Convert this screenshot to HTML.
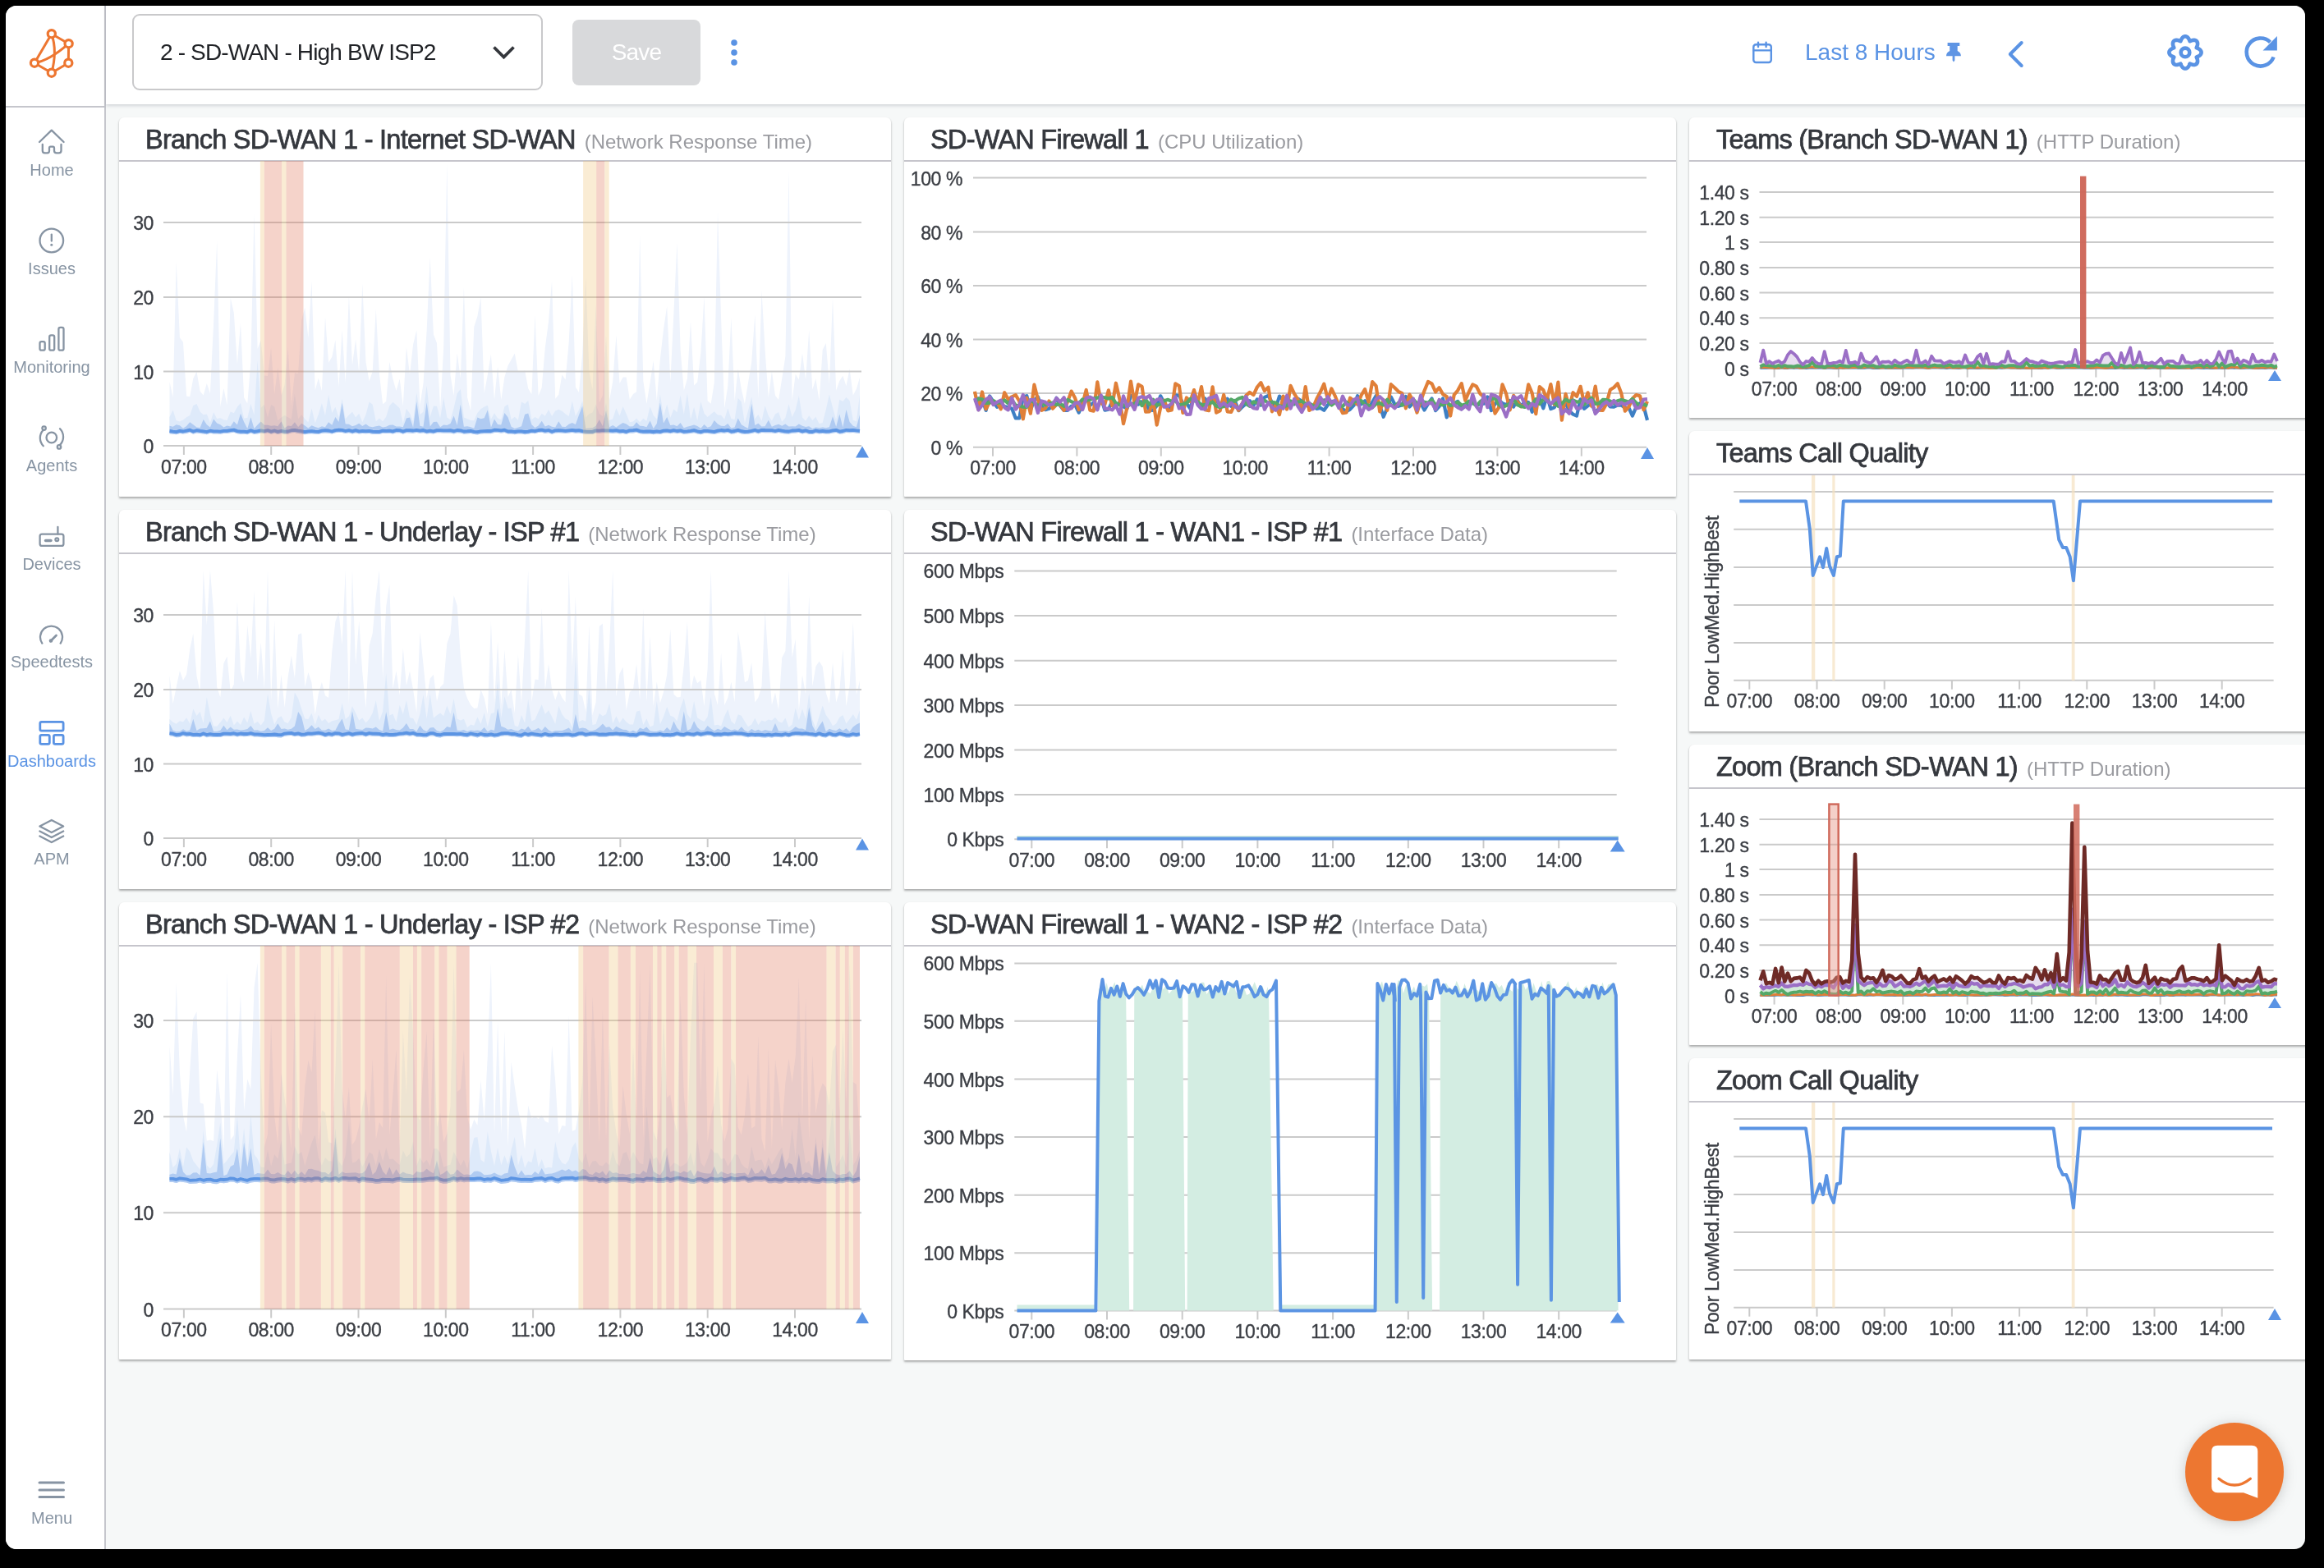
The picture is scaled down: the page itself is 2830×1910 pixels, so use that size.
<!DOCTYPE html>
<html><head><meta charset="utf-8"><style>
html,body{margin:0;padding:0;background:#000;width:2830px;height:1910px;overflow:hidden;font-family:"Liberation Sans",sans-serif}
#app{position:absolute;left:0;top:0;width:2830px;height:1910px;background:#f6f8f8;clip-path:inset(7px 23px 23px 7px round 13px)}
.abs{position:absolute}
#side{left:0;top:0;width:127px;height:1910px;background:#fff;border-right:2px solid #c5c6cc}
#logoline{left:0;top:129px;width:127px;height:2px;background:#c5c6cc}
#head{left:129px;top:0;width:2701px;height:127px;background:#fff;box-shadow:0 2px 4px rgba(30,35,60,0.16)}
.card{position:absolute;background:#fff;border-radius:6px 6px 1px 1px;box-shadow:0 2px 3px -0.5px rgba(0,0,0,0.24),0 1.5px 2px rgba(0,0,0,0.09)}
.hl{position:absolute;height:2px;background:#c6c5cc}
.nav{position:absolute;left:0;width:127px;text-align:center;font-size:20px;color:#8794a3}
svg text{font-family:"Liberation Sans",sans-serif}
svg{will-change:transform}
</style></head><body>
<div id="app">
<div id="side" class="abs"></div>
<div id="logoline" class="abs"></div>
<div id="head" class="abs"></div>
<div class="card" style="left:145px;top:143px;width:940px;height:462px"></div><div class="hl" style="left:145px;top:195px;width:940px"></div><div class="card" style="left:145px;top:621px;width:940px;height:462px"></div><div class="hl" style="left:145px;top:673px;width:940px"></div><div class="card" style="left:145px;top:1099px;width:940px;height:557px"></div><div class="hl" style="left:145px;top:1151px;width:940px"></div><div class="card" style="left:1101px;top:143px;width:940px;height:462px"></div><div class="hl" style="left:1101px;top:195px;width:940px"></div><div class="card" style="left:1101px;top:621px;width:940px;height:462px"></div><div class="hl" style="left:1101px;top:673px;width:940px"></div><div class="card" style="left:1101px;top:1099px;width:940px;height:558px"></div><div class="hl" style="left:1101px;top:1151px;width:940px"></div><div class="card" style="left:2057px;top:143px;width:760px;height:366px"></div><div class="hl" style="left:2057px;top:195px;width:760px"></div><div class="card" style="left:2057px;top:525px;width:760px;height:366px"></div><div class="hl" style="left:2057px;top:577px;width:760px"></div><div class="card" style="left:2057px;top:907px;width:760px;height:366px"></div><div class="hl" style="left:2057px;top:959px;width:760px"></div><div class="card" style="left:2057px;top:1289px;width:760px;height:367px"></div><div class="hl" style="left:2057px;top:1341px;width:760px"></div>
<svg class="abs" style="left:0;top:0" width="2830" height="1910" viewBox="0 0 2830 1910">
<text x="177.0" y="181.0" font-size="32.5" fill="#35383e" stroke="#35383e" stroke-width="0.75" letter-spacing="-0.75">Branch SD-WAN 1 - Internet SD-WAN<tspan dx="11" font-size="24" stroke="none" fill="#9a9ba0" letter-spacing="0">(Network Response Time)</tspan></text>
<polygon points="206.5,464.9 210.6,484.1 214.7,318.7 218.9,411.2 223.0,416.8 227.1,482.6 231.2,483.2 235.3,461.0 239.5,452.4 243.6,476.4 247.7,481.6 251.8,466.9 255.9,479.2 260.1,393.5 264.2,293.3 268.3,494.9 272.4,472.9 276.5,493.6 280.7,362.9 284.8,380.9 288.9,443.7 293.0,393.5 297.1,484.3 301.3,491.6 305.4,441.3 309.5,259.8 313.6,425.1 317.7,414.5 321.9,457.5 326.0,457.9 330.1,423.2 334.2,480.6 338.3,447.0 342.5,481.5 346.6,468.7 350.7,423.0 354.8,493.1 358.9,454.3 363.1,454.7 367.2,390.1 371.3,374.4 375.4,411.4 379.5,342.3 383.7,475.5 387.8,460.6 391.9,476.2 396.0,385.8 400.1,441.7 404.3,434.8 408.4,414.0 412.5,471.3 416.6,401.7 420.7,466.4 424.9,359.5 429.0,444.7 433.1,413.2 437.2,454.3 441.3,345.3 445.5,441.0 449.6,464.3 453.7,452.5 457.8,376.2 461.9,454.9 466.1,492.3 470.2,489.0 474.3,440.4 478.4,461.6 482.5,475.9 486.7,461.5 490.8,494.5 494.9,422.7 499.0,456.3 503.1,419.5 507.3,402.0 511.4,493.5 515.5,467.3 519.6,403.3 523.7,313.2 527.9,407.2 532.0,418.1 536.1,498.0 540.2,423.6 544.3,198.5 548.5,457.1 552.6,481.7 556.7,430.3 560.8,461.1 564.9,349.4 569.1,484.0 573.2,500.6 577.3,398.1 581.4,385.2 585.5,361.9 589.7,479.0 593.8,456.4 597.9,431.4 602.0,486.8 606.1,446.2 610.3,487.0 614.4,459.3 618.5,445.4 622.6,438.1 626.8,430.4 630.9,452.7 635.0,453.3 639.1,451.0 643.2,473.3 647.4,480.2 651.5,383.6 655.6,482.1 659.7,472.3 663.8,423.5 668.0,391.7 672.1,342.2 676.2,485.7 680.3,480.8 684.4,456.5 688.6,462.6 692.7,416.8 696.8,334.3 700.9,471.4 705.0,478.0 709.2,430.4 713.3,336.7 717.4,452.5 721.5,474.8 725.6,370.2 729.8,490.8 733.9,481.7 738.0,407.7 742.1,487.4 746.2,464.7 750.4,408.2 754.5,467.0 758.6,459.5 762.7,459.6 766.8,486.8 771.0,479.9 775.1,477.3 779.2,286.5 783.3,463.7 787.4,491.8 791.6,466.1 795.7,439.3 799.8,488.1 803.9,437.3 808.0,401.2 812.2,372.9 816.3,465.7 820.4,381.8 824.5,295.2 828.6,426.0 832.8,475.8 836.9,461.6 841.0,391.4 845.1,469.4 849.2,465.5 853.4,429.8 857.5,360.8 861.6,488.3 865.7,491.8 869.8,466.3 874.0,257.7 878.1,388.1 882.2,497.3 886.3,470.2 890.4,386.8 894.6,487.9 898.7,449.2 902.8,473.8 906.9,491.7 911.0,466.5 915.2,441.3 919.3,383.2 923.4,485.5 927.5,353.7 931.6,426.9 935.8,484.0 939.9,452.2 944.0,481.8 948.1,486.9 952.2,461.3 956.4,434.0 960.5,207.2 964.6,488.0 968.7,455.7 972.8,462.4 977.0,430.3 981.1,462.6 985.2,401.9 989.3,474.8 993.4,461.3 997.6,488.3 1001.7,426.1 1005.8,418.1 1009.9,467.7 1014.0,363.1 1018.2,475.7 1022.3,463.9 1026.4,457.7 1030.5,470.3 1034.6,448.9 1038.8,481.5 1042.9,473.8 1047.0,459.7 1047.0,528.0 1042.9,527.6 1038.8,527.0 1034.6,527.3 1030.5,526.9 1026.4,528.2 1022.3,528.8 1018.2,527.0 1014.0,527.5 1009.9,528.4 1005.8,528.6 1001.7,528.1 997.6,528.5 993.4,527.7 989.3,529.1 985.2,529.0 981.1,527.5 977.0,528.5 972.8,527.1 968.7,527.6 964.6,527.7 960.5,528.7 956.4,528.6 952.2,527.9 948.1,527.1 944.0,528.1 939.9,527.3 935.8,527.3 931.6,527.2 927.5,527.0 923.4,528.4 919.3,526.9 915.2,528.1 911.0,528.8 906.9,529.0 902.8,528.4 898.7,527.1 894.6,528.2 890.4,528.7 886.3,527.0 882.2,527.7 878.1,527.2 874.0,527.9 869.8,529.0 865.7,528.6 861.6,528.1 857.5,528.0 853.4,529.3 849.2,528.4 845.1,527.3 841.0,528.1 836.9,528.6 832.8,528.9 828.6,527.6 824.5,528.2 820.4,527.3 816.3,528.2 812.2,527.5 808.0,527.7 803.9,529.1 799.8,528.6 795.7,529.2 791.6,528.6 787.4,528.7 783.3,528.8 779.2,528.3 775.1,526.7 771.0,527.4 766.8,527.5 762.7,529.0 758.6,527.9 754.5,528.4 750.4,527.4 746.2,527.9 742.1,527.6 738.0,527.4 733.9,527.3 729.8,527.8 725.6,527.6 721.5,529.1 717.4,529.0 713.3,528.9 709.2,528.3 705.0,527.4 700.9,527.7 696.8,527.1 692.7,527.5 688.6,528.1 684.4,527.5 680.3,527.3 676.2,527.6 672.1,528.9 668.0,527.2 663.8,527.9 659.7,526.7 655.6,527.1 651.5,528.3 647.4,527.8 643.2,528.8 639.1,529.2 635.0,528.6 630.9,528.6 626.8,529.2 622.6,528.5 618.5,528.6 614.4,526.9 610.3,527.5 606.1,527.0 602.0,526.9 597.9,528.2 593.8,528.2 589.7,528.3 585.5,528.5 581.4,529.4 577.3,529.1 573.2,528.0 569.1,528.4 564.9,528.7 560.8,527.5 556.7,527.2 552.6,528.4 548.5,527.4 544.3,527.5 540.2,527.5 536.1,527.3 532.0,527.3 527.9,528.6 523.7,527.9 519.6,528.6 515.5,527.2 511.4,527.8 507.3,526.9 503.1,527.7 499.0,527.4 494.9,527.3 490.8,528.7 486.7,527.3 482.5,527.2 478.4,528.6 474.3,527.8 470.2,528.1 466.1,527.8 461.9,529.0 457.8,529.0 453.7,528.9 449.6,528.0 445.5,528.3 441.3,528.1 437.2,528.5 433.1,527.4 429.0,528.5 424.9,527.3 420.7,528.1 416.6,527.0 412.5,526.8 408.4,527.3 404.3,528.6 400.1,527.7 396.0,527.4 391.9,527.7 387.8,529.0 383.7,528.8 379.5,528.3 375.4,528.5 371.3,529.2 367.2,528.4 363.1,527.9 358.9,527.0 354.8,527.3 350.7,528.7 346.6,528.8 342.5,528.1 338.3,529.0 334.2,527.7 330.1,528.8 326.0,527.2 321.9,528.3 317.7,527.6 313.6,528.4 309.5,529.0 305.4,527.5 301.3,529.3 297.1,528.8 293.0,528.9 288.9,528.3 284.8,526.8 280.7,527.3 276.5,528.1 272.4,528.1 268.3,528.7 264.2,528.4 260.1,528.5 255.9,527.8 251.8,529.2 247.7,528.5 243.6,528.1 239.5,527.4 235.3,528.7 231.2,526.8 227.1,527.9 223.0,528.6 218.9,528.0 214.7,529.2 210.6,528.8 206.5,528.2" fill="#eef3fc" />
<polygon points="206.5,508.0 210.6,499.5 214.7,512.2 218.9,513.5 223.0,511.4 227.1,508.3 231.2,505.9 235.3,494.0 239.5,492.0 243.6,501.5 247.7,505.3 251.8,504.6 255.9,514.8 260.1,502.3 264.2,509.9 268.3,509.2 272.4,511.2 276.5,512.0 280.7,501.6 284.8,503.2 288.9,495.8 293.0,491.1 297.1,509.4 301.3,508.9 305.4,491.9 309.5,505.5 313.6,439.6 317.7,496.8 321.9,492.8 326.0,508.4 330.1,493.1 334.2,495.4 338.3,512.2 342.5,508.6 346.6,506.1 350.7,508.2 354.8,510.7 358.9,479.8 363.1,510.2 367.2,505.3 371.3,510.3 375.4,514.4 379.5,497.4 383.7,515.3 387.8,504.8 391.9,491.2 396.0,505.9 400.1,480.9 404.3,503.0 408.4,495.8 412.5,508.5 416.6,485.5 420.7,510.3 424.9,505.5 429.0,501.7 433.1,508.6 437.2,503.7 441.3,514.3 445.5,505.1 449.6,489.4 453.7,492.8 457.8,513.3 461.9,509.6 466.1,513.2 470.2,507.8 474.3,494.2 478.4,489.7 482.5,493.3 486.7,497.2 490.8,515.5 494.9,497.9 499.0,503.5 503.1,513.6 507.3,478.5 511.4,505.0 515.5,501.8 519.6,469.5 523.7,507.9 527.9,494.5 532.0,494.7 536.1,509.4 540.2,484.2 544.3,508.6 548.5,511.3 552.6,497.3 556.7,479.3 560.8,474.1 564.9,508.5 569.1,510.2 573.2,512.1 577.3,512.3 581.4,503.1 585.5,498.3 589.7,495.5 593.8,493.8 597.9,510.5 602.0,503.2 606.1,509.4 610.3,510.9 614.4,495.3 618.5,492.6 622.6,510.9 626.8,507.7 630.9,511.7 635.0,489.5 639.1,492.0 643.2,488.1 647.4,511.1 651.5,508.1 655.6,510.3 659.7,503.8 663.8,506.7 668.0,499.1 672.1,506.9 676.2,500.6 680.3,498.7 684.4,500.8 688.6,504.3 692.7,507.0 696.8,488.6 700.9,507.0 705.0,499.2 709.2,488.6 713.3,508.6 717.4,504.3 721.5,502.6 725.6,492.4 729.8,504.0 733.9,507.1 738.0,490.8 742.1,511.9 746.2,510.2 750.4,497.3 754.5,506.5 758.6,494.9 762.7,504.3 766.8,514.2 771.0,513.5 775.1,509.7 779.2,514.2 783.3,509.7 787.4,512.8 791.6,495.3 795.7,506.1 799.8,510.6 803.9,480.6 808.0,506.9 812.2,492.6 816.3,508.8 820.4,498.5 824.5,502.2 828.6,481.6 832.8,504.7 836.9,479.1 841.0,511.1 845.1,495.7 849.2,512.3 853.4,489.3 857.5,503.5 861.6,507.9 865.7,504.4 869.8,501.2 874.0,505.4 878.1,505.8 882.2,510.7 886.3,497.6 890.4,510.0 894.6,511.0 898.7,484.9 902.8,489.4 906.9,515.3 911.0,500.4 915.2,483.5 919.3,510.1 923.4,504.9 927.5,512.8 931.6,494.3 935.8,506.4 939.9,512.6 944.0,504.5 948.1,502.0 952.2,513.7 956.4,508.7 960.5,492.2 964.6,507.9 968.7,499.6 972.8,481.9 977.0,508.4 981.1,512.8 985.2,506.3 989.3,512.1 993.4,507.7 997.6,516.3 1001.7,514.9 1005.8,499.0 1009.9,480.5 1014.0,496.6 1018.2,511.6 1022.3,486.7 1026.4,489.1 1030.5,483.9 1034.6,487.9 1038.8,511.7 1042.9,513.3 1047.0,481.0 1047.0,528.0 1042.9,527.6 1038.8,527.0 1034.6,527.3 1030.5,526.9 1026.4,528.2 1022.3,528.8 1018.2,527.0 1014.0,527.5 1009.9,528.4 1005.8,528.6 1001.7,528.1 997.6,528.5 993.4,527.7 989.3,529.1 985.2,529.0 981.1,527.5 977.0,528.5 972.8,527.1 968.7,527.6 964.6,527.7 960.5,528.7 956.4,528.6 952.2,527.9 948.1,527.1 944.0,528.1 939.9,527.3 935.8,527.3 931.6,527.2 927.5,527.0 923.4,528.4 919.3,526.9 915.2,528.1 911.0,528.8 906.9,529.0 902.8,528.4 898.7,527.1 894.6,528.2 890.4,528.7 886.3,527.0 882.2,527.7 878.1,527.2 874.0,527.9 869.8,529.0 865.7,528.6 861.6,528.1 857.5,528.0 853.4,529.3 849.2,528.4 845.1,527.3 841.0,528.1 836.9,528.6 832.8,528.9 828.6,527.6 824.5,528.2 820.4,527.3 816.3,528.2 812.2,527.5 808.0,527.7 803.9,529.1 799.8,528.6 795.7,529.2 791.6,528.6 787.4,528.7 783.3,528.8 779.2,528.3 775.1,526.7 771.0,527.4 766.8,527.5 762.7,529.0 758.6,527.9 754.5,528.4 750.4,527.4 746.2,527.9 742.1,527.6 738.0,527.4 733.9,527.3 729.8,527.8 725.6,527.6 721.5,529.1 717.4,529.0 713.3,528.9 709.2,528.3 705.0,527.4 700.9,527.7 696.8,527.1 692.7,527.5 688.6,528.1 684.4,527.5 680.3,527.3 676.2,527.6 672.1,528.9 668.0,527.2 663.8,527.9 659.7,526.7 655.6,527.1 651.5,528.3 647.4,527.8 643.2,528.8 639.1,529.2 635.0,528.6 630.9,528.6 626.8,529.2 622.6,528.5 618.5,528.6 614.4,526.9 610.3,527.5 606.1,527.0 602.0,526.9 597.9,528.2 593.8,528.2 589.7,528.3 585.5,528.5 581.4,529.4 577.3,529.1 573.2,528.0 569.1,528.4 564.9,528.7 560.8,527.5 556.7,527.2 552.6,528.4 548.5,527.4 544.3,527.5 540.2,527.5 536.1,527.3 532.0,527.3 527.9,528.6 523.7,527.9 519.6,528.6 515.5,527.2 511.4,527.8 507.3,526.9 503.1,527.7 499.0,527.4 494.9,527.3 490.8,528.7 486.7,527.3 482.5,527.2 478.4,528.6 474.3,527.8 470.2,528.1 466.1,527.8 461.9,529.0 457.8,529.0 453.7,528.9 449.6,528.0 445.5,528.3 441.3,528.1 437.2,528.5 433.1,527.4 429.0,528.5 424.9,527.3 420.7,528.1 416.6,527.0 412.5,526.8 408.4,527.3 404.3,528.6 400.1,527.7 396.0,527.4 391.9,527.7 387.8,529.0 383.7,528.8 379.5,528.3 375.4,528.5 371.3,529.2 367.2,528.4 363.1,527.9 358.9,527.0 354.8,527.3 350.7,528.7 346.6,528.8 342.5,528.1 338.3,529.0 334.2,527.7 330.1,528.8 326.0,527.2 321.9,528.3 317.7,527.6 313.6,528.4 309.5,529.0 305.4,527.5 301.3,529.3 297.1,528.8 293.0,528.9 288.9,528.3 284.8,526.8 280.7,527.3 276.5,528.1 272.4,528.1 268.3,528.7 264.2,528.4 260.1,528.5 255.9,527.8 251.8,529.2 247.7,528.5 243.6,528.1 239.5,527.4 235.3,528.7 231.2,526.8 227.1,527.9 223.0,528.6 218.9,528.0 214.7,529.2 210.6,528.8 206.5,528.2" fill="#deeafa" />
<polygon points="206.5,518.7 210.6,519.7 214.7,517.2 218.9,518.2 223.0,521.7 227.1,518.9 231.2,514.2 235.3,517.3 239.5,520.6 243.6,521.1 247.7,511.1 251.8,517.3 255.9,520.6 260.1,510.5 264.2,515.5 268.3,517.2 272.4,520.4 276.5,518.6 280.7,519.6 284.8,513.2 288.9,517.6 293.0,503.8 297.1,514.1 301.3,521.9 305.4,508.2 309.5,522.1 313.6,517.4 317.7,513.5 321.9,517.8 326.0,517.7 330.1,518.8 334.2,518.2 338.3,519.3 342.5,513.2 346.6,521.4 350.7,518.4 354.8,519.0 358.9,514.2 363.1,520.0 367.2,515.8 371.3,518.5 375.4,521.6 379.5,518.3 383.7,520.0 387.8,521.2 391.9,519.3 396.0,520.2 400.1,514.2 404.3,517.8 408.4,508.0 412.5,513.9 416.6,490.7 420.7,516.4 424.9,516.8 429.0,519.3 433.1,518.0 437.2,515.7 441.3,519.1 445.5,516.4 449.6,519.5 453.7,520.3 457.8,519.2 461.9,518.5 466.1,520.6 470.2,519.8 474.3,517.7 478.4,517.5 482.5,519.6 486.7,519.5 490.8,520.2 494.9,509.5 499.0,508.4 503.1,520.4 507.3,489.2 511.4,518.7 515.5,519.7 519.6,490.2 523.7,519.4 527.9,514.1 532.0,513.7 536.1,520.2 540.2,517.6 544.3,518.0 548.5,516.0 552.6,506.5 556.7,517.9 560.8,492.8 564.9,519.8 569.1,519.2 573.2,520.2 577.3,521.8 581.4,508.4 585.5,510.2 589.7,509.2 593.8,499.6 597.9,520.4 602.0,510.4 606.1,517.1 610.3,517.5 614.4,503.0 618.5,508.3 622.6,519.7 626.8,522.0 630.9,520.8 635.0,519.3 639.1,504.8 643.2,503.4 647.4,517.2 651.5,521.1 655.6,518.5 659.7,512.8 663.8,519.5 668.0,517.8 672.1,519.8 676.2,520.6 680.3,513.3 684.4,519.8 688.6,520.0 692.7,516.8 696.8,515.1 700.9,517.0 705.0,505.6 709.2,494.4 713.3,521.9 717.4,521.5 721.5,521.2 725.6,518.7 729.8,511.0 733.9,518.9 738.0,500.0 742.1,520.3 746.2,517.9 750.4,520.5 754.5,517.6 758.6,515.0 762.7,516.6 766.8,519.6 771.0,519.2 775.1,514.3 779.2,518.8 783.3,519.0 787.4,520.3 791.6,512.6 795.7,521.9 799.8,516.1 803.9,490.7 808.0,515.5 812.2,507.9 816.3,518.1 820.4,517.5 824.5,519.2 828.6,515.0 832.8,521.2 836.9,519.8 841.0,518.7 845.1,517.6 849.2,518.9 853.4,521.8 857.5,517.0 861.6,520.8 865.7,519.2 869.8,512.1 874.0,516.6 878.1,518.7 882.2,519.1 886.3,516.0 890.4,521.5 894.6,520.5 898.7,509.5 902.8,517.3 906.9,519.8 911.0,521.7 915.2,491.7 919.3,518.1 923.4,515.8 927.5,519.5 931.6,519.2 935.8,511.7 939.9,519.8 944.0,517.9 948.1,516.8 952.2,518.7 956.4,516.6 960.5,519.4 964.6,519.3 968.7,519.4 972.8,516.6 977.0,518.8 981.1,519.9 985.2,519.3 989.3,522.3 993.4,520.6 997.6,521.2 1001.7,520.4 1005.8,521.3 1009.9,520.2 1014.0,507.2 1018.2,519.7 1022.3,504.4 1026.4,520.5 1030.5,498.9 1034.6,514.1 1038.8,518.7 1042.9,520.2 1047.0,505.3 1047.0,528.0 1042.9,527.6 1038.8,527.0 1034.6,527.3 1030.5,526.9 1026.4,528.2 1022.3,528.8 1018.2,527.0 1014.0,527.5 1009.9,528.4 1005.8,528.6 1001.7,528.1 997.6,528.5 993.4,527.7 989.3,529.1 985.2,529.0 981.1,527.5 977.0,528.5 972.8,527.1 968.7,527.6 964.6,527.7 960.5,528.7 956.4,528.6 952.2,527.9 948.1,527.1 944.0,528.1 939.9,527.3 935.8,527.3 931.6,527.2 927.5,527.0 923.4,528.4 919.3,526.9 915.2,528.1 911.0,528.8 906.9,529.0 902.8,528.4 898.7,527.1 894.6,528.2 890.4,528.7 886.3,527.0 882.2,527.7 878.1,527.2 874.0,527.9 869.8,529.0 865.7,528.6 861.6,528.1 857.5,528.0 853.4,529.3 849.2,528.4 845.1,527.3 841.0,528.1 836.9,528.6 832.8,528.9 828.6,527.6 824.5,528.2 820.4,527.3 816.3,528.2 812.2,527.5 808.0,527.7 803.9,529.1 799.8,528.6 795.7,529.2 791.6,528.6 787.4,528.7 783.3,528.8 779.2,528.3 775.1,526.7 771.0,527.4 766.8,527.5 762.7,529.0 758.6,527.9 754.5,528.4 750.4,527.4 746.2,527.9 742.1,527.6 738.0,527.4 733.9,527.3 729.8,527.8 725.6,527.6 721.5,529.1 717.4,529.0 713.3,528.9 709.2,528.3 705.0,527.4 700.9,527.7 696.8,527.1 692.7,527.5 688.6,528.1 684.4,527.5 680.3,527.3 676.2,527.6 672.1,528.9 668.0,527.2 663.8,527.9 659.7,526.7 655.6,527.1 651.5,528.3 647.4,527.8 643.2,528.8 639.1,529.2 635.0,528.6 630.9,528.6 626.8,529.2 622.6,528.5 618.5,528.6 614.4,526.9 610.3,527.5 606.1,527.0 602.0,526.9 597.9,528.2 593.8,528.2 589.7,528.3 585.5,528.5 581.4,529.4 577.3,529.1 573.2,528.0 569.1,528.4 564.9,528.7 560.8,527.5 556.7,527.2 552.6,528.4 548.5,527.4 544.3,527.5 540.2,527.5 536.1,527.3 532.0,527.3 527.9,528.6 523.7,527.9 519.6,528.6 515.5,527.2 511.4,527.8 507.3,526.9 503.1,527.7 499.0,527.4 494.9,527.3 490.8,528.7 486.7,527.3 482.5,527.2 478.4,528.6 474.3,527.8 470.2,528.1 466.1,527.8 461.9,529.0 457.8,529.0 453.7,528.9 449.6,528.0 445.5,528.3 441.3,528.1 437.2,528.5 433.1,527.4 429.0,528.5 424.9,527.3 420.7,528.1 416.6,527.0 412.5,526.8 408.4,527.3 404.3,528.6 400.1,527.7 396.0,527.4 391.9,527.7 387.8,529.0 383.7,528.8 379.5,528.3 375.4,528.5 371.3,529.2 367.2,528.4 363.1,527.9 358.9,527.0 354.8,527.3 350.7,528.7 346.6,528.8 342.5,528.1 338.3,529.0 334.2,527.7 330.1,528.8 326.0,527.2 321.9,528.3 317.7,527.6 313.6,528.4 309.5,529.0 305.4,527.5 301.3,529.3 297.1,528.8 293.0,528.9 288.9,528.3 284.8,526.8 280.7,527.3 276.5,528.1 272.4,528.1 268.3,528.7 264.2,528.4 260.1,528.5 255.9,527.8 251.8,529.2 247.7,528.5 243.6,528.1 239.5,527.4 235.3,528.7 231.2,526.8 227.1,527.9 223.0,528.6 218.9,528.0 214.7,529.2 210.6,528.8 206.5,528.2" fill="#b0cbf2" />
<polyline points="206.5,525.0 210.6,525.6 214.7,526.1 218.9,524.9 223.0,525.5 227.1,524.7 231.2,523.7 235.3,525.5 239.5,524.2 243.6,524.9 247.7,525.3 251.8,526.0 255.9,524.7 260.1,525.3 264.2,525.3 268.3,525.6 272.4,524.9 276.5,524.9 280.7,524.1 284.8,523.6 288.9,525.1 293.0,525.7 297.1,525.6 301.3,526.1 305.4,524.3 309.5,525.8 313.6,525.2 317.7,524.4 321.9,525.1 326.0,524.1 330.1,525.6 334.2,524.5 338.3,525.9 342.5,524.9 346.6,525.6 350.7,525.5 354.8,524.2 358.9,523.9 363.1,524.7 367.2,525.2 371.3,526.1 375.4,525.3 379.5,525.1 383.7,525.7 387.8,525.9 391.9,524.6 396.0,524.2 400.1,524.5 404.3,525.5 408.4,524.1 412.5,523.7 416.6,523.9 420.7,525.0 424.9,524.1 429.0,525.3 433.1,524.2 437.2,525.3 441.3,524.9 445.5,525.1 449.6,524.9 453.7,525.7 457.8,525.9 461.9,525.8 466.1,524.6 470.2,524.9 474.3,524.6 478.4,525.4 482.5,524.0 486.7,524.1 490.8,525.5 494.9,524.1 499.0,524.2 503.1,524.5 507.3,523.8 511.4,524.6 515.5,524.0 519.6,525.4 523.7,524.7 527.9,525.4 532.0,524.1 536.1,524.1 540.2,524.3 544.3,524.3 548.5,524.2 552.6,525.2 556.7,524.0 560.8,524.3 564.9,525.5 569.1,525.2 573.2,524.8 577.3,525.9 581.4,526.2 585.5,525.3 589.7,525.1 593.8,525.0 597.9,525.0 602.0,523.7 606.1,523.9 610.3,524.3 614.4,523.7 618.5,525.5 622.6,525.3 626.8,526.0 630.9,525.4 635.0,525.4 639.1,526.0 643.2,525.7 647.4,524.6 651.5,525.1 655.6,524.0 659.7,523.6 663.8,524.7 668.0,524.0 672.1,525.7 676.2,524.4 680.3,524.2 684.4,524.3 688.6,524.9 692.7,524.4 696.8,523.9 700.9,524.5 705.0,524.2 709.2,525.2 713.3,525.7 717.4,525.9 721.5,525.9 725.6,524.4 729.8,524.6 733.9,524.1 738.0,524.3 742.1,524.4 746.2,524.7 750.4,524.2 754.5,525.2 758.6,524.8 762.7,525.8 766.8,524.4 771.0,524.2 775.1,523.6 779.2,525.1 783.3,525.6 787.4,525.5 791.6,525.5 795.7,526.0 799.8,525.4 803.9,525.9 808.0,524.6 812.2,524.3 816.3,525.1 820.4,524.2 824.5,525.0 828.6,524.4 832.8,525.7 836.9,525.4 841.0,524.9 845.1,524.1 849.2,525.3 853.4,526.1 857.5,524.8 861.6,524.9 865.7,525.4 869.8,525.9 874.0,524.7 878.1,524.0 882.2,524.5 886.3,523.8 890.4,525.6 894.6,525.0 898.7,523.9 902.8,525.2 906.9,525.9 911.0,525.6 915.2,524.9 919.3,523.7 923.4,525.2 927.5,523.8 931.6,524.0 935.8,524.1 939.9,524.2 944.0,525.0 948.1,523.9 952.2,524.7 956.4,525.4 960.5,525.5 964.6,524.5 968.7,524.4 972.8,523.9 977.0,525.4 981.1,524.3 985.2,525.8 989.3,526.0 993.4,524.5 997.6,525.4 1001.7,525.0 1005.8,525.5 1009.9,525.3 1014.0,524.4 1018.2,523.8 1022.3,525.6 1026.4,525.0 1030.5,523.8 1034.6,524.1 1038.8,523.8 1042.9,524.4 1047.0,524.9" fill="none" stroke="#5b94e3" stroke-width="3.8" stroke-linejoin="round" />
<line x1="199.0" y1="543.0" x2="1049.0" y2="543.0" stroke="#cacaca" stroke-width="2"/>
<text x="187.0" y="552.0" font-size="23" fill="#3b3e44" stroke="#3b3e44" stroke-width="0.35" letter-spacing="-0.4" text-anchor="end" font-weight="normal" >0</text>
<line x1="199.0" y1="452.5" x2="1049.0" y2="452.5" stroke="#cacaca" stroke-width="2"/>
<text x="187.0" y="461.5" font-size="23" fill="#3b3e44" stroke="#3b3e44" stroke-width="0.35" letter-spacing="-0.4" text-anchor="end" font-weight="normal" >10</text>
<line x1="199.0" y1="362.0" x2="1049.0" y2="362.0" stroke="#cacaca" stroke-width="2"/>
<text x="187.0" y="371.0" font-size="23" fill="#3b3e44" stroke="#3b3e44" stroke-width="0.35" letter-spacing="-0.4" text-anchor="end" font-weight="normal" >20</text>
<line x1="199.0" y1="271.0" x2="1049.0" y2="271.0" stroke="#cacaca" stroke-width="2"/>
<text x="187.0" y="280.0" font-size="23" fill="#3b3e44" stroke="#3b3e44" stroke-width="0.35" letter-spacing="-0.4" text-anchor="end" font-weight="normal" >30</text>
<line x1="223.9" y1="543.0" x2="223.9" y2="554.0" stroke="#cacaca" stroke-width="2"/>
<text x="223.9" y="576.5" font-size="23" fill="#3b3e44" stroke="#3b3e44" stroke-width="0.35" letter-spacing="-0.4" text-anchor="middle" font-weight="normal" >07:00</text>
<line x1="330.2" y1="543.0" x2="330.2" y2="554.0" stroke="#cacaca" stroke-width="2"/>
<text x="330.2" y="576.5" font-size="23" fill="#3b3e44" stroke="#3b3e44" stroke-width="0.35" letter-spacing="-0.4" text-anchor="middle" font-weight="normal" >08:00</text>
<line x1="436.5" y1="543.0" x2="436.5" y2="554.0" stroke="#cacaca" stroke-width="2"/>
<text x="436.5" y="576.5" font-size="23" fill="#3b3e44" stroke="#3b3e44" stroke-width="0.35" letter-spacing="-0.4" text-anchor="middle" font-weight="normal" >09:00</text>
<line x1="542.8" y1="543.0" x2="542.8" y2="554.0" stroke="#cacaca" stroke-width="2"/>
<text x="542.8" y="576.5" font-size="23" fill="#3b3e44" stroke="#3b3e44" stroke-width="0.35" letter-spacing="-0.4" text-anchor="middle" font-weight="normal" >10:00</text>
<line x1="649.1" y1="543.0" x2="649.1" y2="554.0" stroke="#cacaca" stroke-width="2"/>
<text x="649.1" y="576.5" font-size="23" fill="#3b3e44" stroke="#3b3e44" stroke-width="0.35" letter-spacing="-0.4" text-anchor="middle" font-weight="normal" >11:00</text>
<line x1="755.4" y1="543.0" x2="755.4" y2="554.0" stroke="#cacaca" stroke-width="2"/>
<text x="755.4" y="576.5" font-size="23" fill="#3b3e44" stroke="#3b3e44" stroke-width="0.35" letter-spacing="-0.4" text-anchor="middle" font-weight="normal" >12:00</text>
<line x1="861.7" y1="543.0" x2="861.7" y2="554.0" stroke="#cacaca" stroke-width="2"/>
<text x="861.7" y="576.5" font-size="23" fill="#3b3e44" stroke="#3b3e44" stroke-width="0.35" letter-spacing="-0.4" text-anchor="middle" font-weight="normal" >13:00</text>
<line x1="968.0" y1="543.0" x2="968.0" y2="554.0" stroke="#cacaca" stroke-width="2"/>
<text x="968.0" y="576.5" font-size="23" fill="#3b3e44" stroke="#3b3e44" stroke-width="0.35" letter-spacing="-0.4" text-anchor="middle" font-weight="normal" >14:00</text>
<line x1="199" y1="543" x2="1049" y2="543" stroke="#cacaca" stroke-width="2"/>
<rect x="316.9" y="196.0" width="4.9" height="347.0" fill="rgba(239,196,121,0.32)"/>
<rect x="321.8" y="196.0" width="21.4" height="347.0" fill="rgba(224,118,89,0.32)"/>
<rect x="343.2" y="196.0" width="5.3" height="347.0" fill="rgba(239,196,121,0.32)"/>
<rect x="348.5" y="196.0" width="21.0" height="347.0" fill="rgba(224,118,89,0.32)"/>
<rect x="710.1" y="196.0" width="16.2" height="347.0" fill="rgba(239,196,121,0.32)"/>
<rect x="726.2" y="196.0" width="10.1" height="347.0" fill="rgba(224,118,89,0.32)"/>
<rect x="736.4" y="196.0" width="5.3" height="347.0" fill="rgba(239,196,121,0.32)"/>
<polygon points="1042.0,557.5 1050.0,543.5 1058.0,557.5" fill="#5a93e4"/>
<text x="177.0" y="659.0" font-size="32.5" fill="#35383e" stroke="#35383e" stroke-width="0.75" letter-spacing="-0.75">Branch SD-WAN 1 - Underlay - ISP #1<tspan dx="11" font-size="24" stroke="none" fill="#9a9ba0" letter-spacing="0">(Network Response Time)</tspan></text>
<polygon points="206.5,822.9 210.6,857.2 214.7,836.9 218.9,816.9 223.0,828.7 227.1,821.4 231.2,790.9 235.3,771.5 239.5,823.5 243.6,843.1 247.7,694.6 251.8,761.4 255.9,694.6 260.1,745.7 264.2,837.0 268.3,849.3 272.4,807.9 276.5,799.4 280.7,841.9 284.8,833.7 288.9,731.9 293.0,818.1 297.1,831.7 301.3,761.5 305.4,802.3 309.5,719.5 313.6,829.9 317.7,782.4 321.9,839.4 326.0,694.6 330.1,853.7 334.2,755.4 338.3,863.0 342.5,821.6 346.6,861.7 350.7,824.4 354.8,798.4 358.9,826.1 363.1,772.9 367.2,771.2 371.3,836.7 375.4,819.1 379.5,831.4 383.7,870.6 387.8,844.9 391.9,830.8 396.0,847.3 400.1,850.0 404.3,793.6 408.4,757.2 412.5,745.6 416.6,785.6 420.7,694.6 424.9,858.1 429.0,694.6 433.1,810.1 437.2,756.0 441.3,819.0 445.5,862.4 449.6,786.8 453.7,771.4 457.8,726.1 461.9,694.6 466.1,826.5 470.2,738.8 474.3,711.8 478.4,839.1 482.5,817.2 486.7,846.7 490.8,789.4 494.9,834.9 499.0,817.6 503.1,839.9 507.3,868.2 511.4,770.0 515.5,809.3 519.6,851.0 523.7,826.4 527.9,821.7 532.0,854.5 536.1,836.9 540.2,832.7 544.3,783.9 548.5,771.7 552.6,725.1 556.7,737.7 560.8,799.5 564.9,838.1 569.1,850.8 573.2,858.7 577.3,862.9 581.4,862.4 585.5,840.0 589.7,850.4 593.8,870.2 597.9,756.4 602.0,857.1 606.1,781.3 610.3,859.0 614.4,791.4 618.5,849.3 622.6,839.8 626.8,868.8 630.9,797.1 635.0,857.2 639.1,777.2 643.2,694.6 647.4,855.1 651.5,827.4 655.6,827.9 659.7,740.7 663.8,840.3 668.0,808.6 672.1,840.1 676.2,852.7 680.3,841.1 684.4,849.7 688.6,855.4 692.7,694.6 696.8,812.4 700.9,726.6 705.0,845.5 709.2,848.0 713.3,867.1 717.4,761.3 721.5,871.0 725.6,855.5 729.8,762.9 733.9,759.4 738.0,844.5 742.1,785.8 746.2,694.6 750.4,848.8 754.5,820.6 758.6,812.6 762.7,865.1 766.8,843.0 771.0,839.7 775.1,808.8 779.2,852.6 783.3,741.0 787.4,855.0 791.6,774.5 795.7,860.1 799.8,830.4 803.9,856.2 808.0,843.1 812.2,821.8 816.3,766.3 820.4,845.4 824.5,849.4 828.6,849.0 832.8,810.3 836.9,757.3 841.0,841.9 845.1,822.5 849.2,832.3 853.4,828.4 857.5,860.3 861.6,814.7 865.7,694.6 869.8,844.5 874.0,859.0 878.1,795.3 882.2,859.0 886.3,850.0 890.4,830.5 894.6,855.3 898.7,769.3 902.8,794.9 906.9,831.3 911.0,828.7 915.2,806.9 919.3,855.4 923.4,849.7 927.5,836.1 931.6,743.7 935.8,806.3 939.9,858.5 944.0,843.5 948.1,864.7 952.2,801.2 956.4,793.0 960.5,694.6 964.6,801.2 968.7,778.6 972.8,865.2 977.0,822.4 981.1,845.8 985.2,725.1 989.3,836.0 993.4,811.8 997.6,805.4 1001.7,812.1 1005.8,843.8 1009.9,856.8 1014.0,807.1 1018.2,855.6 1022.3,842.3 1026.4,790.3 1030.5,860.4 1034.6,835.6 1038.8,757.4 1042.9,846.3 1047.0,829.0 1047.0,897.1 1042.9,897.9 1038.8,897.2 1034.6,898.5 1030.5,898.5 1026.4,897.6 1022.3,896.6 1018.2,898.3 1014.0,898.0 1009.9,896.5 1005.8,898.4 1001.7,898.1 997.6,896.4 993.4,898.2 989.3,897.4 985.2,897.0 981.1,896.4 977.0,896.8 972.8,896.4 968.7,896.3 964.6,896.8 960.5,898.3 956.4,897.2 952.2,898.3 948.1,898.0 944.0,897.7 939.9,898.6 935.8,897.9 931.6,898.5 927.5,898.2 923.4,897.8 919.3,898.1 915.2,897.5 911.0,898.3 906.9,897.4 902.8,896.5 898.7,896.6 894.6,896.2 890.4,896.9 886.3,897.3 882.2,896.8 878.1,897.7 874.0,897.4 869.8,897.9 865.7,896.3 861.6,895.9 857.5,896.7 853.4,897.5 849.2,896.2 845.1,897.7 841.0,897.3 836.9,896.5 832.8,898.0 828.6,897.6 824.5,896.4 820.4,897.8 816.3,898.3 812.2,898.0 808.0,898.3 803.9,897.2 799.8,897.8 795.7,897.8 791.6,898.1 787.4,897.2 783.3,896.3 779.2,896.5 775.1,898.6 771.0,898.2 766.8,898.3 762.7,897.4 758.6,897.2 754.5,897.2 750.4,896.5 746.2,897.0 742.1,897.0 738.0,897.7 733.9,897.7 729.8,897.7 725.6,896.9 721.5,896.7 717.4,897.1 713.3,897.9 709.2,896.4 705.0,896.5 700.9,898.1 696.8,898.5 692.7,897.6 688.6,897.6 684.4,898.0 680.3,897.9 676.2,897.4 672.1,898.3 668.0,898.3 663.8,897.0 659.7,898.5 655.6,898.0 651.5,897.5 647.4,896.9 643.2,897.9 639.1,896.6 635.0,898.7 630.9,898.3 626.8,897.2 622.6,897.2 618.5,896.3 614.4,896.3 610.3,896.7 606.1,898.0 602.0,898.5 597.9,897.5 593.8,898.2 589.7,898.2 585.5,897.0 581.4,898.4 577.3,897.6 573.2,896.7 569.1,898.3 564.9,897.8 560.8,897.1 556.7,897.3 552.6,897.1 548.5,897.1 544.3,896.9 540.2,897.2 536.1,898.4 532.0,898.0 527.9,896.4 523.7,896.4 519.6,898.2 515.5,898.3 511.4,897.7 507.3,897.7 503.1,896.0 499.0,896.8 494.9,895.9 490.8,896.5 486.7,896.8 482.5,897.6 478.4,898.0 474.3,898.1 470.2,897.4 466.1,898.1 461.9,897.1 457.8,896.9 453.7,896.8 449.6,896.2 445.5,897.6 441.3,896.2 437.2,896.4 433.1,896.8 429.0,897.7 424.9,896.3 420.7,897.1 416.6,897.9 412.5,896.5 408.4,896.3 404.3,897.7 400.1,896.9 396.0,898.1 391.9,896.6 387.8,895.8 383.7,896.3 379.5,896.8 375.4,896.6 371.3,897.6 367.2,897.7 363.1,896.6 358.9,897.3 354.8,896.1 350.7,896.3 346.6,896.8 342.5,898.4 338.3,898.2 334.2,897.7 330.1,898.0 326.0,898.1 321.9,898.3 317.7,897.9 313.6,897.6 309.5,897.5 305.4,896.3 301.3,897.1 297.1,897.2 293.0,896.7 288.9,897.6 284.8,896.4 280.7,897.0 276.5,896.8 272.4,896.8 268.3,898.1 264.2,898.1 260.1,898.0 255.9,897.4 251.8,898.2 247.7,896.6 243.6,898.3 239.5,897.8 235.3,898.1 231.2,896.9 227.1,897.4 223.0,896.3 218.9,897.9 214.7,898.2 210.6,896.9 206.5,896.2" fill="#eef3fc" />
<polygon points="206.5,876.0 210.6,879.8 214.7,881.7 218.9,878.3 223.0,879.6 227.1,874.3 231.2,881.5 235.3,863.4 239.5,871.9 243.6,866.8 247.7,881.1 251.8,849.3 255.9,870.2 260.1,884.5 264.2,884.8 268.3,879.9 272.4,874.5 276.5,879.9 280.7,871.8 284.8,883.5 288.9,878.6 293.0,882.9 297.1,873.5 301.3,880.4 305.4,866.0 309.5,881.8 313.6,878.9 317.7,883.5 321.9,877.7 326.0,844.9 330.1,869.0 334.2,882.6 338.3,874.8 342.5,872.3 346.6,879.4 350.7,880.9 354.8,873.7 358.9,843.5 363.1,850.8 367.2,863.7 371.3,875.4 375.4,875.9 379.5,868.8 383.7,883.1 387.8,870.8 391.9,878.5 396.0,875.7 400.1,881.0 404.3,878.3 408.4,877.2 412.5,876.1 416.6,856.5 420.7,876.1 424.9,872.5 429.0,860.2 433.1,868.6 437.2,877.4 441.3,874.5 445.5,880.4 449.6,875.9 453.7,868.5 457.8,853.3 461.9,878.3 466.1,866.4 470.2,820.2 474.3,871.6 478.4,869.4 482.5,879.8 486.7,858.8 490.8,869.9 494.9,853.1 499.0,874.3 503.1,875.0 507.3,883.1 511.4,869.4 515.5,846.3 519.6,875.8 523.7,844.9 527.9,874.4 532.0,871.2 536.1,868.5 540.2,872.3 544.3,859.4 548.5,869.9 552.6,851.3 556.7,875.6 560.8,877.4 564.9,875.8 569.1,886.3 573.2,882.5 577.3,883.8 581.4,873.4 585.5,882.0 589.7,868.0 593.8,885.3 597.9,869.2 602.0,868.0 606.1,829.7 610.3,874.2 614.4,848.2 618.5,862.9 622.6,862.4 626.8,884.1 630.9,885.2 635.0,871.0 639.1,880.7 643.2,851.7 647.4,878.5 651.5,876.6 655.6,867.0 659.7,858.3 663.8,870.1 668.0,865.3 672.1,873.0 676.2,881.7 680.3,859.7 684.4,870.0 688.6,875.6 692.7,877.3 696.8,885.9 700.9,798.9 705.0,879.1 709.2,876.9 713.3,878.8 717.4,837.6 721.5,882.9 725.6,881.9 729.8,869.1 733.9,872.3 738.0,870.0 742.1,856.7 746.2,881.5 750.4,872.2 754.5,880.8 758.6,874.6 762.7,879.4 766.8,882.6 771.0,882.5 775.1,866.8 779.2,865.4 783.3,883.0 787.4,875.4 791.6,885.6 795.7,883.4 799.8,854.0 803.9,882.3 808.0,872.9 812.2,861.1 816.3,871.8 820.4,873.2 824.5,878.6 828.6,862.3 832.8,850.4 836.9,869.7 841.0,875.4 845.1,854.1 849.2,874.3 853.4,877.0 857.5,878.9 861.6,873.2 865.7,848.5 869.8,883.5 874.0,882.7 878.1,884.5 882.2,872.6 886.3,863.9 890.4,878.5 894.6,882.3 898.7,870.2 902.8,871.8 906.9,878.7 911.0,885.3 915.2,882.6 919.3,874.7 923.4,882.9 927.5,877.4 931.6,879.1 935.8,876.6 939.9,877.6 944.0,873.8 948.1,879.1 952.2,880.5 956.4,874.4 960.5,886.1 964.6,882.4 968.7,862.6 972.8,877.2 977.0,863.5 981.1,875.8 985.2,844.4 989.3,876.7 993.4,886.6 997.6,872.6 1001.7,859.4 1005.8,871.0 1009.9,876.4 1014.0,884.3 1018.2,881.5 1022.3,873.7 1026.4,870.9 1030.5,881.6 1034.6,876.0 1038.8,870.0 1042.9,876.7 1047.0,865.0 1047.0,897.1 1042.9,897.9 1038.8,897.2 1034.6,898.5 1030.5,898.5 1026.4,897.6 1022.3,896.6 1018.2,898.3 1014.0,898.0 1009.9,896.5 1005.8,898.4 1001.7,898.1 997.6,896.4 993.4,898.2 989.3,897.4 985.2,897.0 981.1,896.4 977.0,896.8 972.8,896.4 968.7,896.3 964.6,896.8 960.5,898.3 956.4,897.2 952.2,898.3 948.1,898.0 944.0,897.7 939.9,898.6 935.8,897.9 931.6,898.5 927.5,898.2 923.4,897.8 919.3,898.1 915.2,897.5 911.0,898.3 906.9,897.4 902.8,896.5 898.7,896.6 894.6,896.2 890.4,896.9 886.3,897.3 882.2,896.8 878.1,897.7 874.0,897.4 869.8,897.9 865.7,896.3 861.6,895.9 857.5,896.7 853.4,897.5 849.2,896.2 845.1,897.7 841.0,897.3 836.9,896.5 832.8,898.0 828.6,897.6 824.5,896.4 820.4,897.8 816.3,898.3 812.2,898.0 808.0,898.3 803.9,897.2 799.8,897.8 795.7,897.8 791.6,898.1 787.4,897.2 783.3,896.3 779.2,896.5 775.1,898.6 771.0,898.2 766.8,898.3 762.7,897.4 758.6,897.2 754.5,897.2 750.4,896.5 746.2,897.0 742.1,897.0 738.0,897.7 733.9,897.7 729.8,897.7 725.6,896.9 721.5,896.7 717.4,897.1 713.3,897.9 709.2,896.4 705.0,896.5 700.9,898.1 696.8,898.5 692.7,897.6 688.6,897.6 684.4,898.0 680.3,897.9 676.2,897.4 672.1,898.3 668.0,898.3 663.8,897.0 659.7,898.5 655.6,898.0 651.5,897.5 647.4,896.9 643.2,897.9 639.1,896.6 635.0,898.7 630.9,898.3 626.8,897.2 622.6,897.2 618.5,896.3 614.4,896.3 610.3,896.7 606.1,898.0 602.0,898.5 597.9,897.5 593.8,898.2 589.7,898.2 585.5,897.0 581.4,898.4 577.3,897.6 573.2,896.7 569.1,898.3 564.9,897.8 560.8,897.1 556.7,897.3 552.6,897.1 548.5,897.1 544.3,896.9 540.2,897.2 536.1,898.4 532.0,898.0 527.9,896.4 523.7,896.4 519.6,898.2 515.5,898.3 511.4,897.7 507.3,897.7 503.1,896.0 499.0,896.8 494.9,895.9 490.8,896.5 486.7,896.8 482.5,897.6 478.4,898.0 474.3,898.1 470.2,897.4 466.1,898.1 461.9,897.1 457.8,896.9 453.7,896.8 449.6,896.2 445.5,897.6 441.3,896.2 437.2,896.4 433.1,896.8 429.0,897.7 424.9,896.3 420.7,897.1 416.6,897.9 412.5,896.5 408.4,896.3 404.3,897.7 400.1,896.9 396.0,898.1 391.9,896.6 387.8,895.8 383.7,896.3 379.5,896.8 375.4,896.6 371.3,897.6 367.2,897.7 363.1,896.6 358.9,897.3 354.8,896.1 350.7,896.3 346.6,896.8 342.5,898.4 338.3,898.2 334.2,897.7 330.1,898.0 326.0,898.1 321.9,898.3 317.7,897.9 313.6,897.6 309.5,897.5 305.4,896.3 301.3,897.1 297.1,897.2 293.0,896.7 288.9,897.6 284.8,896.4 280.7,897.0 276.5,896.8 272.4,896.8 268.3,898.1 264.2,898.1 260.1,898.0 255.9,897.4 251.8,898.2 247.7,896.6 243.6,898.3 239.5,897.8 235.3,898.1 231.2,896.9 227.1,897.4 223.0,896.3 218.9,897.9 214.7,898.2 210.6,896.9 206.5,896.2" fill="#deeafa" />
<polygon points="206.5,881.4 210.6,889.7 214.7,891.2 218.9,890.9 223.0,888.3 227.1,890.4 231.2,889.6 235.3,875.7 239.5,890.1 243.6,887.4 247.7,887.3 251.8,886.8 255.9,878.5 260.1,891.0 264.2,891.0 268.3,889.8 272.4,883.8 276.5,889.2 280.7,885.4 284.8,888.8 288.9,888.6 293.0,889.5 297.1,888.9 301.3,888.1 305.4,884.1 309.5,889.6 313.6,889.3 317.7,890.8 321.9,889.9 326.0,886.2 330.1,890.0 334.2,887.8 338.3,881.2 342.5,888.0 346.6,887.5 350.7,888.8 354.8,887.7 358.9,884.6 363.1,867.0 367.2,873.3 371.3,890.0 375.4,887.5 379.5,883.2 383.7,888.1 387.8,885.4 391.9,889.6 396.0,889.5 400.1,887.6 404.3,890.0 408.4,889.4 412.5,881.7 416.6,875.4 420.7,888.4 424.9,888.9 429.0,866.2 433.1,887.7 437.2,888.4 441.3,889.1 445.5,886.4 449.6,886.8 453.7,887.6 457.8,885.4 461.9,889.1 466.1,890.6 470.2,867.3 474.3,889.1 478.4,887.6 482.5,889.1 486.7,889.5 490.8,886.4 494.9,881.1 499.0,888.0 503.1,887.9 507.3,890.9 511.4,883.8 515.5,888.9 519.6,891.1 523.7,886.4 527.9,886.0 532.0,890.0 536.1,891.2 540.2,889.3 544.3,884.9 548.5,886.3 552.6,867.6 556.7,889.8 560.8,890.0 564.9,889.0 569.1,890.9 573.2,889.4 577.3,890.1 581.4,889.5 585.5,890.2 589.7,885.9 593.8,891.2 597.9,888.8 602.0,889.8 606.1,862.7 610.3,884.8 614.4,886.2 618.5,888.8 622.6,888.1 626.8,889.7 630.9,890.6 635.0,887.4 639.1,889.0 643.2,884.8 647.4,890.0 651.5,889.0 655.6,886.8 659.7,890.0 663.8,884.9 668.0,889.2 672.1,891.4 676.2,890.0 680.3,890.0 684.4,890.1 688.6,888.5 692.7,886.6 696.8,891.3 700.9,869.8 705.0,887.4 709.2,886.4 713.3,887.3 717.4,890.1 721.5,889.9 725.6,888.8 729.8,885.8 733.9,881.6 738.0,886.1 742.1,885.2 746.2,889.6 750.4,884.8 754.5,887.0 758.6,888.7 762.7,889.1 766.8,891.4 771.0,889.8 775.1,891.7 779.2,886.6 783.3,888.2 787.4,885.6 791.6,890.3 795.7,891.0 799.8,890.9 803.9,889.6 808.0,890.8 812.2,886.0 816.3,890.1 820.4,878.4 824.5,886.8 828.6,890.8 832.8,866.6 836.9,889.7 841.0,887.9 845.1,878.3 849.2,885.9 853.4,889.8 857.5,889.4 861.6,884.0 865.7,887.4 869.8,890.2 874.0,887.7 878.1,889.2 882.2,884.9 886.3,887.4 890.4,889.5 894.6,888.4 898.7,889.7 902.8,885.2 906.9,889.8 911.0,891.4 915.2,887.9 919.3,890.3 923.4,888.8 927.5,890.8 931.6,889.0 935.8,889.9 939.9,890.4 944.0,881.1 948.1,890.4 952.2,890.6 956.4,889.9 960.5,890.9 964.6,888.7 968.7,885.2 972.8,887.6 977.0,887.6 981.1,889.2 985.2,861.4 989.3,883.9 993.4,891.3 997.6,884.3 1001.7,878.5 1005.8,890.9 1009.9,887.8 1014.0,889.2 1018.2,890.1 1022.3,887.2 1026.4,890.1 1030.5,887.3 1034.6,891.3 1038.8,885.6 1042.9,882.4 1047.0,880.4 1047.0,897.1 1042.9,897.9 1038.8,897.2 1034.6,898.5 1030.5,898.5 1026.4,897.6 1022.3,896.6 1018.2,898.3 1014.0,898.0 1009.9,896.5 1005.8,898.4 1001.7,898.1 997.6,896.4 993.4,898.2 989.3,897.4 985.2,897.0 981.1,896.4 977.0,896.8 972.8,896.4 968.7,896.3 964.6,896.8 960.5,898.3 956.4,897.2 952.2,898.3 948.1,898.0 944.0,897.7 939.9,898.6 935.8,897.9 931.6,898.5 927.5,898.2 923.4,897.8 919.3,898.1 915.2,897.5 911.0,898.3 906.9,897.4 902.8,896.5 898.7,896.6 894.6,896.2 890.4,896.9 886.3,897.3 882.2,896.8 878.1,897.7 874.0,897.4 869.8,897.9 865.7,896.3 861.6,895.9 857.5,896.7 853.4,897.5 849.2,896.2 845.1,897.7 841.0,897.3 836.9,896.5 832.8,898.0 828.6,897.6 824.5,896.4 820.4,897.8 816.3,898.3 812.2,898.0 808.0,898.3 803.9,897.2 799.8,897.8 795.7,897.8 791.6,898.1 787.4,897.2 783.3,896.3 779.2,896.5 775.1,898.6 771.0,898.2 766.8,898.3 762.7,897.4 758.6,897.2 754.5,897.2 750.4,896.5 746.2,897.0 742.1,897.0 738.0,897.7 733.9,897.7 729.8,897.7 725.6,896.9 721.5,896.7 717.4,897.1 713.3,897.9 709.2,896.4 705.0,896.5 700.9,898.1 696.8,898.5 692.7,897.6 688.6,897.6 684.4,898.0 680.3,897.9 676.2,897.4 672.1,898.3 668.0,898.3 663.8,897.0 659.7,898.5 655.6,898.0 651.5,897.5 647.4,896.9 643.2,897.9 639.1,896.6 635.0,898.7 630.9,898.3 626.8,897.2 622.6,897.2 618.5,896.3 614.4,896.3 610.3,896.7 606.1,898.0 602.0,898.5 597.9,897.5 593.8,898.2 589.7,898.2 585.5,897.0 581.4,898.4 577.3,897.6 573.2,896.7 569.1,898.3 564.9,897.8 560.8,897.1 556.7,897.3 552.6,897.1 548.5,897.1 544.3,896.9 540.2,897.2 536.1,898.4 532.0,898.0 527.9,896.4 523.7,896.4 519.6,898.2 515.5,898.3 511.4,897.7 507.3,897.7 503.1,896.0 499.0,896.8 494.9,895.9 490.8,896.5 486.7,896.8 482.5,897.6 478.4,898.0 474.3,898.1 470.2,897.4 466.1,898.1 461.9,897.1 457.8,896.9 453.7,896.8 449.6,896.2 445.5,897.6 441.3,896.2 437.2,896.4 433.1,896.8 429.0,897.7 424.9,896.3 420.7,897.1 416.6,897.9 412.5,896.5 408.4,896.3 404.3,897.7 400.1,896.9 396.0,898.1 391.9,896.6 387.8,895.8 383.7,896.3 379.5,896.8 375.4,896.6 371.3,897.6 367.2,897.7 363.1,896.6 358.9,897.3 354.8,896.1 350.7,896.3 346.6,896.8 342.5,898.4 338.3,898.2 334.2,897.7 330.1,898.0 326.0,898.1 321.9,898.3 317.7,897.9 313.6,897.6 309.5,897.5 305.4,896.3 301.3,897.1 297.1,897.2 293.0,896.7 288.9,897.6 284.8,896.4 280.7,897.0 276.5,896.8 272.4,896.8 268.3,898.1 264.2,898.1 260.1,898.0 255.9,897.4 251.8,898.2 247.7,896.6 243.6,898.3 239.5,897.8 235.3,898.1 231.2,896.9 227.1,897.4 223.0,896.3 218.9,897.9 214.7,898.2 210.6,896.9 206.5,896.2" fill="#b0cbf2" />
<polyline points="206.5,893.1 210.6,893.7 214.7,895.1 218.9,894.7 223.0,893.1 227.1,894.2 231.2,893.8 235.3,894.9 239.5,894.6 243.6,895.2 247.7,893.4 251.8,895.0 255.9,894.2 260.1,894.8 264.2,895.0 268.3,894.9 272.4,893.6 276.5,893.6 280.7,893.8 284.8,893.2 288.9,894.4 293.0,893.5 297.1,894.0 301.3,894.0 305.4,893.1 309.5,894.3 313.6,894.4 317.7,894.7 321.9,895.2 326.0,895.0 330.1,894.9 334.2,894.5 338.3,895.0 342.5,895.2 346.6,893.6 350.7,893.1 354.8,892.9 358.9,894.2 363.1,893.4 367.2,894.6 371.3,894.4 375.4,893.4 379.5,893.6 383.7,893.1 387.8,892.7 391.9,893.4 396.0,894.9 400.1,893.7 404.3,894.5 408.4,893.1 412.5,893.3 416.6,894.8 420.7,894.0 424.9,893.1 429.0,894.6 433.1,893.6 437.2,893.2 441.3,893.0 445.5,894.4 449.6,893.0 453.7,893.7 457.8,893.7 461.9,893.9 466.1,895.0 470.2,894.2 474.3,894.9 478.4,894.9 482.5,894.5 486.7,893.6 490.8,893.3 494.9,892.7 499.0,893.6 503.1,892.9 507.3,894.5 511.4,894.6 515.5,895.1 519.6,895.0 523.7,893.2 527.9,893.2 532.0,894.9 536.1,895.2 540.2,894.0 544.3,893.8 548.5,894.0 552.6,893.9 556.7,894.2 560.8,893.9 564.9,894.6 569.1,895.1 573.2,893.5 577.3,894.4 581.4,895.2 585.5,893.9 589.7,895.0 593.8,895.1 597.9,894.3 602.0,895.3 606.1,894.9 610.3,893.5 614.4,893.1 618.5,893.1 622.6,894.0 626.8,894.0 630.9,895.1 635.0,895.5 639.1,893.5 643.2,894.7 647.4,893.7 651.5,894.3 655.6,894.9 659.7,895.3 663.8,893.8 668.0,895.1 672.1,895.2 676.2,894.3 680.3,894.7 684.4,894.8 688.6,894.4 692.7,894.4 696.8,895.3 700.9,894.9 705.0,893.4 709.2,893.2 713.3,894.7 717.4,894.0 721.5,893.6 725.6,893.7 729.8,894.6 733.9,894.5 738.0,894.6 742.1,893.8 746.2,893.8 750.4,893.3 754.5,894.0 758.6,894.0 762.7,894.3 766.8,895.2 771.0,895.0 775.1,895.4 779.2,893.3 783.3,893.2 787.4,894.0 791.6,894.9 795.7,894.7 799.8,894.6 803.9,894.0 808.0,895.1 812.2,894.8 816.3,895.1 820.4,894.6 824.5,893.3 828.6,894.5 832.8,894.8 836.9,893.4 841.0,894.2 845.1,894.5 849.2,893.1 853.4,894.3 857.5,893.5 861.6,892.7 865.7,893.1 869.8,894.7 874.0,894.2 878.1,894.5 882.2,893.6 886.3,894.1 890.4,893.7 894.6,893.0 898.7,893.4 902.8,893.3 906.9,894.2 911.0,895.1 915.2,894.3 919.3,895.0 923.4,894.6 927.5,895.0 931.6,895.4 935.8,894.7 939.9,895.4 944.0,894.5 948.1,894.8 952.2,895.2 956.4,894.0 960.5,895.2 964.6,893.7 968.7,893.1 972.8,893.2 977.0,893.6 981.1,893.2 985.2,893.8 989.3,894.2 993.4,895.0 997.6,893.3 1001.7,895.0 1005.8,895.3 1009.9,893.3 1014.0,894.8 1018.2,895.1 1022.3,893.4 1026.4,894.4 1030.5,895.3 1034.6,895.3 1038.8,894.0 1042.9,894.8 1047.0,894.0" fill="none" stroke="#5b94e3" stroke-width="3.8" stroke-linejoin="round" />
<line x1="199.0" y1="1021.0" x2="1049.0" y2="1021.0" stroke="#cacaca" stroke-width="2"/>
<text x="187.0" y="1030.0" font-size="23" fill="#3b3e44" stroke="#3b3e44" stroke-width="0.35" letter-spacing="-0.4" text-anchor="end" font-weight="normal" >0</text>
<line x1="199.0" y1="930.5" x2="1049.0" y2="930.5" stroke="#cacaca" stroke-width="2"/>
<text x="187.0" y="939.5" font-size="23" fill="#3b3e44" stroke="#3b3e44" stroke-width="0.35" letter-spacing="-0.4" text-anchor="end" font-weight="normal" >10</text>
<line x1="199.0" y1="840.0" x2="1049.0" y2="840.0" stroke="#cacaca" stroke-width="2"/>
<text x="187.0" y="849.0" font-size="23" fill="#3b3e44" stroke="#3b3e44" stroke-width="0.35" letter-spacing="-0.4" text-anchor="end" font-weight="normal" >20</text>
<line x1="199.0" y1="749.0" x2="1049.0" y2="749.0" stroke="#cacaca" stroke-width="2"/>
<text x="187.0" y="758.0" font-size="23" fill="#3b3e44" stroke="#3b3e44" stroke-width="0.35" letter-spacing="-0.4" text-anchor="end" font-weight="normal" >30</text>
<line x1="223.9" y1="1021.0" x2="223.9" y2="1032.0" stroke="#cacaca" stroke-width="2"/>
<text x="223.9" y="1054.5" font-size="23" fill="#3b3e44" stroke="#3b3e44" stroke-width="0.35" letter-spacing="-0.4" text-anchor="middle" font-weight="normal" >07:00</text>
<line x1="330.2" y1="1021.0" x2="330.2" y2="1032.0" stroke="#cacaca" stroke-width="2"/>
<text x="330.2" y="1054.5" font-size="23" fill="#3b3e44" stroke="#3b3e44" stroke-width="0.35" letter-spacing="-0.4" text-anchor="middle" font-weight="normal" >08:00</text>
<line x1="436.5" y1="1021.0" x2="436.5" y2="1032.0" stroke="#cacaca" stroke-width="2"/>
<text x="436.5" y="1054.5" font-size="23" fill="#3b3e44" stroke="#3b3e44" stroke-width="0.35" letter-spacing="-0.4" text-anchor="middle" font-weight="normal" >09:00</text>
<line x1="542.8" y1="1021.0" x2="542.8" y2="1032.0" stroke="#cacaca" stroke-width="2"/>
<text x="542.8" y="1054.5" font-size="23" fill="#3b3e44" stroke="#3b3e44" stroke-width="0.35" letter-spacing="-0.4" text-anchor="middle" font-weight="normal" >10:00</text>
<line x1="649.1" y1="1021.0" x2="649.1" y2="1032.0" stroke="#cacaca" stroke-width="2"/>
<text x="649.1" y="1054.5" font-size="23" fill="#3b3e44" stroke="#3b3e44" stroke-width="0.35" letter-spacing="-0.4" text-anchor="middle" font-weight="normal" >11:00</text>
<line x1="755.4" y1="1021.0" x2="755.4" y2="1032.0" stroke="#cacaca" stroke-width="2"/>
<text x="755.4" y="1054.5" font-size="23" fill="#3b3e44" stroke="#3b3e44" stroke-width="0.35" letter-spacing="-0.4" text-anchor="middle" font-weight="normal" >12:00</text>
<line x1="861.7" y1="1021.0" x2="861.7" y2="1032.0" stroke="#cacaca" stroke-width="2"/>
<text x="861.7" y="1054.5" font-size="23" fill="#3b3e44" stroke="#3b3e44" stroke-width="0.35" letter-spacing="-0.4" text-anchor="middle" font-weight="normal" >13:00</text>
<line x1="968.0" y1="1021.0" x2="968.0" y2="1032.0" stroke="#cacaca" stroke-width="2"/>
<text x="968.0" y="1054.5" font-size="23" fill="#3b3e44" stroke="#3b3e44" stroke-width="0.35" letter-spacing="-0.4" text-anchor="middle" font-weight="normal" >14:00</text>
<polygon points="1042.0,1035.5 1050.0,1021.5 1058.0,1035.5" fill="#5a93e4"/>
<text x="177.0" y="1137.0" font-size="32.5" fill="#35383e" stroke="#35383e" stroke-width="0.75" letter-spacing="-0.75">Branch SD-WAN 1 - Underlay - ISP #2<tspan dx="11" font-size="24" stroke="none" fill="#9a9ba0" letter-spacing="0">(Network Response Time)</tspan></text>
<polygon points="206.5,1273.3 210.6,1334.2 214.7,1196.8 218.9,1306.4 223.0,1359.1 227.1,1379.0 231.2,1304.7 235.3,1240.4 239.5,1232.3 243.6,1343.2 247.7,1344.8 251.8,1389.8 255.9,1388.5 260.1,1389.9 264.2,1302.9 268.3,1339.3 272.4,1402.1 276.5,1182.7 280.7,1388.8 284.8,1383.0 288.9,1287.8 293.0,1210.8 297.1,1353.0 301.3,1314.6 305.4,1326.8 309.5,1203.3 313.6,1172.7 317.7,1308.8 321.9,1397.4 326.0,1381.4 330.1,1244.9 334.2,1359.2 338.3,1393.5 342.5,1306.8 346.6,1338.3 350.7,1366.3 354.8,1398.6 358.9,1222.8 363.1,1373.2 367.2,1383.5 371.3,1322.8 375.4,1291.4 379.5,1306.3 383.7,1228.4 387.8,1395.3 391.9,1352.3 396.0,1355.6 400.1,1391.2 404.3,1392.6 408.4,1305.9 412.5,1172.7 416.6,1325.8 420.7,1363.1 424.9,1323.9 429.0,1394.4 433.1,1388.2 437.2,1371.8 441.3,1348.1 445.5,1326.0 449.6,1367.1 453.7,1289.8 457.8,1388.0 461.9,1366.9 466.1,1374.1 470.2,1187.6 474.3,1382.7 478.4,1333.2 482.5,1277.8 486.7,1398.5 490.8,1255.0 494.9,1334.6 499.0,1189.8 503.1,1259.3 507.3,1356.7 511.4,1365.0 515.5,1302.8 519.6,1255.6 523.7,1399.0 527.9,1237.8 532.0,1373.3 536.1,1355.2 540.2,1391.6 544.3,1380.4 548.5,1347.5 552.6,1172.7 556.7,1330.0 560.8,1326.5 564.9,1278.4 569.1,1360.4 573.2,1376.1 577.3,1363.6 581.4,1370.7 585.5,1315.9 589.7,1365.8 593.8,1286.1 597.9,1172.7 602.0,1382.6 606.1,1243.5 610.3,1381.0 614.4,1255.6 618.5,1397.6 622.6,1293.6 626.8,1323.8 630.9,1351.7 635.0,1369.6 639.1,1400.6 643.2,1346.4 647.4,1362.6 651.5,1359.9 655.6,1362.9 659.7,1358.6 663.8,1365.7 668.0,1367.8 672.1,1273.5 676.2,1316.6 680.3,1381.6 684.4,1371.1 688.6,1371.8 692.7,1236.2 696.8,1378.1 700.9,1376.0 705.0,1351.9 709.2,1317.0 713.3,1192.6 717.4,1385.7 721.5,1212.4 725.6,1291.3 729.8,1393.8 733.9,1227.5 738.0,1388.7 742.1,1270.5 746.2,1350.1 750.4,1379.7 754.5,1397.2 758.6,1322.3 762.7,1357.4 766.8,1381.3 771.0,1272.9 775.1,1375.2 779.2,1181.0 783.3,1386.6 787.4,1280.4 791.6,1172.7 795.7,1378.1 799.8,1388.9 803.9,1352.1 808.0,1237.2 812.2,1337.0 816.3,1333.4 820.4,1362.4 824.5,1379.4 828.6,1210.9 832.8,1333.8 836.9,1381.9 841.0,1261.2 845.1,1172.7 849.2,1172.7 853.4,1331.0 857.5,1172.7 861.6,1391.7 865.7,1360.4 869.8,1342.7 874.0,1297.5 878.1,1368.9 882.2,1390.7 886.3,1374.7 890.4,1289.3 894.6,1296.8 898.7,1373.0 902.8,1382.2 906.9,1358.8 911.0,1306.3 915.2,1374.6 919.3,1371.7 923.4,1261.3 927.5,1387.3 931.6,1403.1 935.8,1275.8 939.9,1399.7 944.0,1290.5 948.1,1322.4 952.2,1376.5 956.4,1318.5 960.5,1289.3 964.6,1319.1 968.7,1286.6 972.8,1189.8 977.0,1367.0 981.1,1214.0 985.2,1389.9 989.3,1284.7 993.4,1356.5 997.6,1331.0 1001.7,1319.3 1005.8,1324.8 1009.9,1346.8 1014.0,1280.4 1018.2,1272.2 1022.3,1353.8 1026.4,1252.9 1030.5,1343.5 1034.6,1172.7 1038.8,1318.0 1042.9,1321.0 1047.0,1383.9 1047.0,1439.5 1042.9,1440.6 1038.8,1441.6 1034.6,1439.5 1030.5,1440.0 1026.4,1441.2 1022.3,1440.5 1018.2,1442.0 1014.0,1441.0 1009.9,1441.3 1005.8,1441.2 1001.7,1440.3 997.6,1442.0 993.4,1441.8 989.3,1441.2 985.2,1440.1 981.1,1441.3 977.0,1440.3 972.8,1441.4 968.7,1440.2 964.6,1441.1 960.5,1441.0 956.4,1439.8 952.2,1441.6 948.1,1441.4 944.0,1440.4 939.9,1441.3 935.8,1441.2 931.6,1438.8 927.5,1439.4 923.4,1439.2 919.3,1439.0 915.2,1440.2 911.0,1440.8 906.9,1438.6 902.8,1439.0 898.7,1440.0 894.6,1440.1 890.4,1438.9 886.3,1440.3 882.2,1441.4 878.1,1439.6 874.0,1440.6 869.8,1440.2 865.7,1439.4 861.6,1441.6 857.5,1441.8 853.4,1440.1 849.2,1440.2 845.1,1442.1 841.0,1441.8 836.9,1440.5 832.8,1440.3 828.6,1439.1 824.5,1438.8 820.4,1440.0 816.3,1441.0 812.2,1439.4 808.0,1440.9 803.9,1440.7 799.8,1441.1 795.7,1439.6 791.6,1440.0 787.4,1439.5 783.3,1441.3 779.2,1440.5 775.1,1440.2 771.0,1441.7 766.8,1441.0 762.7,1439.9 758.6,1439.9 754.5,1440.0 750.4,1440.3 746.2,1439.5 742.1,1440.8 738.0,1441.7 733.9,1440.3 729.8,1441.2 725.6,1439.3 721.5,1439.9 717.4,1439.7 713.3,1438.3 709.2,1438.6 705.0,1439.0 700.9,1439.9 696.8,1438.8 692.7,1439.1 688.6,1439.0 684.4,1439.4 680.3,1441.5 676.2,1440.9 672.1,1439.0 668.0,1439.4 663.8,1441.0 659.7,1439.1 655.6,1439.4 651.5,1439.7 647.4,1441.1 643.2,1441.0 639.1,1440.8 635.0,1441.0 630.9,1440.4 626.8,1439.8 622.6,1439.2 618.5,1441.0 614.4,1441.5 610.3,1441.9 606.1,1440.5 602.0,1439.1 597.9,1440.7 593.8,1440.2 589.7,1441.1 585.5,1439.6 581.4,1439.6 577.3,1440.1 573.2,1440.1 569.1,1439.7 564.9,1440.2 560.8,1439.3 556.7,1440.5 552.6,1439.1 548.5,1440.4 544.3,1441.6 540.2,1441.8 536.1,1440.8 532.0,1438.6 527.9,1439.4 523.7,1439.4 519.6,1440.1 515.5,1440.5 511.4,1440.8 507.3,1440.5 503.1,1441.1 499.0,1441.1 494.9,1440.9 490.8,1440.7 486.7,1439.7 482.5,1440.3 478.4,1441.4 474.3,1441.1 470.2,1441.0 466.1,1440.7 461.9,1441.8 457.8,1442.0 453.7,1441.1 449.6,1440.7 445.5,1440.3 441.3,1439.4 437.2,1441.5 433.1,1439.2 429.0,1439.5 424.9,1439.8 420.7,1439.0 416.6,1439.1 412.5,1440.8 408.4,1438.9 404.3,1440.2 400.1,1440.2 396.0,1439.2 391.9,1441.1 387.8,1439.2 383.7,1439.2 379.5,1440.4 375.4,1439.7 371.3,1440.8 367.2,1439.8 363.1,1439.7 358.9,1441.5 354.8,1440.1 350.7,1441.4 346.6,1440.2 342.5,1440.1 338.3,1440.4 334.2,1441.5 330.1,1441.3 326.0,1439.8 321.9,1439.8 317.7,1440.3 313.6,1440.0 309.5,1439.9 305.4,1440.4 301.3,1441.9 297.1,1441.1 293.0,1440.1 288.9,1441.6 284.8,1439.8 280.7,1439.4 276.5,1440.8 272.4,1441.2 268.3,1440.8 264.2,1442.2 260.1,1441.9 255.9,1440.8 251.8,1440.9 247.7,1441.9 243.6,1440.6 239.5,1441.5 235.3,1441.7 231.2,1441.9 227.1,1440.5 223.0,1440.0 218.9,1439.5 214.7,1440.9 210.6,1439.9 206.5,1439.9" fill="#eef3fc" />
<polygon points="206.5,1403.3 210.6,1422.3 214.7,1417.7 218.9,1399.1 223.0,1421.3 227.1,1397.6 231.2,1402.7 235.3,1414.2 239.5,1419.6 243.6,1424.8 247.7,1377.0 251.8,1419.2 255.9,1423.5 260.1,1417.9 264.2,1394.9 268.3,1367.5 272.4,1418.0 276.5,1413.5 280.7,1407.5 284.8,1402.9 288.9,1360.0 293.0,1411.5 297.1,1374.3 301.3,1415.5 305.4,1357.5 309.5,1406.0 313.6,1411.4 317.7,1421.5 321.9,1422.1 326.0,1400.8 330.1,1420.6 334.2,1405.9 338.3,1411.8 342.5,1389.2 346.6,1418.7 350.7,1417.2 354.8,1416.8 358.9,1396.0 363.1,1406.3 367.2,1403.1 371.3,1420.3 375.4,1405.7 379.5,1392.0 383.7,1382.3 387.8,1409.8 391.9,1419.5 396.0,1410.1 400.1,1414.2 404.3,1414.5 408.4,1374.4 412.5,1414.3 416.6,1420.6 420.7,1406.9 424.9,1364.9 429.0,1416.4 433.1,1415.2 437.2,1410.7 441.3,1421.0 445.5,1413.2 449.6,1403.4 453.7,1405.9 457.8,1419.8 461.9,1399.3 466.1,1414.4 470.2,1398.0 474.3,1412.1 478.4,1411.6 482.5,1415.6 486.7,1419.1 490.8,1401.4 494.9,1409.5 499.0,1405.8 503.1,1390.5 507.3,1420.6 511.4,1409.5 515.5,1416.9 519.6,1412.7 523.7,1420.4 527.9,1399.2 532.0,1399.3 536.1,1404.3 540.2,1421.7 544.3,1419.9 548.5,1418.6 552.6,1403.1 556.7,1411.2 560.8,1420.1 564.9,1412.8 569.1,1424.2 573.2,1403.6 577.3,1386.1 581.4,1385.1 585.5,1412.7 589.7,1416.0 593.8,1378.4 597.9,1402.2 602.0,1420.3 606.1,1397.9 610.3,1419.2 614.4,1407.2 618.5,1418.5 622.6,1400.8 626.8,1384.8 630.9,1419.7 635.0,1406.3 639.1,1422.8 643.2,1414.2 647.4,1416.1 651.5,1398.2 655.6,1421.6 659.7,1412.0 663.8,1423.2 668.0,1421.8 672.1,1422.5 676.2,1390.4 680.3,1409.5 684.4,1416.6 688.6,1418.5 692.7,1413.0 696.8,1397.5 700.9,1391.2 705.0,1411.2 709.2,1416.7 713.3,1403.8 717.4,1422.1 721.5,1414.6 725.6,1414.1 729.8,1419.4 733.9,1420.3 738.0,1415.8 742.1,1419.4 746.2,1401.2 750.4,1416.6 754.5,1420.4 758.6,1405.2 762.7,1403.0 766.8,1414.8 771.0,1403.1 775.1,1410.2 779.2,1417.1 783.3,1418.3 787.4,1347.3 791.6,1400.5 795.7,1411.9 799.8,1409.5 803.9,1419.3 808.0,1403.2 812.2,1397.4 816.3,1421.6 820.4,1416.6 824.5,1417.9 828.6,1421.3 832.8,1419.1 836.9,1415.7 841.0,1403.4 845.1,1421.1 849.2,1387.4 853.4,1416.3 857.5,1421.5 861.6,1411.5 865.7,1398.8 869.8,1404.2 874.0,1404.6 878.1,1411.7 882.2,1410.8 886.3,1420.5 890.4,1414.3 894.6,1405.7 898.7,1407.1 902.8,1417.6 906.9,1422.1 911.0,1423.8 915.2,1396.6 919.3,1414.6 923.4,1413.1 927.5,1412.8 931.6,1423.4 935.8,1409.3 939.9,1418.2 944.0,1410.8 948.1,1403.4 952.2,1397.5 956.4,1416.2 960.5,1410.3 964.6,1374.8 968.7,1409.6 972.8,1354.2 977.0,1388.0 981.1,1417.7 985.2,1413.4 989.3,1425.3 993.4,1384.6 997.6,1423.0 1001.7,1387.1 1005.8,1423.9 1009.9,1385.7 1014.0,1349.8 1018.2,1421.3 1022.3,1414.9 1026.4,1406.2 1030.5,1421.8 1034.6,1374.2 1038.8,1419.4 1042.9,1412.9 1047.0,1400.7 1047.0,1439.5 1042.9,1440.6 1038.8,1441.6 1034.6,1439.5 1030.5,1440.0 1026.4,1441.2 1022.3,1440.5 1018.2,1442.0 1014.0,1441.0 1009.9,1441.3 1005.8,1441.2 1001.7,1440.3 997.6,1442.0 993.4,1441.8 989.3,1441.2 985.2,1440.1 981.1,1441.3 977.0,1440.3 972.8,1441.4 968.7,1440.2 964.6,1441.1 960.5,1441.0 956.4,1439.8 952.2,1441.6 948.1,1441.4 944.0,1440.4 939.9,1441.3 935.8,1441.2 931.6,1438.8 927.5,1439.4 923.4,1439.2 919.3,1439.0 915.2,1440.2 911.0,1440.8 906.9,1438.6 902.8,1439.0 898.7,1440.0 894.6,1440.1 890.4,1438.9 886.3,1440.3 882.2,1441.4 878.1,1439.6 874.0,1440.6 869.8,1440.2 865.7,1439.4 861.6,1441.6 857.5,1441.8 853.4,1440.1 849.2,1440.2 845.1,1442.1 841.0,1441.8 836.9,1440.5 832.8,1440.3 828.6,1439.1 824.5,1438.8 820.4,1440.0 816.3,1441.0 812.2,1439.4 808.0,1440.9 803.9,1440.7 799.8,1441.1 795.7,1439.6 791.6,1440.0 787.4,1439.5 783.3,1441.3 779.2,1440.5 775.1,1440.2 771.0,1441.7 766.8,1441.0 762.7,1439.9 758.6,1439.9 754.5,1440.0 750.4,1440.3 746.2,1439.5 742.1,1440.8 738.0,1441.7 733.9,1440.3 729.8,1441.2 725.6,1439.3 721.5,1439.9 717.4,1439.7 713.3,1438.3 709.2,1438.6 705.0,1439.0 700.9,1439.9 696.8,1438.8 692.7,1439.1 688.6,1439.0 684.4,1439.4 680.3,1441.5 676.2,1440.9 672.1,1439.0 668.0,1439.4 663.8,1441.0 659.7,1439.1 655.6,1439.4 651.5,1439.7 647.4,1441.1 643.2,1441.0 639.1,1440.8 635.0,1441.0 630.9,1440.4 626.8,1439.8 622.6,1439.2 618.5,1441.0 614.4,1441.5 610.3,1441.9 606.1,1440.5 602.0,1439.1 597.9,1440.7 593.8,1440.2 589.7,1441.1 585.5,1439.6 581.4,1439.6 577.3,1440.1 573.2,1440.1 569.1,1439.7 564.9,1440.2 560.8,1439.3 556.7,1440.5 552.6,1439.1 548.5,1440.4 544.3,1441.6 540.2,1441.8 536.1,1440.8 532.0,1438.6 527.9,1439.4 523.7,1439.4 519.6,1440.1 515.5,1440.5 511.4,1440.8 507.3,1440.5 503.1,1441.1 499.0,1441.1 494.9,1440.9 490.8,1440.7 486.7,1439.7 482.5,1440.3 478.4,1441.4 474.3,1441.1 470.2,1441.0 466.1,1440.7 461.9,1441.8 457.8,1442.0 453.7,1441.1 449.6,1440.7 445.5,1440.3 441.3,1439.4 437.2,1441.5 433.1,1439.2 429.0,1439.5 424.9,1439.8 420.7,1439.0 416.6,1439.1 412.5,1440.8 408.4,1438.9 404.3,1440.2 400.1,1440.2 396.0,1439.2 391.9,1441.1 387.8,1439.2 383.7,1439.2 379.5,1440.4 375.4,1439.7 371.3,1440.8 367.2,1439.8 363.1,1439.7 358.9,1441.5 354.8,1440.1 350.7,1441.4 346.6,1440.2 342.5,1440.1 338.3,1440.4 334.2,1441.5 330.1,1441.3 326.0,1439.8 321.9,1439.8 317.7,1440.3 313.6,1440.0 309.5,1439.9 305.4,1440.4 301.3,1441.9 297.1,1441.1 293.0,1440.1 288.9,1441.6 284.8,1439.8 280.7,1439.4 276.5,1440.8 272.4,1441.2 268.3,1440.8 264.2,1442.2 260.1,1441.9 255.9,1440.8 251.8,1440.9 247.7,1441.9 243.6,1440.6 239.5,1441.5 235.3,1441.7 231.2,1441.9 227.1,1440.5 223.0,1440.0 218.9,1439.5 214.7,1440.9 210.6,1439.9 206.5,1439.9" fill="#deeafa" />
<polygon points="206.5,1430.7 210.6,1429.4 214.7,1430.5 218.9,1410.2 223.0,1427.6 227.1,1431.7 231.2,1431.6 235.3,1428.5 239.5,1428.2 243.6,1431.8 247.7,1391.1 251.8,1429.1 255.9,1429.4 260.1,1428.2 264.2,1427.4 268.3,1386.5 272.4,1432.3 276.5,1430.6 280.7,1421.1 284.8,1418.7 288.9,1399.1 293.0,1430.6 297.1,1391.6 301.3,1421.4 305.4,1398.5 309.5,1430.9 313.6,1429.1 317.7,1429.4 321.9,1430.0 326.0,1424.4 330.1,1429.9 334.2,1430.3 338.3,1428.0 342.5,1430.4 346.6,1431.2 350.7,1426.0 354.8,1430.8 358.9,1425.7 363.1,1430.8 367.2,1427.3 371.3,1431.2 375.4,1424.1 379.5,1423.7 383.7,1425.2 387.8,1426.0 391.9,1428.0 396.0,1428.0 400.1,1430.8 404.3,1425.9 408.4,1385.0 412.5,1430.8 416.6,1427.3 420.7,1429.1 424.9,1428.8 429.0,1428.6 433.1,1428.2 437.2,1429.6 441.3,1429.0 445.5,1425.4 449.6,1415.6 453.7,1430.9 457.8,1427.1 461.9,1415.1 466.1,1426.7 470.2,1431.3 474.3,1421.5 478.4,1431.3 482.5,1424.3 486.7,1430.4 490.8,1427.4 494.9,1429.6 499.0,1429.9 503.1,1431.2 507.3,1426.9 511.4,1428.1 515.5,1427.6 519.6,1423.7 523.7,1427.1 527.9,1429.3 532.0,1413.8 536.1,1430.9 540.2,1429.0 544.3,1425.8 548.5,1430.8 552.6,1430.0 556.7,1424.6 560.8,1428.2 564.9,1431.0 569.1,1430.4 573.2,1431.2 577.3,1427.1 581.4,1426.5 585.5,1427.7 589.7,1431.2 593.8,1431.0 597.9,1430.6 602.0,1428.5 606.1,1430.8 610.3,1432.0 614.4,1429.6 618.5,1428.8 622.6,1406.8 626.8,1421.2 630.9,1431.4 635.0,1425.4 639.1,1431.6 643.2,1431.1 647.4,1431.2 651.5,1427.0 655.6,1430.2 659.7,1422.9 663.8,1430.4 668.0,1429.7 672.1,1429.4 676.2,1428.2 680.3,1426.4 684.4,1424.4 688.6,1426.3 692.7,1423.9 696.8,1426.9 700.9,1425.4 705.0,1428.3 709.2,1423.9 713.3,1425.1 717.4,1430.1 721.5,1430.9 725.6,1427.5 729.8,1429.4 733.9,1426.5 738.0,1432.0 742.1,1425.6 746.2,1429.1 750.4,1428.3 754.5,1430.0 758.6,1429.8 762.7,1431.0 766.8,1430.0 771.0,1428.7 775.1,1430.0 779.2,1430.5 783.3,1426.1 787.4,1428.8 791.6,1410.1 795.7,1427.0 799.8,1429.4 803.9,1431.5 808.0,1424.9 812.2,1406.5 816.3,1427.5 820.4,1426.0 824.5,1427.2 828.6,1429.1 832.8,1426.5 836.9,1428.3 841.0,1425.0 845.1,1433.0 849.2,1425.9 853.4,1428.1 857.5,1429.0 861.6,1429.5 865.7,1429.4 869.8,1420.4 874.0,1430.8 878.1,1427.0 882.2,1428.7 886.3,1430.3 890.4,1428.4 894.6,1429.7 898.7,1429.1 902.8,1429.0 906.9,1428.4 911.0,1431.9 915.2,1422.0 919.3,1429.7 923.4,1428.8 927.5,1424.3 931.6,1429.9 935.8,1419.0 939.9,1430.7 944.0,1429.7 948.1,1422.2 952.2,1404.4 956.4,1423.9 960.5,1416.2 964.6,1418.6 968.7,1431.3 972.8,1405.5 977.0,1430.9 981.1,1427.7 985.2,1429.1 989.3,1432.2 993.4,1392.3 997.6,1430.6 1001.7,1396.8 1005.8,1430.8 1009.9,1403.4 1014.0,1426.2 1018.2,1430.3 1022.3,1431.4 1026.4,1430.1 1030.5,1430.0 1034.6,1426.3 1038.8,1432.7 1042.9,1425.9 1047.0,1408.3 1047.0,1439.5 1042.9,1440.6 1038.8,1441.6 1034.6,1439.5 1030.5,1440.0 1026.4,1441.2 1022.3,1440.5 1018.2,1442.0 1014.0,1441.0 1009.9,1441.3 1005.8,1441.2 1001.7,1440.3 997.6,1442.0 993.4,1441.8 989.3,1441.2 985.2,1440.1 981.1,1441.3 977.0,1440.3 972.8,1441.4 968.7,1440.2 964.6,1441.1 960.5,1441.0 956.4,1439.8 952.2,1441.6 948.1,1441.4 944.0,1440.4 939.9,1441.3 935.8,1441.2 931.6,1438.8 927.5,1439.4 923.4,1439.2 919.3,1439.0 915.2,1440.2 911.0,1440.8 906.9,1438.6 902.8,1439.0 898.7,1440.0 894.6,1440.1 890.4,1438.9 886.3,1440.3 882.2,1441.4 878.1,1439.6 874.0,1440.6 869.8,1440.2 865.7,1439.4 861.6,1441.6 857.5,1441.8 853.4,1440.1 849.2,1440.2 845.1,1442.1 841.0,1441.8 836.9,1440.5 832.8,1440.3 828.6,1439.1 824.5,1438.8 820.4,1440.0 816.3,1441.0 812.2,1439.4 808.0,1440.9 803.9,1440.7 799.8,1441.1 795.7,1439.6 791.6,1440.0 787.4,1439.5 783.3,1441.3 779.2,1440.5 775.1,1440.2 771.0,1441.7 766.8,1441.0 762.7,1439.9 758.6,1439.9 754.5,1440.0 750.4,1440.3 746.2,1439.5 742.1,1440.8 738.0,1441.7 733.9,1440.3 729.8,1441.2 725.6,1439.3 721.5,1439.9 717.4,1439.7 713.3,1438.3 709.2,1438.6 705.0,1439.0 700.9,1439.9 696.8,1438.8 692.7,1439.1 688.6,1439.0 684.4,1439.4 680.3,1441.5 676.2,1440.9 672.1,1439.0 668.0,1439.4 663.8,1441.0 659.7,1439.1 655.6,1439.4 651.5,1439.7 647.4,1441.1 643.2,1441.0 639.1,1440.8 635.0,1441.0 630.9,1440.4 626.8,1439.8 622.6,1439.2 618.5,1441.0 614.4,1441.5 610.3,1441.9 606.1,1440.5 602.0,1439.1 597.9,1440.7 593.8,1440.2 589.7,1441.1 585.5,1439.6 581.4,1439.6 577.3,1440.1 573.2,1440.1 569.1,1439.7 564.9,1440.2 560.8,1439.3 556.7,1440.5 552.6,1439.1 548.5,1440.4 544.3,1441.6 540.2,1441.8 536.1,1440.8 532.0,1438.6 527.9,1439.4 523.7,1439.4 519.6,1440.1 515.5,1440.5 511.4,1440.8 507.3,1440.5 503.1,1441.1 499.0,1441.1 494.9,1440.9 490.8,1440.7 486.7,1439.7 482.5,1440.3 478.4,1441.4 474.3,1441.1 470.2,1441.0 466.1,1440.7 461.9,1441.8 457.8,1442.0 453.7,1441.1 449.6,1440.7 445.5,1440.3 441.3,1439.4 437.2,1441.5 433.1,1439.2 429.0,1439.5 424.9,1439.8 420.7,1439.0 416.6,1439.1 412.5,1440.8 408.4,1438.9 404.3,1440.2 400.1,1440.2 396.0,1439.2 391.9,1441.1 387.8,1439.2 383.7,1439.2 379.5,1440.4 375.4,1439.7 371.3,1440.8 367.2,1439.8 363.1,1439.7 358.9,1441.5 354.8,1440.1 350.7,1441.4 346.6,1440.2 342.5,1440.1 338.3,1440.4 334.2,1441.5 330.1,1441.3 326.0,1439.8 321.9,1439.8 317.7,1440.3 313.6,1440.0 309.5,1439.9 305.4,1440.4 301.3,1441.9 297.1,1441.1 293.0,1440.1 288.9,1441.6 284.8,1439.8 280.7,1439.4 276.5,1440.8 272.4,1441.2 268.3,1440.8 264.2,1442.2 260.1,1441.9 255.9,1440.8 251.8,1440.9 247.7,1441.9 243.6,1440.6 239.5,1441.5 235.3,1441.7 231.2,1441.9 227.1,1440.5 223.0,1440.0 218.9,1439.5 214.7,1440.9 210.6,1439.9 206.5,1439.9" fill="#b0cbf2" />
<polyline points="206.5,1435.8 210.6,1435.8 214.7,1436.8 218.9,1435.4 223.0,1435.9 227.1,1436.4 231.2,1437.8 235.3,1437.6 239.5,1437.4 243.6,1436.5 247.7,1437.8 251.8,1436.8 255.9,1436.7 260.1,1437.8 264.2,1438.1 268.3,1436.7 272.4,1437.0 276.5,1436.7 280.7,1435.3 284.8,1435.7 288.9,1437.5 293.0,1436.0 297.1,1437.0 301.3,1437.8 305.4,1436.3 309.5,1435.8 313.6,1435.9 317.7,1436.2 321.9,1435.7 326.0,1435.7 330.1,1437.2 334.2,1437.4 338.3,1436.3 342.5,1436.0 346.6,1436.1 350.7,1437.3 354.8,1436.0 358.9,1437.4 363.1,1435.6 367.2,1435.7 371.3,1436.7 375.4,1435.6 379.5,1436.3 383.7,1435.1 387.8,1435.1 391.9,1437.0 396.0,1435.1 400.1,1436.1 404.3,1436.1 408.4,1434.8 412.5,1436.7 416.6,1435.0 420.7,1434.9 424.9,1435.7 429.0,1435.4 433.1,1435.1 437.2,1437.4 441.3,1435.3 445.5,1436.2 449.6,1436.6 453.7,1437.0 457.8,1437.9 461.9,1437.7 466.1,1436.6 470.2,1436.9 474.3,1437.0 478.4,1437.3 482.5,1436.2 486.7,1435.6 490.8,1436.6 494.9,1436.8 499.0,1437.0 503.1,1437.0 507.3,1436.4 511.4,1436.7 515.5,1436.4 519.6,1436.0 523.7,1435.3 527.9,1435.3 532.0,1434.5 536.1,1436.7 540.2,1437.7 544.3,1437.5 548.5,1436.3 552.6,1435.0 556.7,1436.4 560.8,1435.2 564.9,1436.1 569.1,1435.6 573.2,1436.0 577.3,1436.0 581.4,1435.5 585.5,1435.5 589.7,1437.0 593.8,1436.1 597.9,1436.6 602.0,1435.0 606.1,1436.4 610.3,1437.8 614.4,1437.4 618.5,1436.9 622.6,1435.1 626.8,1435.7 630.9,1436.3 635.0,1436.9 639.1,1436.7 643.2,1436.9 647.4,1437.0 651.5,1435.6 655.6,1435.3 659.7,1435.0 663.8,1436.9 668.0,1435.3 672.1,1434.9 676.2,1436.8 680.3,1437.4 684.4,1435.3 688.6,1434.9 692.7,1435.0 696.8,1434.7 700.9,1435.8 705.0,1434.9 709.2,1434.5 713.3,1434.2 717.4,1435.6 721.5,1435.8 725.6,1435.2 729.8,1437.1 733.9,1436.2 738.0,1437.6 742.1,1436.7 746.2,1435.4 750.4,1436.2 754.5,1435.9 758.6,1435.8 762.7,1435.8 766.8,1436.9 771.0,1437.6 775.1,1436.1 779.2,1436.4 783.3,1437.2 787.4,1435.4 791.6,1435.9 795.7,1435.5 799.8,1437.0 803.9,1436.6 808.0,1436.8 812.2,1435.3 816.3,1436.9 820.4,1435.9 824.5,1434.7 828.6,1435.0 832.8,1436.2 836.9,1436.4 841.0,1437.7 845.1,1438.0 849.2,1436.1 853.4,1436.0 857.5,1437.7 861.6,1437.5 865.7,1435.3 869.8,1436.1 874.0,1436.5 878.1,1435.5 882.2,1437.3 886.3,1436.2 890.4,1434.8 894.6,1436.0 898.7,1435.9 902.8,1434.9 906.9,1434.5 911.0,1436.7 915.2,1436.1 919.3,1434.9 923.4,1435.1 927.5,1435.2 931.6,1434.7 935.8,1437.1 939.9,1437.2 944.0,1436.3 948.1,1437.3 952.2,1437.5 956.4,1435.7 960.5,1436.9 964.6,1437.0 968.7,1436.1 972.8,1437.3 977.0,1436.2 981.1,1437.2 985.2,1436.0 989.3,1437.1 993.4,1437.7 997.6,1437.9 1001.7,1436.2 1005.8,1437.1 1009.9,1437.2 1014.0,1436.9 1018.2,1437.9 1022.3,1436.4 1026.4,1437.1 1030.5,1435.9 1034.6,1435.4 1038.8,1437.5 1042.9,1436.5 1047.0,1435.4" fill="none" stroke="#5b94e3" stroke-width="3.8" stroke-linejoin="round" />
<line x1="199.0" y1="1594.5" x2="1049.0" y2="1594.5" stroke="#cacaca" stroke-width="2"/>
<text x="187.0" y="1603.5" font-size="23" fill="#3b3e44" stroke="#3b3e44" stroke-width="0.35" letter-spacing="-0.4" text-anchor="end" font-weight="normal" >0</text>
<line x1="199.0" y1="1477.2" x2="1049.0" y2="1477.2" stroke="#cacaca" stroke-width="2"/>
<text x="187.0" y="1486.2" font-size="23" fill="#3b3e44" stroke="#3b3e44" stroke-width="0.35" letter-spacing="-0.4" text-anchor="end" font-weight="normal" >10</text>
<line x1="199.0" y1="1360.3" x2="1049.0" y2="1360.3" stroke="#cacaca" stroke-width="2"/>
<text x="187.0" y="1369.3" font-size="23" fill="#3b3e44" stroke="#3b3e44" stroke-width="0.35" letter-spacing="-0.4" text-anchor="end" font-weight="normal" >20</text>
<line x1="199.0" y1="1243.0" x2="1049.0" y2="1243.0" stroke="#cacaca" stroke-width="2"/>
<text x="187.0" y="1252.0" font-size="23" fill="#3b3e44" stroke="#3b3e44" stroke-width="0.35" letter-spacing="-0.4" text-anchor="end" font-weight="normal" >30</text>
<line x1="223.9" y1="1594.5" x2="223.9" y2="1605.5" stroke="#cacaca" stroke-width="2"/>
<text x="223.9" y="1628.0" font-size="23" fill="#3b3e44" stroke="#3b3e44" stroke-width="0.35" letter-spacing="-0.4" text-anchor="middle" font-weight="normal" >07:00</text>
<line x1="330.2" y1="1594.5" x2="330.2" y2="1605.5" stroke="#cacaca" stroke-width="2"/>
<text x="330.2" y="1628.0" font-size="23" fill="#3b3e44" stroke="#3b3e44" stroke-width="0.35" letter-spacing="-0.4" text-anchor="middle" font-weight="normal" >08:00</text>
<line x1="436.5" y1="1594.5" x2="436.5" y2="1605.5" stroke="#cacaca" stroke-width="2"/>
<text x="436.5" y="1628.0" font-size="23" fill="#3b3e44" stroke="#3b3e44" stroke-width="0.35" letter-spacing="-0.4" text-anchor="middle" font-weight="normal" >09:00</text>
<line x1="542.8" y1="1594.5" x2="542.8" y2="1605.5" stroke="#cacaca" stroke-width="2"/>
<text x="542.8" y="1628.0" font-size="23" fill="#3b3e44" stroke="#3b3e44" stroke-width="0.35" letter-spacing="-0.4" text-anchor="middle" font-weight="normal" >10:00</text>
<line x1="649.1" y1="1594.5" x2="649.1" y2="1605.5" stroke="#cacaca" stroke-width="2"/>
<text x="649.1" y="1628.0" font-size="23" fill="#3b3e44" stroke="#3b3e44" stroke-width="0.35" letter-spacing="-0.4" text-anchor="middle" font-weight="normal" >11:00</text>
<line x1="755.4" y1="1594.5" x2="755.4" y2="1605.5" stroke="#cacaca" stroke-width="2"/>
<text x="755.4" y="1628.0" font-size="23" fill="#3b3e44" stroke="#3b3e44" stroke-width="0.35" letter-spacing="-0.4" text-anchor="middle" font-weight="normal" >12:00</text>
<line x1="861.7" y1="1594.5" x2="861.7" y2="1605.5" stroke="#cacaca" stroke-width="2"/>
<text x="861.7" y="1628.0" font-size="23" fill="#3b3e44" stroke="#3b3e44" stroke-width="0.35" letter-spacing="-0.4" text-anchor="middle" font-weight="normal" >13:00</text>
<line x1="968.0" y1="1594.5" x2="968.0" y2="1605.5" stroke="#cacaca" stroke-width="2"/>
<text x="968.0" y="1628.0" font-size="23" fill="#3b3e44" stroke="#3b3e44" stroke-width="0.35" letter-spacing="-0.4" text-anchor="middle" font-weight="normal" >14:00</text>
<rect x="316.9" y="1152.0" width="4.9" height="442.5" fill="rgba(239,196,121,0.32)"/>
<rect x="321.8" y="1152.0" width="21.4" height="442.5" fill="rgba(224,118,89,0.32)"/>
<rect x="343.2" y="1152.0" width="5.3" height="442.5" fill="rgba(239,196,121,0.32)"/>
<rect x="348.5" y="1152.0" width="10.9" height="442.5" fill="rgba(224,118,89,0.32)"/>
<rect x="359.4" y="1152.0" width="5.3" height="442.5" fill="rgba(239,196,121,0.32)"/>
<rect x="364.6" y="1152.0" width="26.3" height="442.5" fill="rgba(224,118,89,0.32)"/>
<rect x="390.9" y="1152.0" width="11.7" height="442.5" fill="rgba(239,196,121,0.32)"/>
<rect x="402.7" y="1152.0" width="4.0" height="442.5" fill="rgba(224,118,89,0.32)"/>
<rect x="406.7" y="1152.0" width="10.5" height="442.5" fill="rgba(239,196,121,0.32)"/>
<rect x="417.2" y="1152.0" width="21.8" height="442.5" fill="rgba(224,118,89,0.32)"/>
<rect x="439.1" y="1152.0" width="5.3" height="442.5" fill="rgba(239,196,121,0.32)"/>
<rect x="444.3" y="1152.0" width="42.5" height="442.5" fill="rgba(224,118,89,0.32)"/>
<rect x="486.8" y="1152.0" width="16.2" height="442.5" fill="rgba(239,196,121,0.32)"/>
<rect x="503.0" y="1152.0" width="4.9" height="442.5" fill="rgba(224,118,89,0.32)"/>
<rect x="507.8" y="1152.0" width="5.3" height="442.5" fill="rgba(239,196,121,0.32)"/>
<rect x="513.1" y="1152.0" width="16.2" height="442.5" fill="rgba(224,118,89,0.32)"/>
<rect x="529.3" y="1152.0" width="5.3" height="442.5" fill="rgba(239,196,121,0.32)"/>
<rect x="534.5" y="1152.0" width="10.1" height="442.5" fill="rgba(224,118,89,0.32)"/>
<rect x="544.6" y="1152.0" width="10.9" height="442.5" fill="rgba(239,196,121,0.32)"/>
<rect x="555.5" y="1152.0" width="16.2" height="442.5" fill="rgba(224,118,89,0.32)"/>
<rect x="704.4" y="1152.0" width="5.7" height="442.5" fill="rgba(239,196,121,0.32)"/>
<rect x="710.1" y="1152.0" width="31.5" height="442.5" fill="rgba(224,118,89,0.32)"/>
<rect x="741.6" y="1152.0" width="10.9" height="442.5" fill="rgba(239,196,121,0.32)"/>
<rect x="752.5" y="1152.0" width="15.4" height="442.5" fill="rgba(224,118,89,0.32)"/>
<rect x="767.9" y="1152.0" width="6.1" height="442.5" fill="rgba(239,196,121,0.32)"/>
<rect x="774.0" y="1152.0" width="21.0" height="442.5" fill="rgba(224,118,89,0.32)"/>
<rect x="795.0" y="1152.0" width="5.3" height="442.5" fill="rgba(239,196,121,0.32)"/>
<rect x="800.3" y="1152.0" width="5.3" height="442.5" fill="rgba(224,118,89,0.32)"/>
<rect x="805.5" y="1152.0" width="5.7" height="442.5" fill="rgba(239,196,121,0.32)"/>
<rect x="811.2" y="1152.0" width="10.1" height="442.5" fill="rgba(224,118,89,0.32)"/>
<rect x="821.3" y="1152.0" width="5.3" height="442.5" fill="rgba(239,196,121,0.32)"/>
<rect x="826.6" y="1152.0" width="10.9" height="442.5" fill="rgba(224,118,89,0.32)"/>
<rect x="837.5" y="1152.0" width="10.5" height="442.5" fill="rgba(239,196,121,0.32)"/>
<rect x="848.0" y="1152.0" width="21.0" height="442.5" fill="rgba(224,118,89,0.32)"/>
<rect x="869.0" y="1152.0" width="10.9" height="442.5" fill="rgba(239,196,121,0.32)"/>
<rect x="879.9" y="1152.0" width="10.5" height="442.5" fill="rgba(224,118,89,0.32)"/>
<rect x="890.5" y="1152.0" width="5.7" height="442.5" fill="rgba(239,196,121,0.32)"/>
<rect x="896.1" y="1152.0" width="110.4" height="442.5" fill="rgba(224,118,89,0.32)"/>
<rect x="1006.5" y="1152.0" width="10.9" height="442.5" fill="rgba(239,196,121,0.32)"/>
<rect x="1017.5" y="1152.0" width="5.3" height="442.5" fill="rgba(224,118,89,0.32)"/>
<rect x="1022.7" y="1152.0" width="6.1" height="442.5" fill="rgba(239,196,121,0.32)"/>
<rect x="1028.8" y="1152.0" width="4.9" height="442.5" fill="rgba(224,118,89,0.32)"/>
<rect x="1033.6" y="1152.0" width="5.3" height="442.5" fill="rgba(239,196,121,0.32)"/>
<rect x="1038.9" y="1152.0" width="8.1" height="442.5" fill="rgba(224,118,89,0.32)"/>
<polygon points="1042.0,1612.0 1050.0,1598.0 1058.0,1612.0" fill="#5a93e4"/>
<text x="1133.0" y="181.0" font-size="32.5" fill="#35383e" stroke="#35383e" stroke-width="0.75" letter-spacing="-0.75">SD-WAN Firewall 1<tspan dx="11" font-size="24" stroke="none" fill="#9a9ba0" letter-spacing="0">(CPU Utilization)</tspan></text>
<line x1="1185.0" y1="544.7" x2="2005.0" y2="544.7" stroke="#cacaca" stroke-width="2"/>
<text x="1172.0" y="553.7" font-size="23" fill="#3b3e44" stroke="#3b3e44" stroke-width="0.35" letter-spacing="-0.4" text-anchor="end" font-weight="normal" >0 %</text>
<line x1="1185.0" y1="479.0" x2="2005.0" y2="479.0" stroke="#cacaca" stroke-width="2"/>
<text x="1172.0" y="488.0" font-size="23" fill="#3b3e44" stroke="#3b3e44" stroke-width="0.35" letter-spacing="-0.4" text-anchor="end" font-weight="normal" >20 %</text>
<line x1="1185.0" y1="413.6" x2="2005.0" y2="413.6" stroke="#cacaca" stroke-width="2"/>
<text x="1172.0" y="422.6" font-size="23" fill="#3b3e44" stroke="#3b3e44" stroke-width="0.35" letter-spacing="-0.4" text-anchor="end" font-weight="normal" >40 %</text>
<line x1="1185.0" y1="348.0" x2="2005.0" y2="348.0" stroke="#cacaca" stroke-width="2"/>
<text x="1172.0" y="357.0" font-size="23" fill="#3b3e44" stroke="#3b3e44" stroke-width="0.35" letter-spacing="-0.4" text-anchor="end" font-weight="normal" >60 %</text>
<line x1="1185.0" y1="282.6" x2="2005.0" y2="282.6" stroke="#cacaca" stroke-width="2"/>
<text x="1172.0" y="291.6" font-size="23" fill="#3b3e44" stroke="#3b3e44" stroke-width="0.35" letter-spacing="-0.4" text-anchor="end" font-weight="normal" >80 %</text>
<line x1="1185.0" y1="216.6" x2="2005.0" y2="216.6" stroke="#cacaca" stroke-width="2"/>
<text x="1172.0" y="225.6" font-size="23" fill="#3b3e44" stroke="#3b3e44" stroke-width="0.35" letter-spacing="-0.4" text-anchor="end" font-weight="normal" >100 %</text>
<line x1="1209.0" y1="544.7" x2="1209.0" y2="555.7" stroke="#cacaca" stroke-width="2"/>
<text x="1209.0" y="578.2" font-size="23" fill="#3b3e44" stroke="#3b3e44" stroke-width="0.35" letter-spacing="-0.4" text-anchor="middle" font-weight="normal" >07:00</text>
<line x1="1311.4" y1="544.7" x2="1311.4" y2="555.7" stroke="#cacaca" stroke-width="2"/>
<text x="1311.4" y="578.2" font-size="23" fill="#3b3e44" stroke="#3b3e44" stroke-width="0.35" letter-spacing="-0.4" text-anchor="middle" font-weight="normal" >08:00</text>
<line x1="1413.8" y1="544.7" x2="1413.8" y2="555.7" stroke="#cacaca" stroke-width="2"/>
<text x="1413.8" y="578.2" font-size="23" fill="#3b3e44" stroke="#3b3e44" stroke-width="0.35" letter-spacing="-0.4" text-anchor="middle" font-weight="normal" >09:00</text>
<line x1="1516.2" y1="544.7" x2="1516.2" y2="555.7" stroke="#cacaca" stroke-width="2"/>
<text x="1516.2" y="578.2" font-size="23" fill="#3b3e44" stroke="#3b3e44" stroke-width="0.35" letter-spacing="-0.4" text-anchor="middle" font-weight="normal" >10:00</text>
<line x1="1618.6" y1="544.7" x2="1618.6" y2="555.7" stroke="#cacaca" stroke-width="2"/>
<text x="1618.6" y="578.2" font-size="23" fill="#3b3e44" stroke="#3b3e44" stroke-width="0.35" letter-spacing="-0.4" text-anchor="middle" font-weight="normal" >11:00</text>
<line x1="1721.0" y1="544.7" x2="1721.0" y2="555.7" stroke="#cacaca" stroke-width="2"/>
<text x="1721.0" y="578.2" font-size="23" fill="#3b3e44" stroke="#3b3e44" stroke-width="0.35" letter-spacing="-0.4" text-anchor="middle" font-weight="normal" >12:00</text>
<line x1="1823.4" y1="544.7" x2="1823.4" y2="555.7" stroke="#cacaca" stroke-width="2"/>
<text x="1823.4" y="578.2" font-size="23" fill="#3b3e44" stroke="#3b3e44" stroke-width="0.35" letter-spacing="-0.4" text-anchor="middle" font-weight="normal" >13:00</text>
<line x1="1925.8" y1="544.7" x2="1925.8" y2="555.7" stroke="#cacaca" stroke-width="2"/>
<text x="1925.8" y="578.2" font-size="23" fill="#3b3e44" stroke="#3b3e44" stroke-width="0.35" letter-spacing="-0.4" text-anchor="middle" font-weight="normal" >14:00</text>
<polyline points="1187.0,488.6 1191.5,485.3 1196.0,486.3 1200.6,499.9 1205.1,482.5 1209.6,489.4 1214.1,495.7 1218.7,492.3 1223.2,495.1 1227.7,496.3 1232.2,497.8 1236.8,509.4 1241.3,509.3 1245.8,483.8 1250.3,482.1 1254.9,499.9 1259.4,487.3 1263.9,483.4 1268.4,495.4 1273.0,499.2 1277.5,497.8 1282.0,494.0 1286.5,484.8 1291.1,494.4 1295.6,499.8 1300.1,500.0 1304.6,494.7 1309.2,493.4 1313.7,502.6 1318.2,492.1 1322.7,482.7 1327.3,493.9 1331.8,490.4 1336.3,498.4 1340.8,485.2 1345.4,499.7 1349.9,498.7 1354.4,488.8 1358.9,493.9 1363.5,490.0 1368.0,495.4 1372.5,497.6 1377.0,482.1 1381.6,481.6 1386.1,492.7 1390.6,489.1 1395.1,491.7 1399.7,499.3 1404.2,499.8 1408.7,494.1 1413.2,482.3 1417.8,491.1 1422.3,497.6 1426.8,494.8 1431.3,481.4 1435.9,481.8 1440.4,491.1 1444.9,491.3 1449.4,497.7 1454.0,481.6 1458.5,488.5 1463.0,497.5 1467.5,485.5 1472.1,493.5 1476.6,485.7 1481.1,487.8 1485.6,493.5 1490.2,495.1 1494.7,485.8 1499.2,494.8 1503.7,488.0 1508.3,500.2 1512.8,495.6 1517.3,491.6 1521.8,488.1 1526.4,493.8 1530.9,486.4 1535.4,493.7 1539.9,483.9 1544.5,481.8 1549.0,490.5 1553.5,497.2 1558.0,482.6 1562.6,487.2 1567.1,496.7 1571.6,489.4 1576.1,492.4 1580.7,485.7 1585.2,488.8 1589.7,492.0 1594.2,496.2 1598.8,494.6 1603.3,497.9 1607.8,496.9 1612.3,499.7 1616.9,493.2 1621.4,489.2 1625.9,488.5 1630.4,495.1 1635.0,498.2 1639.5,501.3 1644.0,498.6 1648.5,493.9 1653.1,482.2 1657.6,492.4 1662.1,488.2 1666.6,497.7 1671.2,489.7 1675.7,482.0 1680.2,493.7 1684.7,507.8 1689.3,497.0 1693.8,483.4 1698.3,492.2 1702.8,494.9 1707.4,493.2 1711.9,483.0 1716.4,495.5 1720.9,491.0 1725.5,494.3 1730.0,491.0 1734.5,499.5 1739.0,492.0 1743.6,485.5 1748.1,500.2 1752.6,495.2 1757.1,485.5 1761.7,508.3 1766.2,494.8 1770.7,491.4 1775.2,488.9 1779.8,498.2 1784.3,494.7 1788.8,494.0 1793.3,490.3 1797.9,493.5 1802.4,492.5 1806.9,491.7 1811.4,483.5 1816.0,500.1 1820.5,492.3 1825.0,486.9 1829.5,491.2 1834.1,493.1 1838.6,488.1 1843.1,495.6 1847.6,487.2 1852.2,495.0 1856.7,489.4 1861.2,490.0 1865.7,501.8 1870.3,488.0 1874.8,484.8 1879.3,497.3 1883.8,481.8 1888.4,498.1 1892.9,496.2 1897.4,482.3 1901.9,497.8 1906.5,491.0 1911.0,500.7 1915.5,504.6 1920.0,506.6 1924.6,486.3 1929.1,497.9 1933.6,494.4 1938.1,491.1 1942.7,502.4 1947.2,497.5 1951.7,490.8 1956.2,489.8 1960.8,495.4 1965.3,495.6 1969.8,493.6 1974.3,493.3 1978.9,497.0 1983.4,496.7 1987.9,506.5 1992.4,495.9 1997.0,491.3 2001.5,494.8 2006.0,511.9" fill="none" stroke="#3d7fc4" stroke-width="4.2" stroke-linejoin="round" />
<polyline points="1187.0,476.9 1191.5,499.1 1196.0,477.5 1200.6,498.2 1205.1,489.7 1209.6,490.6 1214.1,490.0 1218.7,498.3 1223.2,478.2 1227.7,486.6 1232.2,483.3 1236.8,481.1 1241.3,488.7 1245.8,510.3 1250.3,484.7 1254.9,503.7 1259.4,468.7 1263.9,486.8 1268.4,499.8 1273.0,497.4 1277.5,488.5 1282.0,497.7 1286.5,492.8 1291.1,492.4 1295.6,499.9 1300.1,489.2 1304.6,476.6 1309.2,485.1 1313.7,499.0 1318.2,492.2 1322.7,475.0 1327.3,499.6 1331.8,500.6 1336.3,465.4 1340.8,491.4 1345.4,492.5 1349.9,475.4 1354.4,494.2 1358.9,466.7 1363.5,486.7 1368.0,516.2 1372.5,496.5 1377.0,464.7 1381.6,491.1 1386.1,468.3 1390.6,470.8 1395.1,501.7 1399.7,501.3 1404.2,487.6 1408.7,517.6 1413.2,496.6 1417.8,487.8 1422.3,500.4 1426.8,499.4 1431.3,467.4 1435.9,470.0 1440.4,503.0 1444.9,484.5 1449.4,488.9 1454.0,475.1 1458.5,491.6 1463.0,471.1 1467.5,499.1 1472.1,500.2 1476.6,471.4 1481.1,502.6 1485.6,500.4 1490.2,481.0 1494.7,501.3 1499.2,501.8 1503.7,492.4 1508.3,499.8 1512.8,491.3 1517.3,481.8 1521.8,477.9 1526.4,481.1 1530.9,471.5 1535.4,466.1 1539.9,476.1 1544.5,471.7 1549.0,501.3 1553.5,493.3 1558.0,505.0 1562.6,482.6 1567.1,498.6 1571.6,469.8 1576.1,479.6 1580.7,486.8 1585.2,500.3 1589.7,471.1 1594.2,499.9 1598.8,496.9 1603.3,486.1 1607.8,477.6 1612.3,467.7 1616.9,486.6 1621.4,473.5 1625.9,482.7 1630.4,493.6 1635.0,503.2 1639.5,502.4 1644.0,484.7 1648.5,488.2 1653.1,492.8 1657.6,481.5 1662.1,474.1 1666.6,489.8 1671.2,465.0 1675.7,470.2 1680.2,501.5 1684.7,487.2 1689.3,499.8 1693.8,468.2 1698.3,472.3 1702.8,476.8 1707.4,479.2 1711.9,497.3 1716.4,480.6 1720.9,488.4 1725.5,502.6 1730.0,488.6 1734.5,476.0 1739.0,465.0 1743.6,467.3 1748.1,477.3 1752.6,472.2 1757.1,480.3 1761.7,483.1 1766.2,506.5 1770.7,480.8 1775.2,475.6 1779.8,467.1 1784.3,487.9 1788.8,477.3 1793.3,468.4 1797.9,470.7 1802.4,479.6 1806.9,483.3 1811.4,494.3 1816.0,482.3 1820.5,503.6 1825.0,496.7 1829.5,468.3 1834.1,479.5 1838.6,499.4 1843.1,481.9 1847.6,489.0 1852.2,495.3 1856.7,493.1 1861.2,468.4 1865.7,478.8 1870.3,504.1 1874.8,471.0 1879.3,475.0 1883.8,486.9 1888.4,468.1 1892.9,492.6 1897.4,465.6 1901.9,511.7 1906.5,479.9 1911.0,496.2 1915.5,478.2 1920.0,482.9 1924.6,470.8 1929.1,491.1 1933.6,478.3 1938.1,494.7 1942.7,470.6 1947.2,499.7 1951.7,500.0 1956.2,491.9 1960.8,474.7 1965.3,472.0 1969.8,467.3 1974.3,479.1 1978.9,500.7 1983.4,495.6 1987.9,485.6 1992.4,481.1 1997.0,482.3 2001.5,499.1 2006.0,488.9" fill="none" stroke="#e07f38" stroke-width="4.2" stroke-linejoin="round" />
<polyline points="1187.0,490.3 1191.5,485.8 1196.0,486.3 1200.6,491.1 1205.1,490.7 1209.6,488.0 1214.1,490.8 1218.7,490.4 1223.2,487.4 1227.7,491.4 1232.2,487.1 1236.8,493.8 1241.3,494.0 1245.8,495.7 1250.3,495.9 1254.9,487.1 1259.4,490.4 1263.9,494.4 1268.4,491.9 1273.0,493.3 1277.5,491.6 1282.0,490.5 1286.5,493.1 1291.1,491.7 1295.6,494.9 1300.1,487.0 1304.6,489.2 1309.2,491.0 1313.7,491.1 1318.2,486.4 1322.7,487.8 1327.3,486.8 1331.8,485.4 1336.3,484.6 1340.8,483.5 1345.4,484.3 1349.9,485.6 1354.4,484.1 1358.9,491.3 1363.5,492.9 1368.0,493.2 1372.5,494.9 1377.0,492.1 1381.6,492.0 1386.1,486.9 1390.6,494.1 1395.1,486.7 1399.7,492.9 1404.2,486.8 1408.7,493.9 1413.2,492.1 1417.8,488.2 1422.3,486.8 1426.8,489.0 1431.3,487.8 1435.9,493.4 1440.4,492.5 1444.9,491.1 1449.4,485.8 1454.0,488.2 1458.5,489.2 1463.0,493.6 1467.5,492.7 1472.1,491.8 1476.6,489.6 1481.1,494.5 1485.6,496.2 1490.2,494.9 1494.7,492.2 1499.2,486.5 1503.7,488.8 1508.3,485.4 1512.8,483.9 1517.3,491.7 1521.8,494.9 1526.4,489.3 1530.9,491.1 1535.4,492.5 1539.9,487.6 1544.5,490.9 1549.0,489.8 1553.5,490.6 1558.0,494.5 1562.6,495.1 1567.1,494.1 1571.6,488.5 1576.1,492.1 1580.7,489.5 1585.2,488.7 1589.7,492.2 1594.2,491.4 1598.8,493.9 1603.3,495.9 1607.8,491.5 1612.3,487.3 1616.9,488.3 1621.4,493.5 1625.9,490.1 1630.4,493.0 1635.0,495.0 1639.5,489.8 1644.0,494.5 1648.5,490.0 1653.1,487.9 1657.6,488.1 1662.1,493.4 1666.6,493.6 1671.2,496.3 1675.7,491.9 1680.2,491.1 1684.7,493.4 1689.3,486.7 1693.8,493.3 1698.3,495.4 1702.8,490.6 1707.4,493.6 1711.9,491.3 1716.4,491.1 1720.9,486.3 1725.5,491.4 1730.0,490.2 1734.5,489.7 1739.0,490.9 1743.6,487.0 1748.1,493.2 1752.6,492.6 1757.1,493.3 1761.7,489.7 1766.2,494.0 1770.7,493.0 1775.2,489.7 1779.8,493.7 1784.3,492.5 1788.8,488.6 1793.3,490.7 1797.9,494.5 1802.4,489.3 1806.9,486.2 1811.4,491.0 1816.0,486.0 1820.5,485.0 1825.0,492.7 1829.5,496.3 1834.1,494.2 1838.6,491.3 1843.1,486.0 1847.6,493.0 1852.2,495.0 1856.7,495.9 1861.2,491.5 1865.7,492.9 1870.3,486.3 1874.8,492.0 1879.3,486.5 1883.8,487.8 1888.4,491.3 1892.9,490.2 1897.4,494.8 1901.9,491.9 1906.5,486.5 1911.0,489.1 1915.5,487.4 1920.0,489.7 1924.6,489.0 1929.1,492.9 1933.6,488.7 1938.1,484.8 1942.7,491.9 1947.2,491.3 1951.7,486.9 1956.2,487.2 1960.8,488.5 1965.3,491.2 1969.8,488.3 1974.3,487.0 1978.9,488.3 1983.4,489.8 1987.9,485.9 1992.4,490.6 1997.0,494.1 2001.5,492.2 2006.0,494.6" fill="none" stroke="#55a868" stroke-width="4.2" stroke-linejoin="round" />
<polyline points="1187.0,485.0 1191.5,499.4 1196.0,493.5 1200.6,486.8 1205.1,483.5 1209.6,493.0 1214.1,489.8 1218.7,487.7 1223.2,496.4 1227.7,499.4 1232.2,484.7 1236.8,498.6 1241.3,493.0 1245.8,480.9 1250.3,494.9 1254.9,487.0 1259.4,487.2 1263.9,502.8 1268.4,488.4 1273.0,489.8 1277.5,493.6 1282.0,492.3 1286.5,485.0 1291.1,489.8 1295.6,484.2 1300.1,499.1 1304.6,497.4 1309.2,491.1 1313.7,490.4 1318.2,499.0 1322.7,484.8 1327.3,483.5 1331.8,485.8 1336.3,499.3 1340.8,481.5 1345.4,497.8 1349.9,497.7 1354.4,499.4 1358.9,493.7 1363.5,504.5 1368.0,482.4 1372.5,495.3 1377.0,490.8 1381.6,498.9 1386.1,484.8 1390.6,483.1 1395.1,484.9 1399.7,482.0 1404.2,491.5 1408.7,486.9 1413.2,485.8 1417.8,495.8 1422.3,494.7 1426.8,491.8 1431.3,483.4 1435.9,497.6 1440.4,496.3 1444.9,504.9 1449.4,504.6 1454.0,481.2 1458.5,493.2 1463.0,498.0 1467.5,498.3 1472.1,485.0 1476.6,484.1 1481.1,481.9 1485.6,494.8 1490.2,491.0 1494.7,495.1 1499.2,490.9 1503.7,495.2 1508.3,497.7 1512.8,491.7 1517.3,483.1 1521.8,493.5 1526.4,497.1 1530.9,497.9 1535.4,482.0 1539.9,498.6 1544.5,490.5 1549.0,496.5 1553.5,499.7 1558.0,494.8 1562.6,497.7 1567.1,481.7 1571.6,497.6 1576.1,485.9 1580.7,495.4 1585.2,502.0 1589.7,493.2 1594.2,490.8 1598.8,498.3 1603.3,494.0 1607.8,483.8 1612.3,492.8 1616.9,483.3 1621.4,490.8 1625.9,487.7 1630.4,497.1 1635.0,482.7 1639.5,492.5 1644.0,494.0 1648.5,486.9 1653.1,485.0 1657.6,506.4 1662.1,494.0 1666.6,498.8 1671.2,496.3 1675.7,486.2 1680.2,483.2 1684.7,487.6 1689.3,496.0 1693.8,493.3 1698.3,497.3 1702.8,492.4 1707.4,481.5 1711.9,492.0 1716.4,490.3 1720.9,485.6 1725.5,499.5 1730.0,481.7 1734.5,494.6 1739.0,491.1 1743.6,490.8 1748.1,498.7 1752.6,486.9 1757.1,489.9 1761.7,489.8 1766.2,484.6 1770.7,493.0 1775.2,496.3 1779.8,498.6 1784.3,494.2 1788.8,498.6 1793.3,480.6 1797.9,495.2 1802.4,501.3 1806.9,480.7 1811.4,496.2 1816.0,480.5 1820.5,481.9 1825.0,484.5 1829.5,496.2 1834.1,507.6 1838.6,494.1 1843.1,483.3 1847.6,485.5 1852.2,482.1 1856.7,492.1 1861.2,497.5 1865.7,491.8 1870.3,494.7 1874.8,481.2 1879.3,483.5 1883.8,488.1 1888.4,491.9 1892.9,487.4 1897.4,484.4 1901.9,504.2 1906.5,499.0 1911.0,503.8 1915.5,488.3 1920.0,497.6 1924.6,497.2 1929.1,486.0 1933.6,490.2 1938.1,487.4 1942.7,504.0 1947.2,498.8 1951.7,492.8 1956.2,489.5 1960.8,493.7 1965.3,487.9 1969.8,493.5 1974.3,490.5 1978.9,493.0 1983.4,490.1 1987.9,488.3 1992.4,497.4 1997.0,496.4 2001.5,486.7 2006.0,486.2" fill="none" stroke="#9b6fc6" stroke-width="4.2" stroke-linejoin="round" />
<polygon points="1998.0,559.0 2006.0,545.0 2014.0,559.0" fill="#5a93e4"/>
<text x="1133.0" y="659.0" font-size="32.5" fill="#35383e" stroke="#35383e" stroke-width="0.75" letter-spacing="-0.75">SD-WAN Firewall 1 - WAN1 - ISP #1<tspan dx="11" font-size="24" stroke="none" fill="#9a9ba0" letter-spacing="0">(Interface Data)</tspan></text>
<line x1="1235.3" y1="1022.3" x2="1968.7" y2="1022.3" stroke="#cacaca" stroke-width="2"/>
<text x="1222.4" y="1031.3" font-size="23" fill="#3b3e44" stroke="#3b3e44" stroke-width="0.35" letter-spacing="-0.4" text-anchor="end" font-weight="normal" >0 Kbps</text>
<line x1="1235.3" y1="968.0" x2="1968.7" y2="968.0" stroke="#cacaca" stroke-width="2"/>
<text x="1222.4" y="977.0" font-size="23" fill="#3b3e44" stroke="#3b3e44" stroke-width="0.35" letter-spacing="-0.4" text-anchor="end" font-weight="normal" >100 Mbps</text>
<line x1="1235.3" y1="913.5" x2="1968.7" y2="913.5" stroke="#cacaca" stroke-width="2"/>
<text x="1222.4" y="922.5" font-size="23" fill="#3b3e44" stroke="#3b3e44" stroke-width="0.35" letter-spacing="-0.4" text-anchor="end" font-weight="normal" >200 Mbps</text>
<line x1="1235.3" y1="858.9" x2="1968.7" y2="858.9" stroke="#cacaca" stroke-width="2"/>
<text x="1222.4" y="867.9" font-size="23" fill="#3b3e44" stroke="#3b3e44" stroke-width="0.35" letter-spacing="-0.4" text-anchor="end" font-weight="normal" >300 Mbps</text>
<line x1="1235.3" y1="804.7" x2="1968.7" y2="804.7" stroke="#cacaca" stroke-width="2"/>
<text x="1222.4" y="813.7" font-size="23" fill="#3b3e44" stroke="#3b3e44" stroke-width="0.35" letter-spacing="-0.4" text-anchor="end" font-weight="normal" >400 Mbps</text>
<line x1="1235.3" y1="750.0" x2="1968.7" y2="750.0" stroke="#cacaca" stroke-width="2"/>
<text x="1222.4" y="759.0" font-size="23" fill="#3b3e44" stroke="#3b3e44" stroke-width="0.35" letter-spacing="-0.4" text-anchor="end" font-weight="normal" >500 Mbps</text>
<line x1="1235.3" y1="695.4" x2="1968.7" y2="695.4" stroke="#cacaca" stroke-width="2"/>
<text x="1222.4" y="704.4" font-size="23" fill="#3b3e44" stroke="#3b3e44" stroke-width="0.35" letter-spacing="-0.4" text-anchor="end" font-weight="normal" >600 Mbps</text>
<line x1="1256.3" y1="1022.3" x2="1256.3" y2="1033.3" stroke="#cacaca" stroke-width="2"/>
<text x="1256.3" y="1055.8" font-size="23" fill="#3b3e44" stroke="#3b3e44" stroke-width="0.35" letter-spacing="-0.4" text-anchor="middle" font-weight="normal" >07:00</text>
<line x1="1348.0" y1="1022.3" x2="1348.0" y2="1033.3" stroke="#cacaca" stroke-width="2"/>
<text x="1348.0" y="1055.8" font-size="23" fill="#3b3e44" stroke="#3b3e44" stroke-width="0.35" letter-spacing="-0.4" text-anchor="middle" font-weight="normal" >08:00</text>
<line x1="1439.7" y1="1022.3" x2="1439.7" y2="1033.3" stroke="#cacaca" stroke-width="2"/>
<text x="1439.7" y="1055.8" font-size="23" fill="#3b3e44" stroke="#3b3e44" stroke-width="0.35" letter-spacing="-0.4" text-anchor="middle" font-weight="normal" >09:00</text>
<line x1="1531.4" y1="1022.3" x2="1531.4" y2="1033.3" stroke="#cacaca" stroke-width="2"/>
<text x="1531.4" y="1055.8" font-size="23" fill="#3b3e44" stroke="#3b3e44" stroke-width="0.35" letter-spacing="-0.4" text-anchor="middle" font-weight="normal" >10:00</text>
<line x1="1623.1" y1="1022.3" x2="1623.1" y2="1033.3" stroke="#cacaca" stroke-width="2"/>
<text x="1623.1" y="1055.8" font-size="23" fill="#3b3e44" stroke="#3b3e44" stroke-width="0.35" letter-spacing="-0.4" text-anchor="middle" font-weight="normal" >11:00</text>
<line x1="1714.8" y1="1022.3" x2="1714.8" y2="1033.3" stroke="#cacaca" stroke-width="2"/>
<text x="1714.8" y="1055.8" font-size="23" fill="#3b3e44" stroke="#3b3e44" stroke-width="0.35" letter-spacing="-0.4" text-anchor="middle" font-weight="normal" >12:00</text>
<line x1="1806.5" y1="1022.3" x2="1806.5" y2="1033.3" stroke="#cacaca" stroke-width="2"/>
<text x="1806.5" y="1055.8" font-size="23" fill="#3b3e44" stroke="#3b3e44" stroke-width="0.35" letter-spacing="-0.4" text-anchor="middle" font-weight="normal" >13:00</text>
<line x1="1898.2" y1="1022.3" x2="1898.2" y2="1033.3" stroke="#cacaca" stroke-width="2"/>
<text x="1898.2" y="1055.8" font-size="23" fill="#3b3e44" stroke="#3b3e44" stroke-width="0.35" letter-spacing="-0.4" text-anchor="middle" font-weight="normal" >14:00</text>
<line x1="1238.5" y1="1019" x2="1970.7" y2="1019" stroke="#cfeadf" stroke-width="2"/>
<line x1="1238.5" y1="1021.5" x2="1970.7" y2="1021.5" stroke="#5b94e3" stroke-width="4"/>
<polygon points="1960.7,1037.5 1969.7,1023.5 1978.7,1037.5" fill="#5a93e4"/>
<text x="1133.0" y="1137.0" font-size="32.5" fill="#35383e" stroke="#35383e" stroke-width="0.75" letter-spacing="-0.75">SD-WAN Firewall 1 - WAN2 - ISP #2<tspan dx="11" font-size="24" stroke="none" fill="#9a9ba0" letter-spacing="0">(Interface Data)</tspan></text>
<line x1="1235.3" y1="1596.5" x2="1968.7" y2="1596.5" stroke="#cacaca" stroke-width="2"/>
<text x="1222.4" y="1605.5" font-size="23" fill="#3b3e44" stroke="#3b3e44" stroke-width="0.35" letter-spacing="-0.4" text-anchor="end" font-weight="normal" >0 Kbps</text>
<line x1="1235.3" y1="1526.2" x2="1968.7" y2="1526.2" stroke="#cacaca" stroke-width="2"/>
<text x="1222.4" y="1535.2" font-size="23" fill="#3b3e44" stroke="#3b3e44" stroke-width="0.35" letter-spacing="-0.4" text-anchor="end" font-weight="normal" >100 Mbps</text>
<line x1="1235.3" y1="1455.8" x2="1968.7" y2="1455.8" stroke="#cacaca" stroke-width="2"/>
<text x="1222.4" y="1464.8" font-size="23" fill="#3b3e44" stroke="#3b3e44" stroke-width="0.35" letter-spacing="-0.4" text-anchor="end" font-weight="normal" >200 Mbps</text>
<line x1="1235.3" y1="1385.0" x2="1968.7" y2="1385.0" stroke="#cacaca" stroke-width="2"/>
<text x="1222.4" y="1394.0" font-size="23" fill="#3b3e44" stroke="#3b3e44" stroke-width="0.35" letter-spacing="-0.4" text-anchor="end" font-weight="normal" >300 Mbps</text>
<line x1="1235.3" y1="1314.6" x2="1968.7" y2="1314.6" stroke="#cacaca" stroke-width="2"/>
<text x="1222.4" y="1323.6" font-size="23" fill="#3b3e44" stroke="#3b3e44" stroke-width="0.35" letter-spacing="-0.4" text-anchor="end" font-weight="normal" >400 Mbps</text>
<line x1="1235.3" y1="1243.8" x2="1968.7" y2="1243.8" stroke="#cacaca" stroke-width="2"/>
<text x="1222.4" y="1252.8" font-size="23" fill="#3b3e44" stroke="#3b3e44" stroke-width="0.35" letter-spacing="-0.4" text-anchor="end" font-weight="normal" >500 Mbps</text>
<line x1="1235.3" y1="1173.4" x2="1968.7" y2="1173.4" stroke="#cacaca" stroke-width="2"/>
<text x="1222.4" y="1182.4" font-size="23" fill="#3b3e44" stroke="#3b3e44" stroke-width="0.35" letter-spacing="-0.4" text-anchor="end" font-weight="normal" >600 Mbps</text>
<line x1="1256.3" y1="1596.5" x2="1256.3" y2="1607.5" stroke="#cacaca" stroke-width="2"/>
<text x="1256.3" y="1630.0" font-size="23" fill="#3b3e44" stroke="#3b3e44" stroke-width="0.35" letter-spacing="-0.4" text-anchor="middle" font-weight="normal" >07:00</text>
<line x1="1348.0" y1="1596.5" x2="1348.0" y2="1607.5" stroke="#cacaca" stroke-width="2"/>
<text x="1348.0" y="1630.0" font-size="23" fill="#3b3e44" stroke="#3b3e44" stroke-width="0.35" letter-spacing="-0.4" text-anchor="middle" font-weight="normal" >08:00</text>
<line x1="1439.7" y1="1596.5" x2="1439.7" y2="1607.5" stroke="#cacaca" stroke-width="2"/>
<text x="1439.7" y="1630.0" font-size="23" fill="#3b3e44" stroke="#3b3e44" stroke-width="0.35" letter-spacing="-0.4" text-anchor="middle" font-weight="normal" >09:00</text>
<line x1="1531.4" y1="1596.5" x2="1531.4" y2="1607.5" stroke="#cacaca" stroke-width="2"/>
<text x="1531.4" y="1630.0" font-size="23" fill="#3b3e44" stroke="#3b3e44" stroke-width="0.35" letter-spacing="-0.4" text-anchor="middle" font-weight="normal" >10:00</text>
<line x1="1623.1" y1="1596.5" x2="1623.1" y2="1607.5" stroke="#cacaca" stroke-width="2"/>
<text x="1623.1" y="1630.0" font-size="23" fill="#3b3e44" stroke="#3b3e44" stroke-width="0.35" letter-spacing="-0.4" text-anchor="middle" font-weight="normal" >11:00</text>
<line x1="1714.8" y1="1596.5" x2="1714.8" y2="1607.5" stroke="#cacaca" stroke-width="2"/>
<text x="1714.8" y="1630.0" font-size="23" fill="#3b3e44" stroke="#3b3e44" stroke-width="0.35" letter-spacing="-0.4" text-anchor="middle" font-weight="normal" >12:00</text>
<line x1="1806.5" y1="1596.5" x2="1806.5" y2="1607.5" stroke="#cacaca" stroke-width="2"/>
<text x="1806.5" y="1630.0" font-size="23" fill="#3b3e44" stroke="#3b3e44" stroke-width="0.35" letter-spacing="-0.4" text-anchor="middle" font-weight="normal" >13:00</text>
<line x1="1898.2" y1="1596.5" x2="1898.2" y2="1607.5" stroke="#cacaca" stroke-width="2"/>
<text x="1898.2" y="1630.0" font-size="23" fill="#3b3e44" stroke="#3b3e44" stroke-width="0.35" letter-spacing="-0.4" text-anchor="middle" font-weight="normal" >14:00</text>
<polygon points="1336.8,1596.5 1338.0,1201.6 1338.0,1204.0 1341.3,1205.6 1344.5,1209.7 1347.7,1196.9 1351.0,1212.1 1354.2,1203.3 1357.4,1196.3 1360.7,1210.7 1363.9,1202.4 1367.1,1201.3 1370.4,1211.4 1371.2,1215.7 1375.2,1596.5" fill="#d3ede2" />
<polygon points="1380.1,1596.5 1381.3,1201.6 1381.3,1205.5 1384.5,1199.8 1387.8,1204.2 1391.0,1199.4 1394.2,1209.4 1397.5,1208.0 1400.7,1210.2 1404.0,1203.2 1407.2,1195.9 1410.4,1201.8 1413.7,1198.5 1416.9,1205.4 1420.1,1199.0 1423.4,1210.4 1426.6,1207.0 1429.8,1200.3 1433.1,1199.4 1436.3,1204.7 1439.6,1210.6 1440.0,1215.7 1443.2,1596.5" fill="#d3ede2" />
<polygon points="1445.6,1596.5 1446.8,1201.6 1446.8,1207.5 1450.1,1208.5 1453.3,1207.2 1456.5,1197.9 1459.8,1208.6 1463.0,1196.5 1466.2,1196.7 1469.5,1211.2 1472.7,1205.5 1476.0,1203.5 1479.2,1211.8 1482.4,1204.7 1485.7,1196.2 1488.9,1210.2 1492.1,1201.6 1495.4,1210.0 1498.6,1202.0 1501.8,1196.4 1505.1,1208.6 1508.3,1212.0 1511.5,1210.7 1514.8,1202.6 1518.0,1211.9 1521.3,1210.7 1524.5,1203.4 1527.7,1195.9 1531.0,1204.8 1534.2,1205.1 1537.4,1200.9 1540.7,1210.5 1543.9,1201.9 1545.1,1215.7 1550.8,1596.5" fill="#d3ede2" />
<polygon points="1675.4,1596.5 1676.6,1201.6 1676.6,1209.1 1679.8,1201.4 1683.0,1195.3 1686.3,1211.2 1689.5,1202.4 1692.8,1201.5 1696.0,1209.5 1699.2,1207.4 1702.5,1194.6 1705.7,1194.6 1708.9,1210.0 1712.2,1199.7 1715.4,1195.4 1718.6,1208.0 1721.9,1201.4 1725.1,1211.4 1728.4,1205.7 1731.6,1200.3 1734.8,1201.8 1738.1,1198.5 1740.1,1215.7 1744.1,1596.5" fill="#d3ede2" />
<polygon points="1753.0,1596.5 1754.2,1201.6 1754.2,1210.6 1757.5,1206.0 1760.7,1196.9 1763.9,1201.9 1767.2,1204.2 1770.4,1205.1 1773.7,1194.8 1776.9,1202.0 1780.1,1211.8 1783.4,1198.1 1786.6,1206.4 1789.8,1204.5 1793.1,1208.4 1796.3,1204.3 1799.5,1206.4 1802.8,1210.6 1806.0,1201.1 1809.2,1210.3 1812.5,1198.3 1815.7,1211.7 1819.0,1198.4 1822.2,1197.9 1825.4,1203.4 1828.7,1199.7 1831.9,1207.8 1835.1,1199.2 1838.4,1204.7 1841.6,1208.1 1844.8,1195.2 1848.1,1205.1 1851.3,1205.6 1854.5,1197.0 1857.8,1205.7 1861.0,1200.4 1864.3,1209.2 1867.5,1197.3 1870.7,1207.6 1874.0,1211.3 1877.2,1195.0 1880.4,1209.1 1883.7,1195.5 1886.9,1194.8 1890.1,1201.5 1893.4,1212.0 1896.6,1211.1 1899.9,1208.5 1903.1,1205.3 1906.3,1201.4 1909.6,1195.1 1912.8,1205.9 1916.0,1209.7 1919.3,1202.3 1922.5,1209.7 1925.7,1210.6 1929.0,1202.4 1932.2,1199.9 1935.4,1211.0 1938.7,1204.2 1941.9,1199.8 1945.2,1198.7 1948.4,1205.4 1951.6,1196.5 1954.9,1209.2 1958.1,1199.6 1961.3,1198.6 1964.6,1196.6 1967.8,1203.4 1968.6,1215.7 1970.6,1596.5" fill="#d3ede2" />
<polygon points="1238.5,1596.5 1238.5,1589.4 1334.4,1589.4 1334.4,1596.5" fill="#d3ede2" />
<polygon points="1559.3,1596.5 1559.3,1589.4 1674.6,1589.4 1674.6,1596.5" fill="#d3ede2" />
<polyline points="1238.5,1596.5 1334.4,1596.5 1338.4,1219.2 1342.5,1193.1 1345.7,1213.5 1349.4,1214.6 1353.0,1203.8 1356.6,1211.8 1360.3,1201.5 1363.9,1213.8 1367.6,1198.1 1371.2,1210.7 1374.8,1215.4 1378.5,1211.7 1382.1,1205.4 1385.8,1203.1 1389.4,1206.9 1393.0,1211.8 1396.7,1204.8 1400.3,1194.3 1404.0,1203.6 1407.6,1194.5 1411.2,1215.0 1414.9,1193.3 1418.5,1195.6 1422.2,1203.4 1425.8,1203.9 1429.4,1203.6 1433.1,1195.2 1436.7,1214.2 1440.4,1201.2 1444.0,1203.5 1447.6,1208.9 1451.3,1199.3 1454.9,1199.4 1458.6,1213.4 1462.2,1199.9 1465.8,1205.5 1469.5,1204.6 1473.1,1201.3 1476.8,1214.5 1480.4,1202.1 1484.0,1207.3 1487.7,1195.9 1491.3,1210.5 1495.0,1197.1 1498.6,1199.2 1502.2,1201.6 1505.9,1195.9 1509.5,1214.9 1513.2,1202.2 1516.8,1201.9 1520.4,1200.4 1524.1,1206.5 1527.7,1214.1 1531.4,1211.4 1535.0,1202.0 1538.6,1211.6 1542.3,1214.2 1545.9,1207.7 1549.6,1205.1 1554.0,1194.5 1559.3,1596.5 1674.6,1596.5 1677.4,1198.1 1680.6,1205.2 1684.3,1218.5 1687.9,1199.0 1691.5,1210.5 1695.2,1198.8 1698.8,1219.0 1697.6,1198.9 1700.8,1585.9 1704.1,1202.6 1707.3,1193.7 1711.0,1193.5 1714.6,1197.5 1718.2,1216.4 1721.9,1210.1 1725.5,1213.2 1729.2,1198.9 1730.0,1212.3 1733.2,1581.0 1736.4,1208.6 1739.7,1216.3 1743.3,1216.1 1747.0,1194.7 1750.6,1193.7 1754.2,1209.5 1757.9,1199.9 1761.5,1207.0 1765.2,1205.6 1768.8,1209.6 1772.4,1202.7 1776.1,1213.1 1779.7,1212.5 1783.4,1205.7 1787.0,1214.1 1790.6,1207.8 1794.3,1194.6 1797.9,1218.6 1801.6,1216.5 1805.2,1198.3 1808.8,1217.7 1812.5,1212.7 1816.1,1197.0 1819.8,1203.4 1823.4,1213.5 1827.0,1217.7 1830.7,1212.0 1834.3,1211.4 1838.0,1198.3 1841.6,1193.8 1845.2,1198.7 1844.8,1199.8 1848.1,1564.8 1851.3,1197.1 1854.5,1196.3 1858.2,1195.2 1861.8,1194.0 1865.5,1216.8 1869.1,1210.9 1872.8,1212.8 1876.4,1203.5 1880.0,1206.4 1883.7,1210.2 1885.7,1200.9 1888.9,1583.8 1892.2,1205.7 1895.4,1213.8 1899.0,1212.0 1902.7,1207.2 1906.3,1203.3 1910.0,1204.4 1913.6,1207.7 1917.2,1214.4 1920.9,1208.7 1924.5,1210.7 1928.2,1214.8 1931.8,1205.0 1935.4,1214.3 1939.1,1200.7 1942.7,1202.0 1946.4,1215.6 1950.0,1202.9 1953.6,1210.4 1957.3,1207.6 1960.9,1203.4 1964.6,1199.3 1967.8,1212.2 1971.8,1585.9" fill="none" stroke="#5b94e3" stroke-width="4" stroke-linejoin="round" />
<polygon points="1960.7,1611.6 1969.7,1598.6 1978.7,1611.6" fill="#5a93e4"/>
<text x="2090.0" y="181.0" font-size="32.5" fill="#35383e" stroke="#35383e" stroke-width="0.75" letter-spacing="-0.75">Teams (Branch SD-WAN 1)<tspan dx="11" font-size="24" stroke="none" fill="#9a9ba0" letter-spacing="0">(HTTP Duration)</tspan></text>
<line x1="2142.5" y1="448.6" x2="2768.6" y2="448.6" stroke="#cacaca" stroke-width="2"/>
<text x="2129.6" y="457.6" font-size="23" fill="#3b3e44" stroke="#3b3e44" stroke-width="0.35" letter-spacing="-0.4" text-anchor="end" font-weight="normal" >0 s</text>
<line x1="2142.5" y1="418.0" x2="2768.6" y2="418.0" stroke="#cacaca" stroke-width="2"/>
<text x="2129.6" y="427.0" font-size="23" fill="#3b3e44" stroke="#3b3e44" stroke-width="0.35" letter-spacing="-0.4" text-anchor="end" font-weight="normal" >0.20 s</text>
<line x1="2142.5" y1="387.3" x2="2768.6" y2="387.3" stroke="#cacaca" stroke-width="2"/>
<text x="2129.6" y="396.3" font-size="23" fill="#3b3e44" stroke="#3b3e44" stroke-width="0.35" letter-spacing="-0.4" text-anchor="end" font-weight="normal" >0.40 s</text>
<line x1="2142.5" y1="356.6" x2="2768.6" y2="356.6" stroke="#cacaca" stroke-width="2"/>
<text x="2129.6" y="365.6" font-size="23" fill="#3b3e44" stroke="#3b3e44" stroke-width="0.35" letter-spacing="-0.4" text-anchor="end" font-weight="normal" >0.60 s</text>
<line x1="2142.5" y1="326.0" x2="2768.6" y2="326.0" stroke="#cacaca" stroke-width="2"/>
<text x="2129.6" y="335.0" font-size="23" fill="#3b3e44" stroke="#3b3e44" stroke-width="0.35" letter-spacing="-0.4" text-anchor="end" font-weight="normal" >0.80 s</text>
<line x1="2142.5" y1="295.0" x2="2768.6" y2="295.0" stroke="#cacaca" stroke-width="2"/>
<text x="2129.6" y="304.0" font-size="23" fill="#3b3e44" stroke="#3b3e44" stroke-width="0.35" letter-spacing="-0.4" text-anchor="end" font-weight="normal" >1 s</text>
<line x1="2142.5" y1="264.7" x2="2768.6" y2="264.7" stroke="#cacaca" stroke-width="2"/>
<text x="2129.6" y="273.7" font-size="23" fill="#3b3e44" stroke="#3b3e44" stroke-width="0.35" letter-spacing="-0.4" text-anchor="end" font-weight="normal" >1.20 s</text>
<line x1="2142.5" y1="234.0" x2="2768.6" y2="234.0" stroke="#cacaca" stroke-width="2"/>
<text x="2129.6" y="243.0" font-size="23" fill="#3b3e44" stroke="#3b3e44" stroke-width="0.35" letter-spacing="-0.4" text-anchor="end" font-weight="normal" >1.40 s</text>
<line x1="2160.6" y1="448.6" x2="2160.6" y2="459.6" stroke="#cacaca" stroke-width="2"/>
<text x="2160.6" y="482.1" font-size="23" fill="#3b3e44" stroke="#3b3e44" stroke-width="0.35" letter-spacing="-0.4" text-anchor="middle" font-weight="normal" >07:00</text>
<line x1="2238.9" y1="448.6" x2="2238.9" y2="459.6" stroke="#cacaca" stroke-width="2"/>
<text x="2238.9" y="482.1" font-size="23" fill="#3b3e44" stroke="#3b3e44" stroke-width="0.35" letter-spacing="-0.4" text-anchor="middle" font-weight="normal" >08:00</text>
<line x1="2317.3" y1="448.6" x2="2317.3" y2="459.6" stroke="#cacaca" stroke-width="2"/>
<text x="2317.3" y="482.1" font-size="23" fill="#3b3e44" stroke="#3b3e44" stroke-width="0.35" letter-spacing="-0.4" text-anchor="middle" font-weight="normal" >09:00</text>
<line x1="2395.7" y1="448.6" x2="2395.7" y2="459.6" stroke="#cacaca" stroke-width="2"/>
<text x="2395.7" y="482.1" font-size="23" fill="#3b3e44" stroke="#3b3e44" stroke-width="0.35" letter-spacing="-0.4" text-anchor="middle" font-weight="normal" >10:00</text>
<line x1="2474.0" y1="448.6" x2="2474.0" y2="459.6" stroke="#cacaca" stroke-width="2"/>
<text x="2474.0" y="482.1" font-size="23" fill="#3b3e44" stroke="#3b3e44" stroke-width="0.35" letter-spacing="-0.4" text-anchor="middle" font-weight="normal" >11:00</text>
<line x1="2552.3" y1="448.6" x2="2552.3" y2="459.6" stroke="#cacaca" stroke-width="2"/>
<text x="2552.3" y="482.1" font-size="23" fill="#3b3e44" stroke="#3b3e44" stroke-width="0.35" letter-spacing="-0.4" text-anchor="middle" font-weight="normal" >12:00</text>
<line x1="2630.7" y1="448.6" x2="2630.7" y2="459.6" stroke="#cacaca" stroke-width="2"/>
<text x="2630.7" y="482.1" font-size="23" fill="#3b3e44" stroke="#3b3e44" stroke-width="0.35" letter-spacing="-0.4" text-anchor="middle" font-weight="normal" >13:00</text>
<line x1="2709.0" y1="448.6" x2="2709.0" y2="459.6" stroke="#cacaca" stroke-width="2"/>
<text x="2709.0" y="482.1" font-size="23" fill="#3b3e44" stroke="#3b3e44" stroke-width="0.35" letter-spacing="-0.4" text-anchor="middle" font-weight="normal" >14:00</text>
<polygon points="2143.5,441.8 2147.2,426.6 2150.9,442.7 2154.7,440.2 2158.4,443.0 2162.1,440.9 2165.8,439.4 2169.6,442.7 2173.3,440.1 2177.0,432.2 2180.7,428.0 2184.5,430.9 2188.2,434.6 2191.9,440.9 2195.6,444.3 2199.4,440.0 2203.1,440.7 2206.8,435.9 2210.5,440.6 2214.3,443.0 2218.0,443.1 2221.7,428.1 2225.4,442.4 2229.2,442.9 2232.9,441.9 2236.6,441.6 2240.3,439.6 2244.1,441.8 2247.8,426.9 2251.5,442.0 2255.2,442.0 2259.0,440.7 2262.7,443.8 2266.4,430.5 2270.1,439.5 2273.9,441.1 2277.6,442.4 2281.3,439.2 2285.0,434.4 2288.8,443.6 2292.5,440.6 2296.2,440.8 2299.9,440.3 2303.7,443.0 2307.4,438.8 2311.1,441.7 2314.8,442.8 2318.6,440.5 2322.3,438.8 2326.0,441.9 2329.7,441.8 2333.5,426.7 2337.2,441.8 2340.9,442.1 2344.6,439.5 2348.4,443.6 2352.1,433.8 2355.8,439.4 2359.5,439.6 2363.3,439.5 2367.0,443.1 2370.7,441.4 2374.4,439.8 2378.2,441.1 2381.9,441.6 2385.6,440.2 2389.3,443.2 2393.1,432.5 2396.8,441.5 2400.5,442.5 2404.2,441.3 2408.0,434.6 2411.7,431.6 2415.4,443.0 2419.1,430.7 2422.9,443.8 2426.6,443.2 2430.3,443.7 2434.0,443.7 2437.8,440.3 2441.5,440.8 2445.2,428.1 2448.9,439.9 2452.7,439.8 2456.4,443.0 2460.1,443.7 2463.8,440.7 2467.6,437.0 2471.3,439.8 2475.0,440.4 2478.7,441.7 2482.5,442.8 2486.2,439.5 2489.9,440.9 2493.6,442.1 2497.4,442.9 2501.1,442.3 2504.8,441.5 2508.5,440.8 2512.3,441.2 2516.0,442.7 2519.7,441.1 2523.4,441.5 2527.2,426.0 2530.9,442.8 2534.6,440.6 2538.3,441.1 2542.1,440.1 2545.8,441.9 2549.5,441.9 2553.2,438.4 2557.0,441.5 2560.7,433.2 2564.4,430.8 2568.1,430.5 2571.9,436.6 2575.6,442.2 2579.3,444.4 2583.0,429.9 2586.8,442.0 2590.5,433.4 2594.2,423.5 2597.9,443.8 2601.7,440.3 2605.4,428.7 2609.1,442.1 2612.8,441.8 2616.6,442.9 2620.3,441.2 2624.0,443.4 2627.7,440.6 2631.5,436.7 2635.2,443.4 2638.9,440.2 2642.6,439.9 2646.4,439.9 2650.1,442.9 2653.8,443.1 2657.5,433.0 2661.3,441.1 2665.0,441.2 2668.7,442.5 2672.4,441.2 2676.2,441.5 2679.9,438.9 2683.6,443.4 2687.3,438.9 2691.1,443.1 2694.8,442.9 2698.5,437.6 2702.2,428.4 2706.0,437.1 2709.7,442.0 2713.4,428.2 2717.1,427.6 2720.9,441.2 2724.6,436.5 2728.3,443.1 2732.0,438.8 2735.8,440.3 2739.5,443.3 2743.2,431.7 2746.9,440.2 2750.7,440.7 2754.4,438.8 2758.1,441.1 2761.8,440.2 2765.6,440.6 2769.3,431.5 2773.0,440.0 2773.0,445.6 2769.3,446.8 2765.6,444.9 2761.8,445.9 2758.1,445.2 2754.4,444.8 2750.7,445.5 2746.9,445.3 2743.2,446.6 2739.5,446.7 2735.8,445.9 2732.0,444.8 2728.3,446.8 2724.6,440.2 2720.9,444.8 2717.1,444.1 2713.4,445.4 2709.7,446.9 2706.0,442.4 2702.2,446.6 2698.5,441.5 2694.8,445.4 2691.1,446.4 2687.3,444.4 2683.6,446.4 2679.9,444.8 2676.2,444.6 2672.4,445.6 2668.7,446.9 2665.0,445.7 2661.3,446.3 2657.5,446.4 2653.8,447.3 2650.1,446.6 2646.4,445.9 2642.6,445.8 2638.9,442.8 2635.2,447.0 2631.5,447.0 2627.7,446.7 2624.0,446.1 2620.3,445.6 2616.6,445.4 2612.8,447.2 2609.1,445.0 2605.4,445.8 2601.7,445.1 2597.9,446.8 2594.2,445.3 2590.5,446.4 2586.8,446.2 2583.0,444.9 2579.3,446.7 2575.6,446.9 2571.9,441.8 2568.1,445.4 2564.4,445.5 2560.7,445.4 2557.0,445.1 2553.2,444.3 2549.5,445.4 2545.8,445.6 2542.1,445.9 2538.3,445.9 2534.6,446.3 2530.9,446.5 2527.2,445.1 2523.4,444.9 2519.7,445.5 2516.0,445.1 2512.3,447.1 2508.5,446.4 2504.8,445.8 2501.1,445.2 2497.4,446.9 2493.6,446.1 2489.9,444.7 2486.2,445.6 2482.5,445.8 2478.7,446.0 2475.0,445.0 2471.3,445.7 2467.6,441.1 2463.8,446.4 2460.1,446.0 2456.4,446.4 2452.7,445.3 2448.9,445.2 2445.2,445.6 2441.5,446.6 2437.8,445.0 2434.0,446.2 2430.3,447.6 2426.6,446.4 2422.9,446.5 2419.1,446.3 2415.4,445.4 2411.7,445.8 2408.0,440.7 2404.2,446.6 2400.5,445.0 2396.8,445.8 2393.1,446.7 2389.3,446.4 2385.6,445.5 2381.9,445.7 2378.2,446.6 2374.4,444.2 2370.7,445.4 2367.0,446.0 2363.3,445.2 2359.5,445.6 2355.8,444.6 2352.1,445.5 2348.4,446.3 2344.6,444.7 2340.9,445.7 2337.2,445.2 2333.5,445.6 2329.7,445.2 2326.0,444.5 2322.3,444.7 2318.6,446.3 2314.8,446.6 2311.1,445.8 2307.4,444.6 2303.7,446.9 2299.9,446.2 2296.2,446.9 2292.5,445.7 2288.8,446.5 2285.0,446.8 2281.3,445.3 2277.6,445.6 2273.9,445.9 2270.1,444.6 2266.4,446.7 2262.7,446.4 2259.0,444.8 2255.2,445.1 2251.5,446.5 2247.8,446.0 2244.1,445.4 2240.3,444.8 2236.6,446.3 2232.9,445.1 2229.2,445.5 2225.4,445.4 2221.7,447.4 2218.0,445.7 2214.3,446.0 2210.5,445.9 2206.8,441.1 2203.1,445.2 2199.4,446.0 2195.6,446.7 2191.9,445.7 2188.2,445.6 2184.5,446.7 2180.7,446.2 2177.0,446.3 2173.3,445.2 2169.6,446.7 2165.8,445.0 2162.1,446.5 2158.4,445.6 2154.7,445.4 2150.9,445.1 2147.2,444.5 2143.5,446.8" fill="#e8dff0" />
<polygon points="2143.5,446.8 2147.2,444.5 2150.9,445.1 2154.7,445.4 2158.4,445.6 2162.1,446.5 2165.8,445.0 2169.6,446.7 2173.3,445.2 2177.0,446.3 2180.7,446.2 2184.5,446.7 2188.2,445.6 2191.9,445.7 2195.6,446.7 2199.4,446.0 2203.1,445.2 2206.8,441.1 2210.5,445.9 2214.3,446.0 2218.0,445.7 2221.7,447.4 2225.4,445.4 2229.2,445.5 2232.9,445.1 2236.6,446.3 2240.3,444.8 2244.1,445.4 2247.8,446.0 2251.5,446.5 2255.2,445.1 2259.0,444.8 2262.7,446.4 2266.4,446.7 2270.1,444.6 2273.9,445.9 2277.6,445.6 2281.3,445.3 2285.0,446.8 2288.8,446.5 2292.5,445.7 2296.2,446.9 2299.9,446.2 2303.7,446.9 2307.4,444.6 2311.1,445.8 2314.8,446.6 2318.6,446.3 2322.3,444.7 2326.0,444.5 2329.7,445.2 2333.5,445.6 2337.2,445.2 2340.9,445.7 2344.6,444.7 2348.4,446.3 2352.1,445.5 2355.8,444.6 2359.5,445.6 2363.3,445.2 2367.0,446.0 2370.7,445.4 2374.4,444.2 2378.2,446.6 2381.9,445.7 2385.6,445.5 2389.3,446.4 2393.1,446.7 2396.8,445.8 2400.5,445.0 2404.2,446.6 2408.0,440.7 2411.7,445.8 2415.4,445.4 2419.1,446.3 2422.9,446.5 2426.6,446.4 2430.3,447.6 2434.0,446.2 2437.8,445.0 2441.5,446.6 2445.2,445.6 2448.9,445.2 2452.7,445.3 2456.4,446.4 2460.1,446.0 2463.8,446.4 2467.6,441.1 2471.3,445.7 2475.0,445.0 2478.7,446.0 2482.5,445.8 2486.2,445.6 2489.9,444.7 2493.6,446.1 2497.4,446.9 2501.1,445.2 2504.8,445.8 2508.5,446.4 2512.3,447.1 2516.0,445.1 2519.7,445.5 2523.4,444.9 2527.2,445.1 2530.9,446.5 2534.6,446.3 2538.3,445.9 2542.1,445.9 2545.8,445.6 2549.5,445.4 2553.2,444.3 2557.0,445.1 2560.7,445.4 2564.4,445.5 2568.1,445.4 2571.9,441.8 2575.6,446.9 2579.3,446.7 2583.0,444.9 2586.8,446.2 2590.5,446.4 2594.2,445.3 2597.9,446.8 2601.7,445.1 2605.4,445.8 2609.1,445.0 2612.8,447.2 2616.6,445.4 2620.3,445.6 2624.0,446.1 2627.7,446.7 2631.5,447.0 2635.2,447.0 2638.9,442.8 2642.6,445.8 2646.4,445.9 2650.1,446.6 2653.8,447.3 2657.5,446.4 2661.3,446.3 2665.0,445.7 2668.7,446.9 2672.4,445.6 2676.2,444.6 2679.9,444.8 2683.6,446.4 2687.3,444.4 2691.1,446.4 2694.8,445.4 2698.5,441.5 2702.2,446.6 2706.0,442.4 2709.7,446.9 2713.4,445.4 2717.1,444.1 2720.9,444.8 2724.6,440.2 2728.3,446.8 2732.0,444.8 2735.8,445.9 2739.5,446.7 2743.2,446.6 2746.9,445.3 2750.7,445.5 2754.4,444.8 2758.1,445.2 2761.8,445.9 2765.6,444.9 2769.3,446.8 2773.0,445.6 2773.0,448.0 2769.3,448.1 2765.6,447.5 2761.8,447.5 2758.1,448.1 2754.4,447.4 2750.7,447.9 2746.9,448.2 2743.2,448.0 2739.5,447.6 2735.8,447.2 2732.0,447.8 2728.3,448.1 2724.6,447.8 2720.9,447.3 2717.1,447.1 2713.4,448.2 2709.7,447.6 2706.0,448.0 2702.2,447.3 2698.5,448.2 2694.8,447.7 2691.1,447.8 2687.3,447.0 2683.6,447.6 2679.9,447.7 2676.2,447.1 2672.4,448.0 2668.7,447.8 2665.0,447.9 2661.3,448.1 2657.5,447.5 2653.8,448.0 2650.1,448.2 2646.4,448.3 2642.6,447.6 2638.9,448.2 2635.2,448.1 2631.5,447.6 2627.7,448.3 2624.0,447.2 2620.3,447.3 2616.6,447.9 2612.8,447.9 2609.1,447.1 2605.4,447.3 2601.7,447.5 2597.9,447.9 2594.2,447.7 2590.5,447.8 2586.8,447.8 2583.0,447.2 2579.3,447.7 2575.6,447.7 2571.9,447.3 2568.1,447.8 2564.4,448.2 2560.7,448.0 2557.0,447.5 2553.2,447.2 2549.5,448.1 2545.8,448.0 2542.1,447.3 2538.3,447.8 2534.6,447.5 2530.9,447.3 2527.2,447.7 2523.4,447.7 2519.7,447.5 2516.0,447.3 2512.3,447.8 2508.5,447.5 2504.8,447.7 2501.1,447.4 2497.4,447.6 2493.6,448.2 2489.9,447.5 2486.2,447.9 2482.5,447.9 2478.7,447.9 2475.0,447.9 2471.3,448.2 2467.6,448.2 2463.8,447.5 2460.1,447.9 2456.4,448.0 2452.7,447.4 2448.9,447.8 2445.2,447.2 2441.5,447.7 2437.8,447.5 2434.0,447.0 2430.3,448.5 2426.6,447.9 2422.9,448.4 2419.1,447.7 2415.4,447.9 2411.7,447.6 2408.0,448.0 2404.2,447.8 2400.5,447.4 2396.8,448.3 2393.1,447.4 2389.3,447.8 2385.6,447.7 2381.9,447.8 2378.2,448.1 2374.4,447.1 2370.7,447.7 2367.0,447.1 2363.3,447.3 2359.5,447.6 2355.8,447.0 2352.1,447.3 2348.4,448.3 2344.6,447.7 2340.9,447.0 2337.2,447.4 2333.5,447.0 2329.7,447.7 2326.0,447.5 2322.3,447.5 2318.6,447.2 2314.8,447.9 2311.1,447.8 2307.4,447.5 2303.7,448.0 2299.9,447.9 2296.2,447.5 2292.5,447.7 2288.8,447.9 2285.0,447.6 2281.3,447.7 2277.6,446.9 2273.9,447.1 2270.1,447.4 2266.4,447.8 2262.7,447.5 2259.0,447.5 2255.2,447.4 2251.5,447.7 2247.8,447.7 2244.1,447.9 2240.3,447.5 2236.6,448.1 2232.9,447.7 2229.2,447.3 2225.4,447.2 2221.7,448.3 2218.0,447.1 2214.3,447.0 2210.5,447.7 2206.8,446.9 2203.1,447.2 2199.4,447.6 2195.6,448.0 2191.9,448.0 2188.2,447.0 2184.5,447.8 2180.7,447.3 2177.0,448.0 2173.3,448.0 2169.6,447.6 2165.8,447.9 2162.1,448.3 2158.4,447.9 2154.7,447.7 2150.9,447.5 2147.2,447.5 2143.5,447.6" fill="#d4ecd9" />
<polyline points="2143.5,448.4 2147.2,448.1 2150.9,448.3 2154.7,448.0 2158.4,448.0 2162.1,448.5 2165.8,448.6 2169.6,447.8 2173.3,448.4 2177.0,448.4 2180.7,447.7 2184.5,448.2 2188.2,447.8 2191.9,448.2 2195.6,448.0 2199.4,448.5 2203.1,448.0 2206.8,447.8 2210.5,448.1 2214.3,447.9 2218.0,448.0 2221.7,448.5 2225.4,447.9 2229.2,448.1 2232.9,448.3 2236.6,448.6 2240.3,447.8 2244.1,448.2 2247.8,447.9 2251.5,447.8 2255.2,447.9 2259.0,447.8 2262.7,448.2 2266.4,447.9 2270.1,448.2 2273.9,447.7 2277.6,447.8 2281.3,448.5 2285.0,448.5 2288.8,448.4 2292.5,447.7 2296.2,448.2 2299.9,448.0 2303.7,448.3 2307.4,448.1 2311.1,448.2 2314.8,448.3 2318.6,448.1 2322.3,448.1 2326.0,447.8 2329.7,448.0 2333.5,447.7 2337.2,447.8 2340.9,447.7 2344.6,448.0 2348.4,448.4 2352.1,447.8 2355.8,447.7 2359.5,447.8 2363.3,448.1 2367.0,447.9 2370.7,448.4 2374.4,447.8 2378.2,448.1 2381.9,448.3 2385.6,448.5 2389.3,447.8 2393.1,447.7 2396.8,448.5 2400.5,447.9 2404.2,448.2 2408.0,448.5 2411.7,448.3 2415.4,447.9 2419.1,447.8 2422.9,448.6 2426.6,448.0 2430.3,448.6 2434.0,447.9 2437.8,448.3 2441.5,447.8 2445.2,447.7 2448.9,448.1 2452.7,447.7 2456.4,448.3 2460.1,448.5 2463.8,448.0 2467.6,448.6 2471.3,448.4 2475.0,448.2 2478.7,448.0 2482.5,448.5 2486.2,448.6 2489.9,447.8 2493.6,448.3 2497.4,447.7 2501.1,447.8 2504.8,448.3 2508.5,448.2 2512.3,448.1 2516.0,448.0 2519.7,448.1 2523.4,448.1 2527.2,448.0 2530.9,447.7 2534.6,448.1 2538.3,448.2 2542.1,447.9 2545.8,448.4 2549.5,448.3 2553.2,447.7 2557.0,448.1 2560.7,448.1 2564.4,448.6 2568.1,448.2 2571.9,448.1 2575.6,448.6 2579.3,448.0 2583.0,448.0 2586.8,448.5 2590.5,448.0 2594.2,448.2 2597.9,448.0 2601.7,448.3 2605.4,447.9 2609.1,447.9 2612.8,448.6 2616.6,448.5 2620.3,448.0 2624.0,447.7 2627.7,448.4 2631.5,448.2 2635.2,448.1 2638.9,448.3 2642.6,448.3 2646.4,448.3 2650.1,448.3 2653.8,448.1 2657.5,448.3 2661.3,448.3 2665.0,447.9 2668.7,448.6 2672.4,448.1 2676.2,447.9 2679.9,448.3 2683.6,448.4 2687.3,447.9 2691.1,448.4 2694.8,448.4 2698.5,448.2 2702.2,448.0 2706.0,448.5 2709.7,448.3 2713.4,448.3 2717.1,447.8 2720.9,448.2 2724.6,447.8 2728.3,448.4 2732.0,448.3 2735.8,448.0 2739.5,447.8 2743.2,448.2 2746.9,448.4 2750.7,448.5 2754.4,448.1 2758.1,448.4 2761.8,447.9 2765.6,447.8 2769.3,448.4 2773.0,448.3" fill="none" stroke="#3d7fc4" stroke-width="3" stroke-linejoin="round" />
<polyline points="2143.5,447.6 2147.2,447.5 2150.9,447.5 2154.7,447.7 2158.4,447.9 2162.1,448.3 2165.8,447.9 2169.6,447.6 2173.3,448.0 2177.0,448.0 2180.7,447.3 2184.5,447.8 2188.2,447.0 2191.9,448.0 2195.6,448.0 2199.4,447.6 2203.1,447.2 2206.8,446.9 2210.5,447.7 2214.3,447.0 2218.0,447.1 2221.7,448.3 2225.4,447.2 2229.2,447.3 2232.9,447.7 2236.6,448.1 2240.3,447.5 2244.1,447.9 2247.8,447.7 2251.5,447.7 2255.2,447.4 2259.0,447.5 2262.7,447.5 2266.4,447.8 2270.1,447.4 2273.9,447.1 2277.6,446.9 2281.3,447.7 2285.0,447.6 2288.8,447.9 2292.5,447.7 2296.2,447.5 2299.9,447.9 2303.7,448.0 2307.4,447.5 2311.1,447.8 2314.8,447.9 2318.6,447.2 2322.3,447.5 2326.0,447.5 2329.7,447.7 2333.5,447.0 2337.2,447.4 2340.9,447.0 2344.6,447.7 2348.4,448.3 2352.1,447.3 2355.8,447.0 2359.5,447.6 2363.3,447.3 2367.0,447.1 2370.7,447.7 2374.4,447.1 2378.2,448.1 2381.9,447.8 2385.6,447.7 2389.3,447.8 2393.1,447.4 2396.8,448.3 2400.5,447.4 2404.2,447.8 2408.0,448.0 2411.7,447.6 2415.4,447.9 2419.1,447.7 2422.9,448.4 2426.6,447.9 2430.3,448.5 2434.0,447.0 2437.8,447.5 2441.5,447.7 2445.2,447.2 2448.9,447.8 2452.7,447.4 2456.4,448.0 2460.1,447.9 2463.8,447.5 2467.6,448.2 2471.3,448.2 2475.0,447.9 2478.7,447.9 2482.5,447.9 2486.2,447.9 2489.9,447.5 2493.6,448.2 2497.4,447.6 2501.1,447.4 2504.8,447.7 2508.5,447.5 2512.3,447.8 2516.0,447.3 2519.7,447.5 2523.4,447.7 2527.2,447.7 2530.9,447.3 2534.6,447.5 2538.3,447.8 2542.1,447.3 2545.8,448.0 2549.5,448.1 2553.2,447.2 2557.0,447.5 2560.7,448.0 2564.4,448.2 2568.1,447.8 2571.9,447.3 2575.6,447.7 2579.3,447.7 2583.0,447.2 2586.8,447.8 2590.5,447.8 2594.2,447.7 2597.9,447.9 2601.7,447.5 2605.4,447.3 2609.1,447.1 2612.8,447.9 2616.6,447.9 2620.3,447.3 2624.0,447.2 2627.7,448.3 2631.5,447.6 2635.2,448.1 2638.9,448.2 2642.6,447.6 2646.4,448.3 2650.1,448.2 2653.8,448.0 2657.5,447.5 2661.3,448.1 2665.0,447.9 2668.7,447.8 2672.4,448.0 2676.2,447.1 2679.9,447.7 2683.6,447.6 2687.3,447.0 2691.1,447.8 2694.8,447.7 2698.5,448.2 2702.2,447.3 2706.0,448.0 2709.7,447.6 2713.4,448.2 2717.1,447.1 2720.9,447.3 2724.6,447.8 2728.3,448.1 2732.0,447.8 2735.8,447.2 2739.5,447.6 2743.2,448.0 2746.9,448.2 2750.7,447.9 2754.4,447.4 2758.1,448.1 2761.8,447.5 2765.6,447.5 2769.3,448.1 2773.0,448.0" fill="none" stroke="#e07f38" stroke-width="3" stroke-linejoin="round" />
<polyline points="2143.5,446.8 2147.2,444.5 2150.9,445.1 2154.7,445.4 2158.4,445.6 2162.1,446.5 2165.8,445.0 2169.6,446.7 2173.3,445.2 2177.0,446.3 2180.7,446.2 2184.5,446.7 2188.2,445.6 2191.9,445.7 2195.6,446.7 2199.4,446.0 2203.1,445.2 2206.8,441.1 2210.5,445.9 2214.3,446.0 2218.0,445.7 2221.7,447.4 2225.4,445.4 2229.2,445.5 2232.9,445.1 2236.6,446.3 2240.3,444.8 2244.1,445.4 2247.8,446.0 2251.5,446.5 2255.2,445.1 2259.0,444.8 2262.7,446.4 2266.4,446.7 2270.1,444.6 2273.9,445.9 2277.6,445.6 2281.3,445.3 2285.0,446.8 2288.8,446.5 2292.5,445.7 2296.2,446.9 2299.9,446.2 2303.7,446.9 2307.4,444.6 2311.1,445.8 2314.8,446.6 2318.6,446.3 2322.3,444.7 2326.0,444.5 2329.7,445.2 2333.5,445.6 2337.2,445.2 2340.9,445.7 2344.6,444.7 2348.4,446.3 2352.1,445.5 2355.8,444.6 2359.5,445.6 2363.3,445.2 2367.0,446.0 2370.7,445.4 2374.4,444.2 2378.2,446.6 2381.9,445.7 2385.6,445.5 2389.3,446.4 2393.1,446.7 2396.8,445.8 2400.5,445.0 2404.2,446.6 2408.0,440.7 2411.7,445.8 2415.4,445.4 2419.1,446.3 2422.9,446.5 2426.6,446.4 2430.3,447.6 2434.0,446.2 2437.8,445.0 2441.5,446.6 2445.2,445.6 2448.9,445.2 2452.7,445.3 2456.4,446.4 2460.1,446.0 2463.8,446.4 2467.6,441.1 2471.3,445.7 2475.0,445.0 2478.7,446.0 2482.5,445.8 2486.2,445.6 2489.9,444.7 2493.6,446.1 2497.4,446.9 2501.1,445.2 2504.8,445.8 2508.5,446.4 2512.3,447.1 2516.0,445.1 2519.7,445.5 2523.4,444.9 2527.2,445.1 2530.9,446.5 2534.6,446.3 2538.3,445.9 2542.1,445.9 2545.8,445.6 2549.5,445.4 2553.2,444.3 2557.0,445.1 2560.7,445.4 2564.4,445.5 2568.1,445.4 2571.9,441.8 2575.6,446.9 2579.3,446.7 2583.0,444.9 2586.8,446.2 2590.5,446.4 2594.2,445.3 2597.9,446.8 2601.7,445.1 2605.4,445.8 2609.1,445.0 2612.8,447.2 2616.6,445.4 2620.3,445.6 2624.0,446.1 2627.7,446.7 2631.5,447.0 2635.2,447.0 2638.9,442.8 2642.6,445.8 2646.4,445.9 2650.1,446.6 2653.8,447.3 2657.5,446.4 2661.3,446.3 2665.0,445.7 2668.7,446.9 2672.4,445.6 2676.2,444.6 2679.9,444.8 2683.6,446.4 2687.3,444.4 2691.1,446.4 2694.8,445.4 2698.5,441.5 2702.2,446.6 2706.0,442.4 2709.7,446.9 2713.4,445.4 2717.1,444.1 2720.9,444.8 2724.6,440.2 2728.3,446.8 2732.0,444.8 2735.8,445.9 2739.5,446.7 2743.2,446.6 2746.9,445.3 2750.7,445.5 2754.4,444.8 2758.1,445.2 2761.8,445.9 2765.6,444.9 2769.3,446.8 2773.0,445.6" fill="none" stroke="#55a868" stroke-width="4" stroke-linejoin="round" />
<polyline points="2143.5,441.8 2147.2,426.6 2150.9,442.7 2154.7,440.2 2158.4,443.0 2162.1,440.9 2165.8,439.4 2169.6,442.7 2173.3,440.1 2177.0,432.2 2180.7,428.0 2184.5,430.9 2188.2,434.6 2191.9,440.9 2195.6,444.3 2199.4,440.0 2203.1,440.7 2206.8,435.9 2210.5,440.6 2214.3,443.0 2218.0,443.1 2221.7,428.1 2225.4,442.4 2229.2,442.9 2232.9,441.9 2236.6,441.6 2240.3,439.6 2244.1,441.8 2247.8,426.9 2251.5,442.0 2255.2,442.0 2259.0,440.7 2262.7,443.8 2266.4,430.5 2270.1,439.5 2273.9,441.1 2277.6,442.4 2281.3,439.2 2285.0,434.4 2288.8,443.6 2292.5,440.6 2296.2,440.8 2299.9,440.3 2303.7,443.0 2307.4,438.8 2311.1,441.7 2314.8,442.8 2318.6,440.5 2322.3,438.8 2326.0,441.9 2329.7,441.8 2333.5,426.7 2337.2,441.8 2340.9,442.1 2344.6,439.5 2348.4,443.6 2352.1,433.8 2355.8,439.4 2359.5,439.6 2363.3,439.5 2367.0,443.1 2370.7,441.4 2374.4,439.8 2378.2,441.1 2381.9,441.6 2385.6,440.2 2389.3,443.2 2393.1,432.5 2396.8,441.5 2400.5,442.5 2404.2,441.3 2408.0,434.6 2411.7,431.6 2415.4,443.0 2419.1,430.7 2422.9,443.8 2426.6,443.2 2430.3,443.7 2434.0,443.7 2437.8,440.3 2441.5,440.8 2445.2,428.1 2448.9,439.9 2452.7,439.8 2456.4,443.0 2460.1,443.7 2463.8,440.7 2467.6,437.0 2471.3,439.8 2475.0,440.4 2478.7,441.7 2482.5,442.8 2486.2,439.5 2489.9,440.9 2493.6,442.1 2497.4,442.9 2501.1,442.3 2504.8,441.5 2508.5,440.8 2512.3,441.2 2516.0,442.7 2519.7,441.1 2523.4,441.5 2527.2,426.0 2530.9,442.8 2534.6,440.6 2538.3,441.1 2542.1,440.1 2545.8,441.9 2549.5,441.9 2553.2,438.4 2557.0,441.5 2560.7,433.2 2564.4,430.8 2568.1,430.5 2571.9,436.6 2575.6,442.2 2579.3,444.4 2583.0,429.9 2586.8,442.0 2590.5,433.4 2594.2,423.5 2597.9,443.8 2601.7,440.3 2605.4,428.7 2609.1,442.1 2612.8,441.8 2616.6,442.9 2620.3,441.2 2624.0,443.4 2627.7,440.6 2631.5,436.7 2635.2,443.4 2638.9,440.2 2642.6,439.9 2646.4,439.9 2650.1,442.9 2653.8,443.1 2657.5,433.0 2661.3,441.1 2665.0,441.2 2668.7,442.5 2672.4,441.2 2676.2,441.5 2679.9,438.9 2683.6,443.4 2687.3,438.9 2691.1,443.1 2694.8,442.9 2698.5,437.6 2702.2,428.4 2706.0,437.1 2709.7,442.0 2713.4,428.2 2717.1,427.6 2720.9,441.2 2724.6,436.5 2728.3,443.1 2732.0,438.8 2735.8,440.3 2739.5,443.3 2743.2,431.7 2746.9,440.2 2750.7,440.7 2754.4,438.8 2758.1,441.1 2761.8,440.2 2765.6,440.6 2769.3,431.5 2773.0,440.0" fill="none" stroke="#9b6fc6" stroke-width="3.8" stroke-linejoin="round" />
<rect x="2533" y="214.6" width="7.4" height="234" fill="#cd6455" fill-opacity="0.95"/>
<polygon points="2762.0,464.0 2770.0,451.0 2778.0,464.0" fill="#5a93e4"/>
<text x="2090.0" y="945.0" font-size="32.5" fill="#35383e" stroke="#35383e" stroke-width="0.75" letter-spacing="-0.75">Zoom (Branch SD-WAN 1)<tspan dx="11" font-size="24" stroke="none" fill="#9a9ba0" letter-spacing="0">(HTTP Duration)</tspan></text>
<line x1="2142.5" y1="1212.6" x2="2768.6" y2="1212.6" stroke="#cacaca" stroke-width="2"/>
<text x="2129.6" y="1221.6" font-size="23" fill="#3b3e44" stroke="#3b3e44" stroke-width="0.35" letter-spacing="-0.4" text-anchor="end" font-weight="normal" >0 s</text>
<line x1="2142.5" y1="1182.0" x2="2768.6" y2="1182.0" stroke="#cacaca" stroke-width="2"/>
<text x="2129.6" y="1191.0" font-size="23" fill="#3b3e44" stroke="#3b3e44" stroke-width="0.35" letter-spacing="-0.4" text-anchor="end" font-weight="normal" >0.20 s</text>
<line x1="2142.5" y1="1151.3" x2="2768.6" y2="1151.3" stroke="#cacaca" stroke-width="2"/>
<text x="2129.6" y="1160.3" font-size="23" fill="#3b3e44" stroke="#3b3e44" stroke-width="0.35" letter-spacing="-0.4" text-anchor="end" font-weight="normal" >0.40 s</text>
<line x1="2142.5" y1="1120.6" x2="2768.6" y2="1120.6" stroke="#cacaca" stroke-width="2"/>
<text x="2129.6" y="1129.6" font-size="23" fill="#3b3e44" stroke="#3b3e44" stroke-width="0.35" letter-spacing="-0.4" text-anchor="end" font-weight="normal" >0.60 s</text>
<line x1="2142.5" y1="1090.0" x2="2768.6" y2="1090.0" stroke="#cacaca" stroke-width="2"/>
<text x="2129.6" y="1099.0" font-size="23" fill="#3b3e44" stroke="#3b3e44" stroke-width="0.35" letter-spacing="-0.4" text-anchor="end" font-weight="normal" >0.80 s</text>
<line x1="2142.5" y1="1059.0" x2="2768.6" y2="1059.0" stroke="#cacaca" stroke-width="2"/>
<text x="2129.6" y="1068.0" font-size="23" fill="#3b3e44" stroke="#3b3e44" stroke-width="0.35" letter-spacing="-0.4" text-anchor="end" font-weight="normal" >1 s</text>
<line x1="2142.5" y1="1028.7" x2="2768.6" y2="1028.7" stroke="#cacaca" stroke-width="2"/>
<text x="2129.6" y="1037.7" font-size="23" fill="#3b3e44" stroke="#3b3e44" stroke-width="0.35" letter-spacing="-0.4" text-anchor="end" font-weight="normal" >1.20 s</text>
<line x1="2142.5" y1="998.0" x2="2768.6" y2="998.0" stroke="#cacaca" stroke-width="2"/>
<text x="2129.6" y="1007.0" font-size="23" fill="#3b3e44" stroke="#3b3e44" stroke-width="0.35" letter-spacing="-0.4" text-anchor="end" font-weight="normal" >1.40 s</text>
<line x1="2160.6" y1="1212.6" x2="2160.6" y2="1223.6" stroke="#cacaca" stroke-width="2"/>
<text x="2160.6" y="1246.1" font-size="23" fill="#3b3e44" stroke="#3b3e44" stroke-width="0.35" letter-spacing="-0.4" text-anchor="middle" font-weight="normal" >07:00</text>
<line x1="2238.9" y1="1212.6" x2="2238.9" y2="1223.6" stroke="#cacaca" stroke-width="2"/>
<text x="2238.9" y="1246.1" font-size="23" fill="#3b3e44" stroke="#3b3e44" stroke-width="0.35" letter-spacing="-0.4" text-anchor="middle" font-weight="normal" >08:00</text>
<line x1="2317.3" y1="1212.6" x2="2317.3" y2="1223.6" stroke="#cacaca" stroke-width="2"/>
<text x="2317.3" y="1246.1" font-size="23" fill="#3b3e44" stroke="#3b3e44" stroke-width="0.35" letter-spacing="-0.4" text-anchor="middle" font-weight="normal" >09:00</text>
<line x1="2395.7" y1="1212.6" x2="2395.7" y2="1223.6" stroke="#cacaca" stroke-width="2"/>
<text x="2395.7" y="1246.1" font-size="23" fill="#3b3e44" stroke="#3b3e44" stroke-width="0.35" letter-spacing="-0.4" text-anchor="middle" font-weight="normal" >10:00</text>
<line x1="2474.0" y1="1212.6" x2="2474.0" y2="1223.6" stroke="#cacaca" stroke-width="2"/>
<text x="2474.0" y="1246.1" font-size="23" fill="#3b3e44" stroke="#3b3e44" stroke-width="0.35" letter-spacing="-0.4" text-anchor="middle" font-weight="normal" >11:00</text>
<line x1="2552.3" y1="1212.6" x2="2552.3" y2="1223.6" stroke="#cacaca" stroke-width="2"/>
<text x="2552.3" y="1246.1" font-size="23" fill="#3b3e44" stroke="#3b3e44" stroke-width="0.35" letter-spacing="-0.4" text-anchor="middle" font-weight="normal" >12:00</text>
<line x1="2630.7" y1="1212.6" x2="2630.7" y2="1223.6" stroke="#cacaca" stroke-width="2"/>
<text x="2630.7" y="1246.1" font-size="23" fill="#3b3e44" stroke="#3b3e44" stroke-width="0.35" letter-spacing="-0.4" text-anchor="middle" font-weight="normal" >13:00</text>
<line x1="2709.0" y1="1212.6" x2="2709.0" y2="1223.6" stroke="#cacaca" stroke-width="2"/>
<text x="2709.0" y="1246.1" font-size="23" fill="#3b3e44" stroke="#3b3e44" stroke-width="0.35" letter-spacing="-0.4" text-anchor="middle" font-weight="normal" >14:00</text>
<polygon points="2143.5,1194.2 2147.2,1183.3 2150.9,1198.1 2154.7,1196.9 2158.4,1198.3 2162.1,1179.9 2165.8,1197.1 2169.6,1178.5 2173.3,1195.4 2177.0,1185.6 2180.7,1195.3 2184.5,1191.9 2188.2,1191.4 2191.9,1190.6 2195.6,1195.3 2199.4,1181.9 2203.1,1185.5 2206.8,1194.8 2210.5,1199.3 2214.3,1194.8 2218.0,1198.4 2221.7,1196.1 2225.4,1195.3 2229.2,1196.5 2232.9,1195.4 2236.6,1190.7 2240.3,1190.1 2244.1,1197.5 2247.8,1194.8 2251.5,1196.2 2255.2,1169.7 2259.0,1040.9 2262.7,1161.1 2266.4,1190.4 2270.1,1194.8 2273.9,1190.1 2277.6,1192.1 2281.3,1191.2 2285.0,1196.8 2288.8,1191.0 2292.5,1181.9 2296.2,1195.0 2299.9,1188.0 2303.7,1189.4 2307.4,1193.2 2311.1,1191.7 2314.8,1188.5 2318.6,1192.9 2322.3,1197.4 2326.0,1197.9 2329.7,1193.4 2333.5,1192.1 2337.2,1180.2 2340.9,1191.6 2344.6,1189.4 2348.4,1195.5 2352.1,1191.4 2355.8,1188.7 2359.5,1195.8 2363.3,1194.0 2367.0,1192.4 2370.7,1194.7 2374.4,1190.8 2378.2,1196.4 2381.9,1189.2 2385.6,1191.6 2389.3,1194.5 2393.1,1198.5 2396.8,1195.3 2400.5,1189.1 2404.2,1191.5 2408.0,1190.9 2411.7,1194.1 2415.4,1196.9 2419.1,1196.1 2422.9,1193.3 2426.6,1197.0 2430.3,1197.2 2434.0,1188.5 2437.8,1195.4 2441.5,1198.5 2445.2,1191.0 2448.9,1191.9 2452.7,1191.0 2456.4,1194.8 2460.1,1194.1 2463.8,1195.8 2467.6,1188.0 2471.3,1191.0 2475.0,1192.5 2478.7,1178.9 2482.5,1184.6 2486.2,1193.4 2489.9,1181.4 2493.6,1193.3 2497.4,1185.1 2501.1,1196.1 2504.8,1162.0 2508.5,1194.7 2512.3,1191.2 2516.0,1194.4 2519.7,1160.1 2523.4,1002.6 2527.2,1149.6 2530.9,1196.9 2534.6,1167.4 2538.3,1031.7 2542.1,1158.3 2545.8,1196.5 2549.5,1196.7 2553.2,1198.5 2557.0,1188.4 2560.7,1193.3 2564.4,1193.1 2568.1,1196.4 2571.9,1190.9 2575.6,1185.2 2579.3,1182.9 2583.0,1193.7 2586.8,1193.8 2590.5,1177.3 2594.2,1192.8 2597.9,1195.7 2601.7,1197.1 2605.4,1196.0 2609.1,1190.8 2612.8,1175.8 2616.6,1197.9 2620.3,1194.4 2624.0,1190.7 2627.7,1198.4 2631.5,1191.9 2635.2,1193.5 2638.9,1193.8 2642.6,1197.2 2646.4,1192.7 2650.1,1192.2 2653.8,1181.1 2657.5,1177.3 2661.3,1194.6 2665.0,1193.2 2668.7,1191.4 2672.4,1191.4 2676.2,1192.7 2679.9,1193.4 2683.6,1195.3 2687.3,1191.1 2691.1,1196.6 2694.8,1195.3 2698.5,1192.3 2702.2,1151.3 2706.0,1194.2 2709.7,1188.7 2713.4,1191.5 2717.1,1194.3 2720.9,1200.0 2724.6,1192.5 2728.3,1194.7 2732.0,1195.4 2735.8,1193.1 2739.5,1195.6 2743.2,1194.7 2746.9,1188.7 2750.7,1178.9 2754.4,1194.8 2758.1,1193.6 2761.8,1196.7 2765.6,1195.4 2769.3,1192.8 2773.0,1193.9 2773.0,1198.3 2769.3,1198.1 2765.6,1202.2 2761.8,1201.8 2758.1,1201.8 2754.4,1202.6 2750.7,1195.3 2746.9,1196.8 2743.2,1200.4 2739.5,1201.4 2735.8,1200.3 2732.0,1204.3 2728.3,1203.8 2724.6,1199.5 2720.9,1203.3 2717.1,1201.1 2713.4,1199.1 2709.7,1202.2 2706.0,1202.5 2702.2,1181.9 2698.5,1200.8 2694.8,1199.3 2691.1,1200.5 2687.3,1199.5 2683.6,1200.4 2679.9,1198.2 2676.2,1200.1 2672.4,1199.1 2668.7,1199.6 2665.0,1197.1 2661.3,1200.5 2657.5,1200.3 2653.8,1200.3 2650.1,1200.0 2646.4,1200.1 2642.6,1202.7 2638.9,1199.0 2635.2,1199.8 2631.5,1198.8 2627.7,1201.6 2624.0,1195.2 2620.3,1200.5 2616.6,1203.6 2612.8,1199.3 2609.1,1196.9 2605.4,1200.3 2601.7,1202.0 2597.9,1201.7 2594.2,1199.7 2590.5,1196.3 2586.8,1202.2 2583.0,1199.6 2579.3,1201.6 2575.6,1193.2 2571.9,1198.8 2568.1,1201.1 2564.4,1197.8 2560.7,1201.2 2557.0,1194.9 2553.2,1203.0 2549.5,1200.6 2545.8,1200.1 2542.1,1202.5 2538.3,1122.2 2534.6,1197.9 2530.9,1201.6 2527.2,1199.1 2523.4,1107.6 2519.7,1202.1 2516.0,1201.8 2512.3,1199.5 2508.5,1200.2 2504.8,1187.3 2501.1,1202.7 2497.4,1193.4 2493.6,1199.4 2489.9,1199.2 2486.2,1202.2 2482.5,1202.7 2478.7,1204.4 2475.0,1200.4 2471.3,1200.1 2467.6,1201.3 2463.8,1202.5 2460.1,1200.2 2456.4,1198.7 2452.7,1198.0 2448.9,1199.1 2445.2,1199.4 2441.5,1202.0 2437.8,1199.3 2434.0,1204.0 2430.3,1200.7 2426.6,1201.3 2422.9,1200.8 2419.1,1201.0 2415.4,1200.2 2411.7,1202.3 2408.0,1198.2 2404.2,1198.7 2400.5,1197.1 2396.8,1201.7 2393.1,1201.8 2389.3,1201.5 2385.6,1200.7 2381.9,1198.0 2378.2,1203.4 2374.4,1197.8 2370.7,1201.1 2367.0,1200.7 2363.3,1201.1 2359.5,1201.8 2355.8,1194.4 2352.1,1197.9 2348.4,1200.8 2344.6,1194.6 2340.9,1197.5 2337.2,1199.9 2333.5,1197.6 2329.7,1200.2 2326.0,1201.9 2322.3,1201.1 2318.6,1201.7 2314.8,1197.0 2311.1,1199.6 2307.4,1201.6 2303.7,1196.1 2299.9,1195.1 2296.2,1200.6 2292.5,1201.1 2288.8,1197.8 2285.0,1202.0 2281.3,1196.6 2277.6,1197.1 2273.9,1197.8 2270.1,1200.2 2266.4,1197.7 2262.7,1194.6 2259.0,1126.8 2255.2,1199.5 2251.5,1203.1 2247.8,1200.1 2244.1,1203.7 2240.3,1194.1 2236.6,1196.6 2232.9,1203.3 2229.2,1200.4 2225.4,1200.1 2221.7,1199.8 2218.0,1202.1 2214.3,1200.5 2210.5,1202.7 2206.8,1199.5 2203.1,1198.9 2199.4,1197.2 2195.6,1199.9 2191.9,1199.0 2188.2,1200.1 2184.5,1199.8 2180.7,1200.8 2177.0,1201.8 2173.3,1201.5 2169.6,1197.5 2165.8,1201.9 2162.1,1200.5 2158.4,1201.8 2154.7,1203.1 2150.9,1202.1 2147.2,1204.4 2143.5,1200.0" fill="#e6dcef" />
<polygon points="2143.5,1200.0 2147.2,1204.4 2150.9,1202.1 2154.7,1203.1 2158.4,1201.8 2162.1,1200.5 2165.8,1201.9 2169.6,1197.5 2173.3,1201.5 2177.0,1201.8 2180.7,1200.8 2184.5,1199.8 2188.2,1200.1 2191.9,1199.0 2195.6,1199.9 2199.4,1197.2 2203.1,1198.9 2206.8,1199.5 2210.5,1202.7 2214.3,1200.5 2218.0,1202.1 2221.7,1199.8 2225.4,1200.1 2229.2,1200.4 2232.9,1203.3 2236.6,1196.6 2240.3,1194.1 2244.1,1203.7 2247.8,1200.1 2251.5,1203.1 2255.2,1199.5 2259.0,1126.8 2262.7,1194.6 2266.4,1197.7 2270.1,1200.2 2273.9,1197.8 2277.6,1197.1 2281.3,1196.6 2285.0,1202.0 2288.8,1197.8 2292.5,1201.1 2296.2,1200.6 2299.9,1195.1 2303.7,1196.1 2307.4,1201.6 2311.1,1199.6 2314.8,1197.0 2318.6,1201.7 2322.3,1201.1 2326.0,1201.9 2329.7,1200.2 2333.5,1197.6 2337.2,1199.9 2340.9,1197.5 2344.6,1194.6 2348.4,1200.8 2352.1,1197.9 2355.8,1194.4 2359.5,1201.8 2363.3,1201.1 2367.0,1200.7 2370.7,1201.1 2374.4,1197.8 2378.2,1203.4 2381.9,1198.0 2385.6,1200.7 2389.3,1201.5 2393.1,1201.8 2396.8,1201.7 2400.5,1197.1 2404.2,1198.7 2408.0,1198.2 2411.7,1202.3 2415.4,1200.2 2419.1,1201.0 2422.9,1200.8 2426.6,1201.3 2430.3,1200.7 2434.0,1204.0 2437.8,1199.3 2441.5,1202.0 2445.2,1199.4 2448.9,1199.1 2452.7,1198.0 2456.4,1198.7 2460.1,1200.2 2463.8,1202.5 2467.6,1201.3 2471.3,1200.1 2475.0,1200.4 2478.7,1204.4 2482.5,1202.7 2486.2,1202.2 2489.9,1199.2 2493.6,1199.4 2497.4,1193.4 2501.1,1202.7 2504.8,1187.3 2508.5,1200.2 2512.3,1199.5 2516.0,1201.8 2519.7,1202.1 2523.4,1107.6 2527.2,1199.1 2530.9,1201.6 2534.6,1197.9 2538.3,1122.2 2542.1,1202.5 2545.8,1200.1 2549.5,1200.6 2553.2,1203.0 2557.0,1194.9 2560.7,1201.2 2564.4,1197.8 2568.1,1201.1 2571.9,1198.8 2575.6,1193.2 2579.3,1201.6 2583.0,1199.6 2586.8,1202.2 2590.5,1196.3 2594.2,1199.7 2597.9,1201.7 2601.7,1202.0 2605.4,1200.3 2609.1,1196.9 2612.8,1199.3 2616.6,1203.6 2620.3,1200.5 2624.0,1195.2 2627.7,1201.6 2631.5,1198.8 2635.2,1199.8 2638.9,1199.0 2642.6,1202.7 2646.4,1200.1 2650.1,1200.0 2653.8,1200.3 2657.5,1200.3 2661.3,1200.5 2665.0,1197.1 2668.7,1199.6 2672.4,1199.1 2676.2,1200.1 2679.9,1198.2 2683.6,1200.4 2687.3,1199.5 2691.1,1200.5 2694.8,1199.3 2698.5,1200.8 2702.2,1181.9 2706.0,1202.5 2709.7,1202.2 2713.4,1199.1 2717.1,1201.1 2720.9,1203.3 2724.6,1199.5 2728.3,1203.8 2732.0,1204.3 2735.8,1200.3 2739.5,1201.4 2743.2,1200.4 2746.9,1196.8 2750.7,1195.3 2754.4,1202.6 2758.1,1201.8 2761.8,1201.8 2765.6,1202.2 2769.3,1198.1 2773.0,1198.3 2773.0,1207.7 2769.3,1208.8 2765.6,1208.9 2761.8,1210.6 2758.1,1209.5 2754.4,1210.6 2750.7,1201.7 2746.9,1206.5 2743.2,1207.7 2739.5,1207.7 2735.8,1207.3 2732.0,1210.7 2728.3,1210.1 2724.6,1207.6 2720.9,1210.8 2717.1,1209.3 2713.4,1207.1 2709.7,1209.8 2706.0,1210.4 2702.2,1185.0 2698.5,1209.7 2694.8,1207.9 2691.1,1207.1 2687.3,1207.9 2683.6,1210.7 2679.9,1207.7 2676.2,1206.8 2672.4,1207.4 2668.7,1209.2 2665.0,1207.4 2661.3,1208.7 2657.5,1208.8 2653.8,1207.2 2650.1,1208.5 2646.4,1209.6 2642.6,1209.0 2638.9,1208.6 2635.2,1210.4 2631.5,1205.8 2627.7,1209.3 2624.0,1203.6 2620.3,1209.4 2616.6,1209.8 2612.8,1206.6 2609.1,1206.7 2605.4,1209.9 2601.7,1209.4 2597.9,1208.3 2594.2,1206.2 2590.5,1209.4 2586.8,1209.2 2583.0,1208.7 2579.3,1209.5 2575.6,1203.7 2571.9,1208.5 2568.1,1211.0 2564.4,1205.2 2560.7,1210.0 2557.0,1207.2 2553.2,1210.2 2549.5,1208.4 2545.8,1208.6 2542.1,1210.8 2538.3,1131.2 2534.6,1208.2 2530.9,1209.7 2527.2,1209.0 2523.4,1118.1 2519.7,1211.2 2516.0,1208.3 2512.3,1207.9 2508.5,1207.3 2504.8,1189.8 2501.1,1210.4 2497.4,1207.7 2493.6,1208.5 2489.9,1209.6 2486.2,1210.9 2482.5,1210.5 2478.7,1210.6 2475.0,1210.2 2471.3,1211.0 2467.6,1207.7 2463.8,1209.7 2460.1,1209.7 2456.4,1210.2 2452.7,1206.8 2448.9,1209.0 2445.2,1209.1 2441.5,1208.3 2437.8,1209.4 2434.0,1210.2 2430.3,1209.8 2426.6,1210.3 2422.9,1210.0 2419.1,1211.2 2415.4,1209.8 2411.7,1210.0 2408.0,1208.6 2404.2,1208.4 2400.5,1207.7 2396.8,1210.4 2393.1,1209.1 2389.3,1208.3 2385.6,1210.3 2381.9,1207.7 2378.2,1209.6 2374.4,1204.5 2370.7,1209.2 2367.0,1208.5 2363.3,1209.5 2359.5,1209.0 2355.8,1203.5 2352.1,1204.2 2348.4,1208.2 2344.6,1203.6 2340.9,1207.7 2337.2,1208.0 2333.5,1207.6 2329.7,1210.4 2326.0,1208.5 2322.3,1209.1 2318.6,1210.9 2314.8,1207.2 2311.1,1209.1 2307.4,1208.3 2303.7,1207.6 2299.9,1207.9 2296.2,1208.8 2292.5,1209.5 2288.8,1207.4 2285.0,1208.1 2281.3,1204.3 2277.6,1207.8 2273.9,1207.3 2270.1,1210.9 2266.4,1207.4 2262.7,1208.8 2259.0,1135.3 2255.2,1207.5 2251.5,1210.4 2247.8,1208.7 2244.1,1209.9 2240.3,1207.5 2236.6,1211.1 2232.9,1210.9 2229.2,1210.5 2225.4,1209.2 2221.7,1207.2 2218.0,1209.2 2214.3,1208.0 2210.5,1210.2 2206.8,1207.7 2203.1,1208.3 2199.4,1207.7 2195.6,1208.7 2191.9,1207.6 2188.2,1208.4 2184.5,1208.8 2180.7,1209.4 2177.0,1211.4 2173.3,1209.1 2169.6,1206.1 2165.8,1208.8 2162.1,1206.9 2158.4,1208.5 2154.7,1210.5 2150.9,1209.7 2147.2,1211.0 2143.5,1208.1" fill="#d3ead9" />
<polyline points="2143.5,1212.4 2147.2,1212.5 2150.9,1212.2 2154.7,1212.5 2158.4,1212.5 2162.1,1212.2 2165.8,1211.8 2169.6,1211.9 2173.3,1211.9 2177.0,1212.4 2180.7,1212.1 2184.5,1212.3 2188.2,1212.4 2191.9,1212.5 2195.6,1212.4 2199.4,1211.7 2203.1,1211.8 2206.8,1211.9 2210.5,1211.9 2214.3,1212.4 2218.0,1212.3 2221.7,1212.0 2225.4,1211.9 2229.2,1211.8 2232.9,1211.8 2236.6,1212.5 2240.3,1212.0 2244.1,1212.0 2247.8,1212.1 2251.5,1212.4 2255.2,1212.2 2259.0,1212.5 2262.7,1211.7 2266.4,1211.8 2270.1,1212.1 2273.9,1212.3 2277.6,1211.8 2281.3,1212.1 2285.0,1211.8 2288.8,1211.8 2292.5,1212.1 2296.2,1212.2 2299.9,1212.0 2303.7,1212.2 2307.4,1212.5 2311.1,1212.3 2314.8,1211.9 2318.6,1212.6 2322.3,1212.6 2326.0,1212.0 2329.7,1212.3 2333.5,1212.1 2337.2,1212.2 2340.9,1212.3 2344.6,1211.7 2348.4,1212.4 2352.1,1212.2 2355.8,1212.4 2359.5,1212.0 2363.3,1212.3 2367.0,1212.3 2370.7,1211.9 2374.4,1212.3 2378.2,1212.1 2381.9,1211.8 2385.6,1212.5 2389.3,1212.5 2393.1,1212.4 2396.8,1211.9 2400.5,1212.0 2404.2,1212.4 2408.0,1212.3 2411.7,1212.4 2415.4,1212.2 2419.1,1212.6 2422.9,1212.0 2426.6,1211.8 2430.3,1211.7 2434.0,1211.9 2437.8,1211.7 2441.5,1212.6 2445.2,1212.3 2448.9,1211.7 2452.7,1211.9 2456.4,1212.2 2460.1,1211.7 2463.8,1212.0 2467.6,1211.8 2471.3,1212.3 2475.0,1212.4 2478.7,1212.2 2482.5,1212.5 2486.2,1212.2 2489.9,1211.7 2493.6,1212.3 2497.4,1212.6 2501.1,1212.6 2504.8,1212.4 2508.5,1211.9 2512.3,1212.3 2516.0,1212.3 2519.7,1212.5 2523.4,1211.7 2527.2,1212.2 2530.9,1212.4 2534.6,1212.5 2538.3,1212.5 2542.1,1212.4 2545.8,1212.0 2549.5,1212.5 2553.2,1212.6 2557.0,1212.1 2560.7,1212.4 2564.4,1211.7 2568.1,1212.5 2571.9,1212.1 2575.6,1211.9 2579.3,1212.2 2583.0,1211.7 2586.8,1212.2 2590.5,1212.4 2594.2,1212.2 2597.9,1212.6 2601.7,1212.2 2605.4,1212.4 2609.1,1211.8 2612.8,1211.8 2616.6,1212.1 2620.3,1212.6 2624.0,1212.4 2627.7,1212.4 2631.5,1212.4 2635.2,1212.4 2638.9,1211.8 2642.6,1212.5 2646.4,1212.6 2650.1,1211.7 2653.8,1212.1 2657.5,1211.7 2661.3,1212.2 2665.0,1211.8 2668.7,1212.0 2672.4,1211.9 2676.2,1211.9 2679.9,1212.1 2683.6,1212.5 2687.3,1212.4 2691.1,1211.8 2694.8,1211.8 2698.5,1211.7 2702.2,1212.3 2706.0,1212.0 2709.7,1211.9 2713.4,1212.0 2717.1,1211.9 2720.9,1212.1 2724.6,1212.0 2728.3,1212.0 2732.0,1212.4 2735.8,1211.8 2739.5,1211.7 2743.2,1212.5 2746.9,1211.7 2750.7,1211.7 2754.4,1212.0 2758.1,1212.6 2761.8,1211.8 2765.6,1212.5 2769.3,1211.7 2773.0,1212.0" fill="none" stroke="#3d7fc4" stroke-width="3" stroke-linejoin="round" />
<polyline points="2143.5,1212.3 2147.2,1212.4 2150.9,1211.7 2154.7,1211.9 2158.4,1211.9 2162.1,1211.4 2165.8,1211.6 2169.6,1211.9 2173.3,1211.0 2177.0,1212.4 2180.7,1211.3 2184.5,1212.2 2188.2,1211.7 2191.9,1211.8 2195.6,1211.6 2199.4,1211.2 2203.1,1211.0 2206.8,1211.7 2210.5,1211.2 2214.3,1212.1 2218.0,1211.5 2221.7,1211.3 2225.4,1211.5 2229.2,1211.3 2232.9,1211.8 2236.6,1212.5 2240.3,1211.5 2244.1,1211.5 2247.8,1211.3 2251.5,1211.9 2255.2,1212.0 2259.0,1212.2 2262.7,1211.0 2266.4,1211.3 2270.1,1212.1 2273.9,1211.6 2277.6,1211.0 2281.3,1212.0 2285.0,1211.3 2288.8,1211.5 2292.5,1211.4 2296.2,1211.9 2299.9,1211.8 2303.7,1211.8 2307.4,1211.6 2311.1,1212.2 2314.8,1211.7 2318.6,1212.0 2322.3,1211.7 2326.0,1211.6 2329.7,1211.9 2333.5,1211.3 2337.2,1211.5 2340.9,1212.2 2344.6,1210.9 2348.4,1212.2 2352.1,1211.9 2355.8,1211.6 2359.5,1211.6 2363.3,1211.6 2367.0,1212.1 2370.7,1211.1 2374.4,1212.1 2378.2,1211.9 2381.9,1211.3 2385.6,1212.2 2389.3,1212.0 2393.1,1211.6 2396.8,1211.2 2400.5,1212.0 2404.2,1212.1 2408.0,1211.8 2411.7,1212.0 2415.4,1211.5 2419.1,1212.1 2422.9,1211.9 2426.6,1211.6 2430.3,1210.9 2434.0,1211.6 2437.8,1211.0 2441.5,1211.7 2445.2,1211.8 2448.9,1211.1 2452.7,1211.3 2456.4,1211.9 2460.1,1210.9 2463.8,1211.6 2467.6,1211.0 2471.3,1212.0 2475.0,1211.6 2478.7,1211.5 2482.5,1211.9 2486.2,1211.8 2489.9,1211.6 2493.6,1211.6 2497.4,1212.3 2501.1,1211.9 2504.8,1212.3 2508.5,1211.8 2512.3,1212.1 2516.0,1211.6 2519.7,1212.3 2523.4,1210.9 2527.2,1211.9 2530.9,1211.9 2534.6,1212.2 2538.3,1212.0 2542.1,1212.4 2545.8,1211.6 2549.5,1211.6 2553.2,1212.4 2557.0,1211.5 2560.7,1212.1 2564.4,1211.4 2568.1,1212.5 2571.9,1212.1 2575.6,1211.0 2579.3,1211.5 2583.0,1211.0 2586.8,1211.4 2590.5,1211.5 2594.2,1212.1 2597.9,1212.0 2601.7,1211.8 2605.4,1211.8 2609.1,1210.9 2612.8,1211.1 2616.6,1211.3 2620.3,1212.5 2624.0,1211.8 2627.7,1211.8 2631.5,1211.7 2635.2,1211.8 2638.9,1211.0 2642.6,1212.2 2646.4,1211.7 2650.1,1211.4 2653.8,1211.5 2657.5,1210.9 2661.3,1211.6 2665.0,1211.5 2668.7,1211.8 2672.4,1211.6 2676.2,1211.3 2679.9,1211.2 2683.6,1211.7 2687.3,1212.0 2691.1,1211.4 2694.8,1211.0 2698.5,1211.5 2702.2,1211.9 2706.0,1212.0 2709.7,1211.7 2713.4,1211.5 2717.1,1211.2 2720.9,1211.5 2724.6,1211.7 2728.3,1211.1 2732.0,1211.8 2735.8,1211.6 2739.5,1211.7 2743.2,1211.6 2746.9,1210.8 2750.7,1210.9 2754.4,1211.4 2758.1,1212.3 2761.8,1211.7 2765.6,1212.2 2769.3,1211.5 2773.0,1211.1" fill="none" stroke="#e07f38" stroke-width="3" stroke-linejoin="round" />
<polyline points="2143.5,1208.1 2147.2,1211.0 2150.9,1209.7 2154.7,1210.5 2158.4,1208.5 2162.1,1206.9 2165.8,1208.8 2169.6,1206.1 2173.3,1209.1 2177.0,1211.4 2180.7,1209.4 2184.5,1208.8 2188.2,1208.4 2191.9,1207.6 2195.6,1208.7 2199.4,1207.7 2203.1,1208.3 2206.8,1207.7 2210.5,1210.2 2214.3,1208.0 2218.0,1209.2 2221.7,1207.2 2225.4,1209.2 2229.2,1210.5 2232.9,1210.9 2236.6,1211.1 2240.3,1207.5 2244.1,1209.9 2247.8,1208.7 2251.5,1210.4 2255.2,1207.5 2259.0,1135.3 2262.7,1208.8 2266.4,1207.4 2270.1,1210.9 2273.9,1207.3 2277.6,1207.8 2281.3,1204.3 2285.0,1208.1 2288.8,1207.4 2292.5,1209.5 2296.2,1208.8 2299.9,1207.9 2303.7,1207.6 2307.4,1208.3 2311.1,1209.1 2314.8,1207.2 2318.6,1210.9 2322.3,1209.1 2326.0,1208.5 2329.7,1210.4 2333.5,1207.6 2337.2,1208.0 2340.9,1207.7 2344.6,1203.6 2348.4,1208.2 2352.1,1204.2 2355.8,1203.5 2359.5,1209.0 2363.3,1209.5 2367.0,1208.5 2370.7,1209.2 2374.4,1204.5 2378.2,1209.6 2381.9,1207.7 2385.6,1210.3 2389.3,1208.3 2393.1,1209.1 2396.8,1210.4 2400.5,1207.7 2404.2,1208.4 2408.0,1208.6 2411.7,1210.0 2415.4,1209.8 2419.1,1211.2 2422.9,1210.0 2426.6,1210.3 2430.3,1209.8 2434.0,1210.2 2437.8,1209.4 2441.5,1208.3 2445.2,1209.1 2448.9,1209.0 2452.7,1206.8 2456.4,1210.2 2460.1,1209.7 2463.8,1209.7 2467.6,1207.7 2471.3,1211.0 2475.0,1210.2 2478.7,1210.6 2482.5,1210.5 2486.2,1210.9 2489.9,1209.6 2493.6,1208.5 2497.4,1207.7 2501.1,1210.4 2504.8,1189.8 2508.5,1207.3 2512.3,1207.9 2516.0,1208.3 2519.7,1211.2 2523.4,1118.1 2527.2,1209.0 2530.9,1209.7 2534.6,1208.2 2538.3,1131.2 2542.1,1210.8 2545.8,1208.6 2549.5,1208.4 2553.2,1210.2 2557.0,1207.2 2560.7,1210.0 2564.4,1205.2 2568.1,1211.0 2571.9,1208.5 2575.6,1203.7 2579.3,1209.5 2583.0,1208.7 2586.8,1209.2 2590.5,1209.4 2594.2,1206.2 2597.9,1208.3 2601.7,1209.4 2605.4,1209.9 2609.1,1206.7 2612.8,1206.6 2616.6,1209.8 2620.3,1209.4 2624.0,1203.6 2627.7,1209.3 2631.5,1205.8 2635.2,1210.4 2638.9,1208.6 2642.6,1209.0 2646.4,1209.6 2650.1,1208.5 2653.8,1207.2 2657.5,1208.8 2661.3,1208.7 2665.0,1207.4 2668.7,1209.2 2672.4,1207.4 2676.2,1206.8 2679.9,1207.7 2683.6,1210.7 2687.3,1207.9 2691.1,1207.1 2694.8,1207.9 2698.5,1209.7 2702.2,1185.0 2706.0,1210.4 2709.7,1209.8 2713.4,1207.1 2717.1,1209.3 2720.9,1210.8 2724.6,1207.6 2728.3,1210.1 2732.0,1210.7 2735.8,1207.3 2739.5,1207.7 2743.2,1207.7 2746.9,1206.5 2750.7,1201.7 2754.4,1210.6 2758.1,1209.5 2761.8,1210.6 2765.6,1208.9 2769.3,1208.8 2773.0,1207.7" fill="none" stroke="#55a868" stroke-width="4" stroke-linejoin="round" />
<polyline points="2143.5,1200.0 2147.2,1204.4 2150.9,1202.1 2154.7,1203.1 2158.4,1201.8 2162.1,1200.5 2165.8,1201.9 2169.6,1197.5 2173.3,1201.5 2177.0,1201.8 2180.7,1200.8 2184.5,1199.8 2188.2,1200.1 2191.9,1199.0 2195.6,1199.9 2199.4,1197.2 2203.1,1198.9 2206.8,1199.5 2210.5,1202.7 2214.3,1200.5 2218.0,1202.1 2221.7,1199.8 2225.4,1200.1 2229.2,1200.4 2232.9,1203.3 2236.6,1196.6 2240.3,1194.1 2244.1,1203.7 2247.8,1200.1 2251.5,1203.1 2255.2,1199.5 2259.0,1126.8 2262.7,1194.6 2266.4,1197.7 2270.1,1200.2 2273.9,1197.8 2277.6,1197.1 2281.3,1196.6 2285.0,1202.0 2288.8,1197.8 2292.5,1201.1 2296.2,1200.6 2299.9,1195.1 2303.7,1196.1 2307.4,1201.6 2311.1,1199.6 2314.8,1197.0 2318.6,1201.7 2322.3,1201.1 2326.0,1201.9 2329.7,1200.2 2333.5,1197.6 2337.2,1199.9 2340.9,1197.5 2344.6,1194.6 2348.4,1200.8 2352.1,1197.9 2355.8,1194.4 2359.5,1201.8 2363.3,1201.1 2367.0,1200.7 2370.7,1201.1 2374.4,1197.8 2378.2,1203.4 2381.9,1198.0 2385.6,1200.7 2389.3,1201.5 2393.1,1201.8 2396.8,1201.7 2400.5,1197.1 2404.2,1198.7 2408.0,1198.2 2411.7,1202.3 2415.4,1200.2 2419.1,1201.0 2422.9,1200.8 2426.6,1201.3 2430.3,1200.7 2434.0,1204.0 2437.8,1199.3 2441.5,1202.0 2445.2,1199.4 2448.9,1199.1 2452.7,1198.0 2456.4,1198.7 2460.1,1200.2 2463.8,1202.5 2467.6,1201.3 2471.3,1200.1 2475.0,1200.4 2478.7,1204.4 2482.5,1202.7 2486.2,1202.2 2489.9,1199.2 2493.6,1199.4 2497.4,1193.4 2501.1,1202.7 2504.8,1187.3 2508.5,1200.2 2512.3,1199.5 2516.0,1201.8 2519.7,1202.1 2523.4,1107.6 2527.2,1199.1 2530.9,1201.6 2534.6,1197.9 2538.3,1122.2 2542.1,1202.5 2545.8,1200.1 2549.5,1200.6 2553.2,1203.0 2557.0,1194.9 2560.7,1201.2 2564.4,1197.8 2568.1,1201.1 2571.9,1198.8 2575.6,1193.2 2579.3,1201.6 2583.0,1199.6 2586.8,1202.2 2590.5,1196.3 2594.2,1199.7 2597.9,1201.7 2601.7,1202.0 2605.4,1200.3 2609.1,1196.9 2612.8,1199.3 2616.6,1203.6 2620.3,1200.5 2624.0,1195.2 2627.7,1201.6 2631.5,1198.8 2635.2,1199.8 2638.9,1199.0 2642.6,1202.7 2646.4,1200.1 2650.1,1200.0 2653.8,1200.3 2657.5,1200.3 2661.3,1200.5 2665.0,1197.1 2668.7,1199.6 2672.4,1199.1 2676.2,1200.1 2679.9,1198.2 2683.6,1200.4 2687.3,1199.5 2691.1,1200.5 2694.8,1199.3 2698.5,1200.8 2702.2,1181.9 2706.0,1202.5 2709.7,1202.2 2713.4,1199.1 2717.1,1201.1 2720.9,1203.3 2724.6,1199.5 2728.3,1203.8 2732.0,1204.3 2735.8,1200.3 2739.5,1201.4 2743.2,1200.4 2746.9,1196.8 2750.7,1195.3 2754.4,1202.6 2758.1,1201.8 2761.8,1201.8 2765.6,1202.2 2769.3,1198.1 2773.0,1198.3" fill="none" stroke="#9b6fc6" stroke-width="4.3" stroke-linejoin="round" />
<polyline points="2143.5,1194.2 2147.2,1183.3 2150.9,1198.1 2154.7,1196.9 2158.4,1198.3 2162.1,1179.9 2165.8,1197.1 2169.6,1178.5 2173.3,1195.4 2177.0,1185.6 2180.7,1195.3 2184.5,1191.9 2188.2,1191.4 2191.9,1190.6 2195.6,1195.3 2199.4,1181.9 2203.1,1185.5 2206.8,1194.8 2210.5,1199.3 2214.3,1194.8 2218.0,1198.4 2221.7,1196.1 2225.4,1195.3 2229.2,1196.5 2232.9,1195.4 2236.6,1190.7 2240.3,1190.1 2244.1,1197.5 2247.8,1194.8 2251.5,1196.2 2255.2,1169.7 2259.0,1040.9 2262.7,1161.1 2266.4,1190.4 2270.1,1194.8 2273.9,1190.1 2277.6,1192.1 2281.3,1191.2 2285.0,1196.8 2288.8,1191.0 2292.5,1181.9 2296.2,1195.0 2299.9,1188.0 2303.7,1189.4 2307.4,1193.2 2311.1,1191.7 2314.8,1188.5 2318.6,1192.9 2322.3,1197.4 2326.0,1197.9 2329.7,1193.4 2333.5,1192.1 2337.2,1180.2 2340.9,1191.6 2344.6,1189.4 2348.4,1195.5 2352.1,1191.4 2355.8,1188.7 2359.5,1195.8 2363.3,1194.0 2367.0,1192.4 2370.7,1194.7 2374.4,1190.8 2378.2,1196.4 2381.9,1189.2 2385.6,1191.6 2389.3,1194.5 2393.1,1198.5 2396.8,1195.3 2400.5,1189.1 2404.2,1191.5 2408.0,1190.9 2411.7,1194.1 2415.4,1196.9 2419.1,1196.1 2422.9,1193.3 2426.6,1197.0 2430.3,1197.2 2434.0,1188.5 2437.8,1195.4 2441.5,1198.5 2445.2,1191.0 2448.9,1191.9 2452.7,1191.0 2456.4,1194.8 2460.1,1194.1 2463.8,1195.8 2467.6,1188.0 2471.3,1191.0 2475.0,1192.5 2478.7,1178.9 2482.5,1184.6 2486.2,1193.4 2489.9,1181.4 2493.6,1193.3 2497.4,1185.1 2501.1,1196.1 2504.8,1162.0 2508.5,1194.7 2512.3,1191.2 2516.0,1194.4 2519.7,1160.1 2523.4,1002.6 2527.2,1149.6 2530.9,1196.9 2534.6,1167.4 2538.3,1031.7 2542.1,1158.3 2545.8,1196.5 2549.5,1196.7 2553.2,1198.5 2557.0,1188.4 2560.7,1193.3 2564.4,1193.1 2568.1,1196.4 2571.9,1190.9 2575.6,1185.2 2579.3,1182.9 2583.0,1193.7 2586.8,1193.8 2590.5,1177.3 2594.2,1192.8 2597.9,1195.7 2601.7,1197.1 2605.4,1196.0 2609.1,1190.8 2612.8,1175.8 2616.6,1197.9 2620.3,1194.4 2624.0,1190.7 2627.7,1198.4 2631.5,1191.9 2635.2,1193.5 2638.9,1193.8 2642.6,1197.2 2646.4,1192.7 2650.1,1192.2 2653.8,1181.1 2657.5,1177.3 2661.3,1194.6 2665.0,1193.2 2668.7,1191.4 2672.4,1191.4 2676.2,1192.7 2679.9,1193.4 2683.6,1195.3 2687.3,1191.1 2691.1,1196.6 2694.8,1195.3 2698.5,1192.3 2702.2,1151.3 2706.0,1194.2 2709.7,1188.7 2713.4,1191.5 2717.1,1194.3 2720.9,1200.0 2724.6,1192.5 2728.3,1194.7 2732.0,1195.4 2735.8,1193.1 2739.5,1195.6 2743.2,1194.7 2746.9,1188.7 2750.7,1178.9 2754.4,1194.8 2758.1,1193.6 2761.8,1196.7 2765.6,1195.4 2769.3,1192.8 2773.0,1193.9" fill="none" stroke="#6e2a26" stroke-width="4.6" stroke-linejoin="round" />
<rect x="2227.4" y="979.6" width="11.3" height="233" fill="rgba(230,150,135,0.45)" stroke="#d06a5c" stroke-width="2.5"/>
<rect x="2525" y="979.6" width="7.4" height="233" fill="#d06a5c" fill-opacity="0.85"/>
<polygon points="2762.0,1228.0 2770.0,1215.0 2778.0,1228.0" fill="#5a93e4"/>
<text x="2090.0" y="563.0" font-size="32.5" fill="#35383e" stroke="#35383e" stroke-width="0.75" letter-spacing="-0.75">Teams Call Quality</text>
<line x1="2111.2" y1="598.9" x2="2768.6" y2="598.9" stroke="#cacaca" stroke-width="2"/>
<line x1="2111.2" y1="644.7" x2="2768.6" y2="644.7" stroke="#cacaca" stroke-width="2"/>
<line x1="2111.2" y1="690.9" x2="2768.6" y2="690.9" stroke="#cacaca" stroke-width="2"/>
<line x1="2111.2" y1="737.0" x2="2768.6" y2="737.0" stroke="#cacaca" stroke-width="2"/>
<line x1="2111.2" y1="782.9" x2="2768.6" y2="782.9" stroke="#cacaca" stroke-width="2"/>
<line x1="2111.2" y1="828.7" x2="2768.6" y2="828.7" stroke="#cacaca" stroke-width="2"/>
<line x1="2130.3" y1="828.7" x2="2130.3" y2="839.7" stroke="#cacaca" stroke-width="2"/>
<text x="2130.3" y="862.0" font-size="23" fill="#3b3e44" stroke="#3b3e44" stroke-width="0.35" letter-spacing="-0.4" text-anchor="middle" font-weight="normal" >07:00</text>
<line x1="2212.5" y1="828.7" x2="2212.5" y2="839.7" stroke="#cacaca" stroke-width="2"/>
<text x="2212.5" y="862.0" font-size="23" fill="#3b3e44" stroke="#3b3e44" stroke-width="0.35" letter-spacing="-0.4" text-anchor="middle" font-weight="normal" >08:00</text>
<line x1="2294.7" y1="828.7" x2="2294.7" y2="839.7" stroke="#cacaca" stroke-width="2"/>
<text x="2294.7" y="862.0" font-size="23" fill="#3b3e44" stroke="#3b3e44" stroke-width="0.35" letter-spacing="-0.4" text-anchor="middle" font-weight="normal" >09:00</text>
<line x1="2376.9" y1="828.7" x2="2376.9" y2="839.7" stroke="#cacaca" stroke-width="2"/>
<text x="2376.9" y="862.0" font-size="23" fill="#3b3e44" stroke="#3b3e44" stroke-width="0.35" letter-spacing="-0.4" text-anchor="middle" font-weight="normal" >10:00</text>
<line x1="2459.1" y1="828.7" x2="2459.1" y2="839.7" stroke="#cacaca" stroke-width="2"/>
<text x="2459.1" y="862.0" font-size="23" fill="#3b3e44" stroke="#3b3e44" stroke-width="0.35" letter-spacing="-0.4" text-anchor="middle" font-weight="normal" >11:00</text>
<line x1="2541.3" y1="828.7" x2="2541.3" y2="839.7" stroke="#cacaca" stroke-width="2"/>
<text x="2541.3" y="862.0" font-size="23" fill="#3b3e44" stroke="#3b3e44" stroke-width="0.35" letter-spacing="-0.4" text-anchor="middle" font-weight="normal" >12:00</text>
<line x1="2623.5" y1="828.7" x2="2623.5" y2="839.7" stroke="#cacaca" stroke-width="2"/>
<text x="2623.5" y="862.0" font-size="23" fill="#3b3e44" stroke="#3b3e44" stroke-width="0.35" letter-spacing="-0.4" text-anchor="middle" font-weight="normal" >13:00</text>
<line x1="2705.7" y1="828.7" x2="2705.7" y2="839.7" stroke="#cacaca" stroke-width="2"/>
<text x="2705.7" y="862.0" font-size="23" fill="#3b3e44" stroke="#3b3e44" stroke-width="0.35" letter-spacing="-0.4" text-anchor="middle" font-weight="normal" >14:00</text>
<rect x="2206.0" y="579.0" width="4.3" height="250.0" fill="#f5e1c0" fill-opacity="0.7"/>
<rect x="2231.3" y="579.0" width="3.2" height="250.0" fill="#f5e1c0" fill-opacity="0.7"/>
<rect x="2522.7" y="579.0" width="3.8" height="250.0" fill="#f5e1c0" fill-opacity="0.7"/>
<polyline points="2118.3,610.5 2199.0,610.5 2203.8,644.4 2207.7,700.9 2211.9,689.6 2216.1,678.3 2220.0,691.2 2224.2,668.0 2228.0,689.6 2232.9,700.9 2236.8,678.3 2240.9,677.3 2244.8,610.5 2500.7,610.5 2507.2,657.3 2512.0,667.0 2516.2,667.0 2520.7,678.3 2524.9,707.3 2533.0,610.5 2767.0,610.5" fill="none" stroke="#5b94e3" stroke-width="4" stroke-linejoin="round" />
<text x="0.0" y="0.0" font-size="23" fill="#3b3e44" stroke="#3b3e44" stroke-width="0.35" letter-spacing="-0.4" text-anchor="start" font-weight="normal" transform="translate(2093,862.0) rotate(-90)">Poor LowMed.HighBest</text>
<text x="2090.0" y="1327.0" font-size="32.5" fill="#35383e" stroke="#35383e" stroke-width="0.75" letter-spacing="-0.75">Zoom Call Quality</text>
<line x1="2111.2" y1="1362.9" x2="2768.6" y2="1362.9" stroke="#cacaca" stroke-width="2"/>
<line x1="2111.2" y1="1408.7" x2="2768.6" y2="1408.7" stroke="#cacaca" stroke-width="2"/>
<line x1="2111.2" y1="1454.9" x2="2768.6" y2="1454.9" stroke="#cacaca" stroke-width="2"/>
<line x1="2111.2" y1="1501.0" x2="2768.6" y2="1501.0" stroke="#cacaca" stroke-width="2"/>
<line x1="2111.2" y1="1546.9" x2="2768.6" y2="1546.9" stroke="#cacaca" stroke-width="2"/>
<line x1="2111.2" y1="1592.7" x2="2768.6" y2="1592.7" stroke="#cacaca" stroke-width="2"/>
<line x1="2130.3" y1="1592.7" x2="2130.3" y2="1603.7" stroke="#cacaca" stroke-width="2"/>
<text x="2130.3" y="1626.0" font-size="23" fill="#3b3e44" stroke="#3b3e44" stroke-width="0.35" letter-spacing="-0.4" text-anchor="middle" font-weight="normal" >07:00</text>
<line x1="2212.5" y1="1592.7" x2="2212.5" y2="1603.7" stroke="#cacaca" stroke-width="2"/>
<text x="2212.5" y="1626.0" font-size="23" fill="#3b3e44" stroke="#3b3e44" stroke-width="0.35" letter-spacing="-0.4" text-anchor="middle" font-weight="normal" >08:00</text>
<line x1="2294.7" y1="1592.7" x2="2294.7" y2="1603.7" stroke="#cacaca" stroke-width="2"/>
<text x="2294.7" y="1626.0" font-size="23" fill="#3b3e44" stroke="#3b3e44" stroke-width="0.35" letter-spacing="-0.4" text-anchor="middle" font-weight="normal" >09:00</text>
<line x1="2376.9" y1="1592.7" x2="2376.9" y2="1603.7" stroke="#cacaca" stroke-width="2"/>
<text x="2376.9" y="1626.0" font-size="23" fill="#3b3e44" stroke="#3b3e44" stroke-width="0.35" letter-spacing="-0.4" text-anchor="middle" font-weight="normal" >10:00</text>
<line x1="2459.1" y1="1592.7" x2="2459.1" y2="1603.7" stroke="#cacaca" stroke-width="2"/>
<text x="2459.1" y="1626.0" font-size="23" fill="#3b3e44" stroke="#3b3e44" stroke-width="0.35" letter-spacing="-0.4" text-anchor="middle" font-weight="normal" >11:00</text>
<line x1="2541.3" y1="1592.7" x2="2541.3" y2="1603.7" stroke="#cacaca" stroke-width="2"/>
<text x="2541.3" y="1626.0" font-size="23" fill="#3b3e44" stroke="#3b3e44" stroke-width="0.35" letter-spacing="-0.4" text-anchor="middle" font-weight="normal" >12:00</text>
<line x1="2623.5" y1="1592.7" x2="2623.5" y2="1603.7" stroke="#cacaca" stroke-width="2"/>
<text x="2623.5" y="1626.0" font-size="23" fill="#3b3e44" stroke="#3b3e44" stroke-width="0.35" letter-spacing="-0.4" text-anchor="middle" font-weight="normal" >13:00</text>
<line x1="2705.7" y1="1592.7" x2="2705.7" y2="1603.7" stroke="#cacaca" stroke-width="2"/>
<text x="2705.7" y="1626.0" font-size="23" fill="#3b3e44" stroke="#3b3e44" stroke-width="0.35" letter-spacing="-0.4" text-anchor="middle" font-weight="normal" >14:00</text>
<rect x="2206.0" y="1343.0" width="4.3" height="250.0" fill="#f5e1c0" fill-opacity="0.7"/>
<rect x="2231.3" y="1343.0" width="3.2" height="250.0" fill="#f5e1c0" fill-opacity="0.7"/>
<rect x="2522.7" y="1343.0" width="3.8" height="250.0" fill="#f5e1c0" fill-opacity="0.7"/>
<polyline points="2118.3,1374.5 2199.0,1374.5 2203.8,1408.4 2207.7,1464.9 2211.9,1453.6 2216.1,1442.3 2220.0,1455.2 2224.2,1432.0 2228.0,1453.6 2232.9,1464.9 2236.8,1442.3 2240.9,1441.3 2244.8,1374.5 2500.7,1374.5 2507.2,1421.3 2512.0,1431.0 2516.2,1431.0 2520.7,1442.3 2524.9,1471.3 2533.0,1374.5 2767.0,1374.5" fill="none" stroke="#5b94e3" stroke-width="4" stroke-linejoin="round" />
<text x="0.0" y="0.0" font-size="23" fill="#3b3e44" stroke="#3b3e44" stroke-width="0.35" letter-spacing="-0.4" text-anchor="start" font-weight="normal" transform="translate(2093,1626.0) rotate(-90)">Poor LowMed.HighBest</text>
<polygon points="2762.0,1608.0 2770.0,1594.0 2778.0,1608.0" fill="#5a93e4"/>
</svg>
<svg class="abs" style="left:0;top:0" width="2830" height="1910" viewBox="0 0 2830 1910">
<!-- logo -->
<g fill="none" stroke="#ed7631" stroke-width="3" stroke-linecap="round">
<path d="M62.8 41.2 L42 76.7 M62.8 41.2 L83.6 53.2 M83.6 53.2 L83.3 76.7 M83.3 76.7 L62.8 88.7 M42 76.7 L62.8 88.7"/>
<path d="M62.8 41.2 Q70 62 62.8 88.7"/>
<path d="M42 76.7 Q60 74 83.6 53.2"/>
</g>
<g fill="#fff" stroke="#ed7631" stroke-width="3.2">
<circle cx="62.8" cy="41.2" r="4.6"/><circle cx="83.6" cy="53.2" r="4.6"/><circle cx="42" cy="76.7" r="4.6"/><circle cx="83.3" cy="76.7" r="4.6"/><circle cx="62.8" cy="88.7" r="4.6"/>
</g>
<!-- sidebar icons -->
<g fill="none" stroke="#8794a3" stroke-width="2.3" stroke-linecap="round" stroke-linejoin="round">
<path d="M48 173 L62.8 158.7 L77.6 173"/>
<path d="M51.8 176 V183.5 Q51.8 186.3 54.6 186.3 H57.6 Q60 186.3 60 183.5 V180.5 Q60 178.7 61.5 178.7 H64.5 Q66 178.7 66 180.5 V183.5 Q66 186.3 68.8 186.3 H71.7 Q74.5 186.3 74.5 183.5 V176"/>
<circle cx="62.8" cy="293" r="14.3"/>
<path d="M62.8 285.6 V293.5"/>
<rect x="48.5" y="416.2" width="6.2" height="10.5" rx="2"/>
<rect x="60.2" y="408.4" width="6" height="18.3" rx="2"/>
<rect x="71.4" y="398.9" width="6.1" height="27.8" rx="2"/>
<circle cx="62.8" cy="533" r="6.3"/>
<path d="M52.5 524 A14 14 0 0 0 52.8 543.2"/>
<path d="M73 522.3 A14 14 0 0 1 72.8 542.2"/>
<circle cx="53.6" cy="521.6" r="2.2"/>
<circle cx="72" cy="544.4" r="2.2"/>
<rect x="48.6" y="650.6" width="28.8" height="14.3" rx="2.5"/>
<path d="M70.4 641.8 V650.6"/>
<path d="M55.6 658.5 H61.9" stroke-width="3.6"/>
<circle cx="69.3" cy="657.3" r="1.9"/>
<path d="M51.3 783.6 A13.5 13.5 0 1 1 73.7 783.6"/>
<path d="M61.5 781 L68.5 774" stroke-width="2.8"/>
<path d="M62.8 999 L77.2 1006.5 L62.8 1014 L48.4 1006.5 Z"/>
<path d="M48.4 1012.5 L62.8 1020 L77.2 1012.5"/>
<path d="M48.4 1018.5 L62.8 1026 L77.2 1018.5"/>
<path d="M48 1806 H77.5 M48 1815 H77.5 M48 1823.5 H77.5" stroke-width="3"/>
</g>
<circle cx="62.8" cy="298.3" r="1.5" fill="#8794a3"/>
<circle cx="62" cy="780.5" r="2.3" fill="#8794a3"/>
<g fill="none" stroke="#5a93e4" stroke-width="2.8">
<rect x="48.8" y="879.4" width="28.3" height="10.7" rx="1.8"/>
<rect x="48.8" y="895.4" width="11.5" height="11" rx="1.8"/>
<rect x="65.4" y="895.4" width="11.7" height="11" rx="1.8"/>
</g>
<g font-size="20" fill="#8794a3" text-anchor="middle" font-family="Liberation Sans">
<text x="63" y="214">Home</text>
<text x="63" y="334">Issues</text>
<text x="63" y="454">Monitoring</text>
<text x="63" y="574">Agents</text>
<text x="63" y="694">Devices</text>
<text x="63" y="813">Speedtests</text>
<text x="63" y="934" fill="#5a93e4">Dashboards</text>
<text x="63" y="1053">APM</text>
<text x="63" y="1856">Menu</text>
</g>
<!-- header -->
<rect x="162" y="18" width="498" height="91" rx="8" fill="#fff" stroke="#c9c9cb" stroke-width="2"/>
<text x="195" y="73" font-size="28" fill="#202226" letter-spacing="-0.85" font-family="Liberation Sans">2 - SD-WAN - High BW ISP2</text>
<path d="M601.5 57.5 L613.5 69.5 L625.5 57.5" fill="none" stroke="#34373c" stroke-width="3.8" stroke-linecap="butt" stroke-linejoin="miter"/>
<rect x="697" y="24" width="156" height="80" rx="8" fill="#d8d9db"/>
<text x="775" y="73" font-size="28" fill="#fff" text-anchor="middle" letter-spacing="-0.8" font-family="Liberation Sans">Save</text>
<g fill="#5a93e4"><circle cx="894" cy="52" r="3.8"/><circle cx="894" cy="64" r="3.8"/><circle cx="894" cy="76" r="3.8"/></g>
<g fill="none" stroke="#5a93e4" stroke-width="2.4" stroke-linecap="round">
<rect x="2135.3" y="54.2" width="21.5" height="21.8" rx="3"/>
<path d="M2135.3 61.4 H2156.8 M2141 51.8 V57 M2150.6 51.8 V57"/>
</g>
<text x="2198" y="73" font-size="28" fill="#5a93e4" font-family="Liberation Sans">Last 8 Hours</text>
<path d="M2371.6 52 H2386.3 V55.9 H2383.7 V62 Q2387.9 64 2387.9 68.3 H2380.4 V73.5 L2379 75.5 L2377.6 73.5 V68.3 H2370 Q2370 64 2374.2 62 V55.9 H2371.6 Z" fill="#5f95e4"/>
<path d="M2461.7 52 L2447.8 66 L2461.7 80" fill="none" stroke="#5a93e4" stroke-width="4" stroke-linecap="round" stroke-linejoin="round"/>
<path d="M2661.00 44.30 L2661.17 44.30 L2661.34 44.32 L2661.51 44.34 L2661.68 44.36 L2661.85 44.40 L2662.02 44.44 L2662.19 44.49 L2662.35 44.55 L2662.52 44.62 L2662.68 44.69 L2662.84 44.77 L2663.00 44.86 L2663.16 44.95 L2663.31 45.06 L2663.47 45.16 L2663.62 45.28 L2663.76 45.40 L2663.91 45.53 L2664.05 45.66 L2664.19 45.80 L2664.33 45.94 L2664.46 46.09 L2664.59 46.25 L2664.72 46.41 L2664.84 46.57 L2664.96 46.74 L2665.08 46.91 L2665.19 47.08 L2665.30 47.26 L2665.41 47.44 L2665.51 47.62 L2665.61 47.81 L2665.71 48.00 L2665.80 48.19 L2665.89 48.38 L2665.98 48.57 L2666.07 48.76 L2666.15 48.95 L2666.23 49.14 L2666.30 49.34 L2666.38 49.52 L2666.45 49.71 L2666.52 49.89 L2666.59 50.07 L2666.66 50.23 L2666.83 50.17 L2667.00 50.09 L2667.18 50.01 L2667.36 49.93 L2667.55 49.85 L2667.74 49.77 L2667.93 49.69 L2668.12 49.61 L2668.32 49.54 L2668.51 49.46 L2668.71 49.39 L2668.91 49.33 L2669.11 49.26 L2669.32 49.20 L2669.52 49.14 L2669.72 49.09 L2669.93 49.04 L2670.13 49.00 L2670.33 48.96 L2670.54 48.93 L2670.74 48.90 L2670.94 48.88 L2671.14 48.86 L2671.34 48.85 L2671.54 48.84 L2671.74 48.84 L2671.93 48.85 L2672.13 48.86 L2672.32 48.88 L2672.50 48.91 L2672.69 48.94 L2672.87 48.98 L2673.05 49.02 L2673.22 49.07 L2673.39 49.13 L2673.56 49.19 L2673.72 49.26 L2673.88 49.34 L2674.04 49.42 L2674.19 49.51 L2674.33 49.60 L2674.47 49.70 L2674.61 49.81 L2674.74 49.92 L2674.86 50.04 L2674.98 50.16 L2675.09 50.29 L2675.20 50.43 L2675.30 50.57 L2675.39 50.71 L2675.48 50.86 L2675.56 51.02 L2675.64 51.18 L2675.71 51.34 L2675.77 51.51 L2675.83 51.68 L2675.88 51.85 L2675.92 52.03 L2675.96 52.21 L2675.99 52.40 L2676.02 52.58 L2676.04 52.77 L2676.05 52.97 L2676.06 53.16 L2676.06 53.36 L2676.05 53.56 L2676.04 53.76 L2676.02 53.96 L2676.00 54.16 L2675.97 54.36 L2675.94 54.57 L2675.90 54.77 L2675.86 54.97 L2675.81 55.18 L2675.76 55.38 L2675.70 55.58 L2675.64 55.79 L2675.57 55.99 L2675.51 56.19 L2675.44 56.39 L2675.36 56.58 L2675.29 56.78 L2675.21 56.97 L2675.13 57.16 L2675.05 57.35 L2674.97 57.54 L2674.89 57.72 L2674.81 57.90 L2674.73 58.07 L2674.67 58.24 L2674.83 58.31 L2675.01 58.38 L2675.19 58.45 L2675.38 58.52 L2675.56 58.60 L2675.76 58.67 L2675.95 58.75 L2676.14 58.83 L2676.33 58.92 L2676.52 59.01 L2676.71 59.10 L2676.90 59.19 L2677.09 59.29 L2677.28 59.39 L2677.46 59.49 L2677.64 59.60 L2677.82 59.71 L2677.99 59.82 L2678.16 59.94 L2678.33 60.06 L2678.49 60.18 L2678.65 60.31 L2678.81 60.44 L2678.96 60.57 L2679.10 60.71 L2679.24 60.85 L2679.37 60.99 L2679.50 61.14 L2679.62 61.28 L2679.74 61.43 L2679.84 61.59 L2679.95 61.74 L2680.04 61.90 L2680.13 62.06 L2680.21 62.22 L2680.28 62.38 L2680.35 62.55 L2680.41 62.71 L2680.46 62.88 L2680.50 63.05 L2680.54 63.22 L2680.56 63.39 L2680.58 63.56 L2680.60 63.73 L2680.60 63.90 L2680.60 64.07 L2680.58 64.24 L2680.56 64.41 L2680.54 64.58 L2680.50 64.75 L2680.46 64.92 L2680.41 65.09 L2680.35 65.25 L2680.28 65.42 L2680.21 65.58 L2680.13 65.74 L2680.04 65.90 L2679.95 66.06 L2679.84 66.21 L2679.74 66.37 L2679.62 66.52 L2679.50 66.66 L2679.37 66.81 L2679.24 66.95 L2679.10 67.09 L2678.96 67.23 L2678.81 67.36 L2678.65 67.49 L2678.49 67.62 L2678.33 67.74 L2678.16 67.86 L2677.99 67.98 L2677.82 68.09 L2677.64 68.20 L2677.46 68.31 L2677.28 68.41 L2677.09 68.51 L2676.90 68.61 L2676.71 68.70 L2676.52 68.79 L2676.33 68.88 L2676.14 68.97 L2675.95 69.05 L2675.76 69.13 L2675.56 69.20 L2675.38 69.28 L2675.19 69.35 L2675.01 69.42 L2674.83 69.49 L2674.67 69.56 L2674.73 69.73 L2674.81 69.90 L2674.89 70.08 L2674.97 70.26 L2675.05 70.45 L2675.13 70.64 L2675.21 70.83 L2675.29 71.02 L2675.36 71.22 L2675.44 71.41 L2675.51 71.61 L2675.57 71.81 L2675.64 72.01 L2675.70 72.22 L2675.76 72.42 L2675.81 72.62 L2675.86 72.83 L2675.90 73.03 L2675.94 73.23 L2675.97 73.44 L2676.00 73.64 L2676.02 73.84 L2676.04 74.04 L2676.05 74.24 L2676.06 74.44 L2676.06 74.64 L2676.05 74.83 L2676.04 75.03 L2676.02 75.22 L2675.99 75.40 L2675.96 75.59 L2675.92 75.77 L2675.88 75.95 L2675.83 76.12 L2675.77 76.29 L2675.71 76.46 L2675.64 76.62 L2675.56 76.78 L2675.48 76.94 L2675.39 77.09 L2675.30 77.23 L2675.20 77.37 L2675.09 77.51 L2674.98 77.64 L2674.86 77.76 L2674.74 77.88 L2674.61 77.99 L2674.47 78.10 L2674.33 78.20 L2674.19 78.29 L2674.04 78.38 L2673.88 78.46 L2673.72 78.54 L2673.56 78.61 L2673.39 78.67 L2673.22 78.73 L2673.05 78.78 L2672.87 78.82 L2672.69 78.86 L2672.50 78.89 L2672.32 78.92 L2672.13 78.94 L2671.93 78.95 L2671.74 78.96 L2671.54 78.96 L2671.34 78.95 L2671.14 78.94 L2670.94 78.92 L2670.74 78.90 L2670.54 78.87 L2670.33 78.84 L2670.13 78.80 L2669.93 78.76 L2669.72 78.71 L2669.52 78.66 L2669.32 78.60 L2669.11 78.54 L2668.91 78.47 L2668.71 78.41 L2668.51 78.34 L2668.32 78.26 L2668.12 78.19 L2667.93 78.11 L2667.74 78.03 L2667.55 77.95 L2667.36 77.87 L2667.18 77.79 L2667.00 77.71 L2666.83 77.63 L2666.66 77.57 L2666.59 77.73 L2666.52 77.91 L2666.45 78.09 L2666.38 78.28 L2666.30 78.46 L2666.23 78.66 L2666.15 78.85 L2666.07 79.04 L2665.98 79.23 L2665.89 79.42 L2665.80 79.61 L2665.71 79.80 L2665.61 79.99 L2665.51 80.18 L2665.41 80.36 L2665.30 80.54 L2665.19 80.72 L2665.08 80.89 L2664.96 81.06 L2664.84 81.23 L2664.72 81.39 L2664.59 81.55 L2664.46 81.71 L2664.33 81.86 L2664.19 82.00 L2664.05 82.14 L2663.91 82.27 L2663.76 82.40 L2663.62 82.52 L2663.47 82.64 L2663.31 82.74 L2663.16 82.85 L2663.00 82.94 L2662.84 83.03 L2662.68 83.11 L2662.52 83.18 L2662.35 83.25 L2662.19 83.31 L2662.02 83.36 L2661.85 83.40 L2661.68 83.44 L2661.51 83.46 L2661.34 83.48 L2661.17 83.50 L2661.00 83.50 L2660.83 83.50 L2660.66 83.48 L2660.49 83.46 L2660.32 83.44 L2660.15 83.40 L2659.98 83.36 L2659.81 83.31 L2659.65 83.25 L2659.48 83.18 L2659.32 83.11 L2659.16 83.03 L2659.00 82.94 L2658.84 82.85 L2658.69 82.74 L2658.53 82.64 L2658.38 82.52 L2658.24 82.40 L2658.09 82.27 L2657.95 82.14 L2657.81 82.00 L2657.67 81.86 L2657.54 81.71 L2657.41 81.55 L2657.28 81.39 L2657.16 81.23 L2657.04 81.06 L2656.92 80.89 L2656.81 80.72 L2656.70 80.54 L2656.59 80.36 L2656.49 80.18 L2656.39 79.99 L2656.29 79.80 L2656.20 79.61 L2656.11 79.42 L2656.02 79.23 L2655.93 79.04 L2655.85 78.85 L2655.77 78.66 L2655.70 78.46 L2655.62 78.28 L2655.55 78.09 L2655.48 77.91 L2655.41 77.73 L2655.34 77.57 L2655.17 77.63 L2655.00 77.71 L2654.82 77.79 L2654.64 77.87 L2654.45 77.95 L2654.26 78.03 L2654.07 78.11 L2653.88 78.19 L2653.68 78.26 L2653.49 78.34 L2653.29 78.41 L2653.09 78.47 L2652.89 78.54 L2652.68 78.60 L2652.48 78.66 L2652.28 78.71 L2652.07 78.76 L2651.87 78.80 L2651.67 78.84 L2651.46 78.87 L2651.26 78.90 L2651.06 78.92 L2650.86 78.94 L2650.66 78.95 L2650.46 78.96 L2650.26 78.96 L2650.07 78.95 L2649.87 78.94 L2649.68 78.92 L2649.50 78.89 L2649.31 78.86 L2649.13 78.82 L2648.95 78.78 L2648.78 78.73 L2648.61 78.67 L2648.44 78.61 L2648.28 78.54 L2648.12 78.46 L2647.96 78.38 L2647.81 78.29 L2647.67 78.20 L2647.53 78.10 L2647.39 77.99 L2647.26 77.88 L2647.14 77.76 L2647.02 77.64 L2646.91 77.51 L2646.80 77.37 L2646.70 77.23 L2646.61 77.09 L2646.52 76.94 L2646.44 76.78 L2646.36 76.62 L2646.29 76.46 L2646.23 76.29 L2646.17 76.12 L2646.12 75.95 L2646.08 75.77 L2646.04 75.59 L2646.01 75.40 L2645.98 75.22 L2645.96 75.03 L2645.95 74.83 L2645.94 74.64 L2645.94 74.44 L2645.95 74.24 L2645.96 74.04 L2645.98 73.84 L2646.00 73.64 L2646.03 73.44 L2646.06 73.23 L2646.10 73.03 L2646.14 72.83 L2646.19 72.62 L2646.24 72.42 L2646.30 72.22 L2646.36 72.01 L2646.43 71.81 L2646.49 71.61 L2646.56 71.41 L2646.64 71.22 L2646.71 71.02 L2646.79 70.83 L2646.87 70.64 L2646.95 70.45 L2647.03 70.26 L2647.11 70.08 L2647.19 69.90 L2647.27 69.73 L2647.33 69.56 L2647.17 69.49 L2646.99 69.42 L2646.81 69.35 L2646.62 69.28 L2646.44 69.20 L2646.24 69.13 L2646.05 69.05 L2645.86 68.97 L2645.67 68.88 L2645.48 68.79 L2645.29 68.70 L2645.10 68.61 L2644.91 68.51 L2644.72 68.41 L2644.54 68.31 L2644.36 68.20 L2644.18 68.09 L2644.01 67.98 L2643.84 67.86 L2643.67 67.74 L2643.51 67.62 L2643.35 67.49 L2643.19 67.36 L2643.04 67.23 L2642.90 67.09 L2642.76 66.95 L2642.63 66.81 L2642.50 66.66 L2642.38 66.52 L2642.26 66.37 L2642.16 66.21 L2642.05 66.06 L2641.96 65.90 L2641.87 65.74 L2641.79 65.58 L2641.72 65.42 L2641.65 65.25 L2641.59 65.09 L2641.54 64.92 L2641.50 64.75 L2641.46 64.58 L2641.44 64.41 L2641.42 64.24 L2641.40 64.07 L2641.40 63.90 L2641.40 63.73 L2641.42 63.56 L2641.44 63.39 L2641.46 63.22 L2641.50 63.05 L2641.54 62.88 L2641.59 62.71 L2641.65 62.55 L2641.72 62.38 L2641.79 62.22 L2641.87 62.06 L2641.96 61.90 L2642.05 61.74 L2642.16 61.59 L2642.26 61.43 L2642.38 61.28 L2642.50 61.14 L2642.63 60.99 L2642.76 60.85 L2642.90 60.71 L2643.04 60.57 L2643.19 60.44 L2643.35 60.31 L2643.51 60.18 L2643.67 60.06 L2643.84 59.94 L2644.01 59.82 L2644.18 59.71 L2644.36 59.60 L2644.54 59.49 L2644.72 59.39 L2644.91 59.29 L2645.10 59.19 L2645.29 59.10 L2645.48 59.01 L2645.67 58.92 L2645.86 58.83 L2646.05 58.75 L2646.24 58.67 L2646.44 58.60 L2646.62 58.52 L2646.81 58.45 L2646.99 58.38 L2647.17 58.31 L2647.33 58.24 L2647.27 58.07 L2647.19 57.90 L2647.11 57.72 L2647.03 57.54 L2646.95 57.35 L2646.87 57.16 L2646.79 56.97 L2646.71 56.78 L2646.64 56.58 L2646.56 56.39 L2646.49 56.19 L2646.43 55.99 L2646.36 55.79 L2646.30 55.58 L2646.24 55.38 L2646.19 55.18 L2646.14 54.97 L2646.10 54.77 L2646.06 54.57 L2646.03 54.36 L2646.00 54.16 L2645.98 53.96 L2645.96 53.76 L2645.95 53.56 L2645.94 53.36 L2645.94 53.16 L2645.95 52.97 L2645.96 52.77 L2645.98 52.58 L2646.01 52.40 L2646.04 52.21 L2646.08 52.03 L2646.12 51.85 L2646.17 51.68 L2646.23 51.51 L2646.29 51.34 L2646.36 51.18 L2646.44 51.02 L2646.52 50.86 L2646.61 50.71 L2646.70 50.57 L2646.80 50.43 L2646.91 50.29 L2647.02 50.16 L2647.14 50.04 L2647.26 49.92 L2647.39 49.81 L2647.53 49.70 L2647.67 49.60 L2647.81 49.51 L2647.96 49.42 L2648.12 49.34 L2648.28 49.26 L2648.44 49.19 L2648.61 49.13 L2648.78 49.07 L2648.95 49.02 L2649.13 48.98 L2649.31 48.94 L2649.50 48.91 L2649.68 48.88 L2649.87 48.86 L2650.07 48.85 L2650.26 48.84 L2650.46 48.84 L2650.66 48.85 L2650.86 48.86 L2651.06 48.88 L2651.26 48.90 L2651.46 48.93 L2651.67 48.96 L2651.87 49.00 L2652.07 49.04 L2652.28 49.09 L2652.48 49.14 L2652.68 49.20 L2652.89 49.26 L2653.09 49.33 L2653.29 49.39 L2653.49 49.46 L2653.68 49.54 L2653.88 49.61 L2654.07 49.69 L2654.26 49.77 L2654.45 49.85 L2654.64 49.93 L2654.82 50.01 L2655.00 50.09 L2655.17 50.17 L2655.34 50.23 L2655.41 50.07 L2655.48 49.89 L2655.55 49.71 L2655.62 49.52 L2655.70 49.34 L2655.77 49.14 L2655.85 48.95 L2655.93 48.76 L2656.02 48.57 L2656.11 48.38 L2656.20 48.19 L2656.29 48.00 L2656.39 47.81 L2656.49 47.62 L2656.59 47.44 L2656.70 47.26 L2656.81 47.08 L2656.92 46.91 L2657.04 46.74 L2657.16 46.57 L2657.28 46.41 L2657.41 46.25 L2657.54 46.09 L2657.67 45.94 L2657.81 45.80 L2657.95 45.66 L2658.09 45.53 L2658.24 45.40 L2658.38 45.28 L2658.53 45.16 L2658.69 45.06 L2658.84 44.95 L2659.00 44.86 L2659.16 44.77 L2659.32 44.69 L2659.48 44.62 L2659.65 44.55 L2659.81 44.49 L2659.98 44.44 L2660.15 44.40 L2660.32 44.36 L2660.49 44.34 L2660.66 44.32 L2660.83 44.30 Z" fill="none" stroke="#5a93e4" stroke-width="4.6" stroke-linejoin="round"/><circle cx="2661" cy="63.9" r="5.3" fill="none" stroke="#5a93e4" stroke-width="4.6"/>
<path d="M2768.6 69.5 A17 17 0 1 1 2764.5 51.3" fill="none" stroke="#5a93e4" stroke-width="4.6"/>
<polygon points="2772.9,44 2772.9,61.5 2755.6,61.5" fill="#5a93e4"/>
<!-- chat -->
<circle cx="2721" cy="1793" r="60" fill="#ed7731" style="filter:drop-shadow(0 2px 8px rgba(0,0,0,0.18))"/>
<path d="M2693.1 1768 Q2693.1 1760.8 2700.3 1760.8 H2742.1 Q2749.3 1760.8 2749.3 1768 V1824.8 L2732 1818.2 H2700.3 Q2693.1 1818.2 2693.1 1811 Z" fill="#fff"/>
<path d="M2702 1801.2 Q2721 1817 2740.3 1801.2" fill="none" stroke="#ed7731" stroke-width="3.4" stroke-linecap="round"/>
</svg>

</div>
</body></html>
